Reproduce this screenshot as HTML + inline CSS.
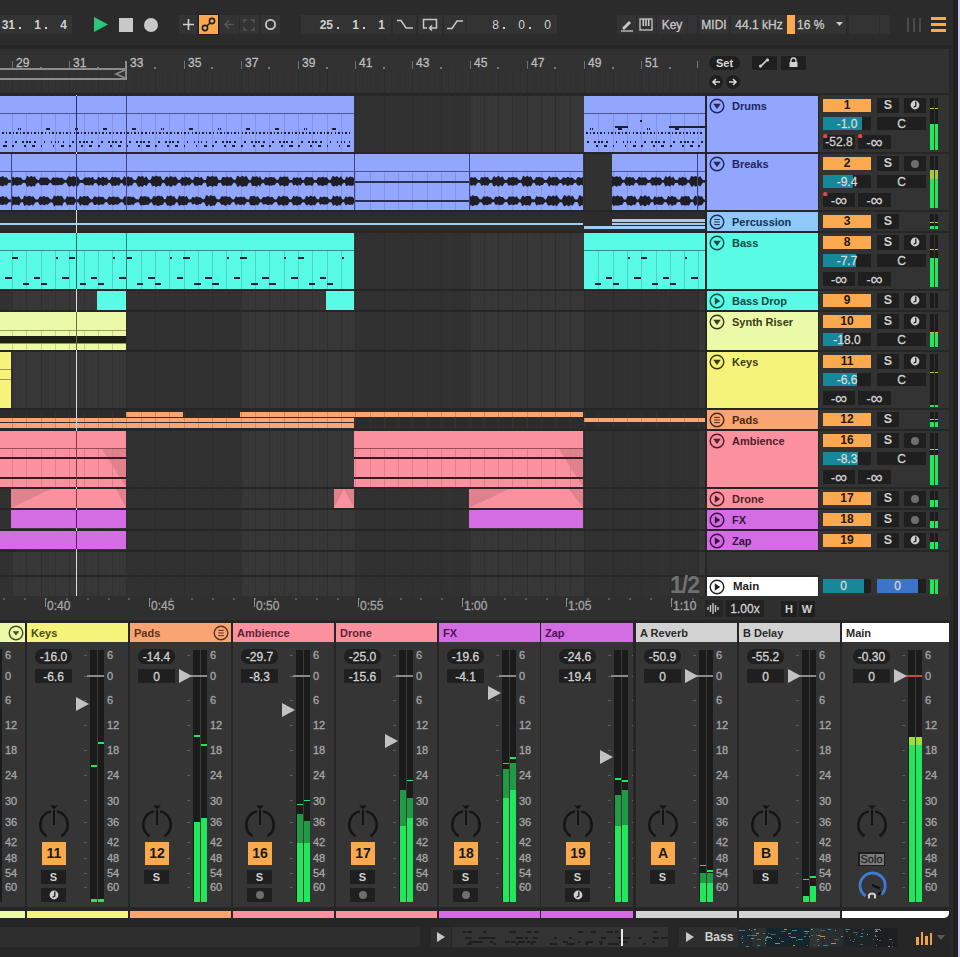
<!DOCTYPE html><html><head><meta charset="utf-8"><style>
html,body{margin:0;padding:0;width:960px;height:957px;overflow:hidden;background:#2b2b2b;font-family:"Liberation Sans",sans-serif;}
div{position:absolute;box-sizing:border-box;white-space:nowrap;}
.sb{-webkit-text-stroke:0.35px currentColor;}
svg{position:absolute;}
</style></head><body>
<div style="left:0px;top:0px;width:960px;height:49px;background:#2b2b2b;"></div>
<div style="left:0px;top:45px;width:960px;height:5px;background:#262626;"></div>
<div style="left:0px;top:15px;width:72px;height:19px;background:#333333;"></div>
<div style="left:-15px;top:17.6px;width:30px;text-align:right;font-size:12px;line-height:14px;color:#cfcfcf;font-weight:bold">31</div>
<div style="left:19px;top:27px;width:2px;height:2px;background:#cfcfcf;"></div>
<div style="left:11px;top:17.6px;width:30px;text-align:right;font-size:12px;line-height:14px;color:#cfcfcf;font-weight:bold">1</div>
<div style="left:45px;top:27px;width:2px;height:2px;background:#cfcfcf;"></div>
<div style="left:37px;top:17.6px;width:30px;text-align:right;font-size:12px;line-height:14px;color:#cfcfcf;font-weight:bold">4</div>
<svg style="left:93px;top:16px" width="16" height="17"><polygon points="1,1 15,8.5 1,16" fill="#2dc77a"/></svg>
<div style="left:119px;top:18px;width:14px;height:14px;background:#c8c8c8;"></div>
<svg style="left:143px;top:17px" width="16" height="16"><circle cx="8" cy="8" r="7" fill="#c8c8c8"/></svg>
<div style="left:179px;top:15px;width:18px;height:19px;background:#333333;"></div>
<svg style="left:181px;top:17px" width="15" height="15"><path d="M7.5 2V13 M2 7.5H13" stroke="#d0d0d0" stroke-width="1.6"/></svg>
<div style="left:198px;top:14px;width:21px;height:21px;background:#1e1e1e;"></div>
<div style="left:199px;top:15px;width:19px;height:19px;background:#fba94e;"></div>
<svg style="left:199px;top:15px" width="19" height="19"><circle cx="6" cy="13" r="2.6" fill="none" stroke="#222" stroke-width="1.6"/><circle cx="13" cy="6" r="2.6" fill="none" stroke="#222" stroke-width="1.6"/><line x1="8" y1="11" x2="11" y2="8" stroke="#222" stroke-width="1.6"/></svg>
<div style="left:220px;top:15px;width:19px;height:19px;background:#333333;"></div>
<svg style="left:222px;top:18px" width="14" height="13"><path d="M12 6.5 H3 M7 2.5 L3 6.5 L7 10.5" fill="none" stroke="#555" stroke-width="1.6"/></svg>
<div style="left:240px;top:15px;width:19px;height:19px;background:#333333;"></div>
<svg style="left:243px;top:19px" width="12" height="12"><path d="M1 4V1H4 M8 1H11V4 M11 8V11H8 M4 11H1V8" fill="none" stroke="#555" stroke-width="1.4"/></svg>
<div style="left:261px;top:15px;width:19px;height:19px;background:#333333;"></div>
<svg style="left:261px;top:15px" width="19" height="19"><circle cx="9.5" cy="9.5" r="4.6" fill="none" stroke="#c8c8c8" stroke-width="1.8"/></svg>
<div style="left:301px;top:15px;width:90px;height:19px;background:#333333;"></div>
<div style="left:303px;top:17.6px;width:30px;text-align:right;font-size:12px;line-height:14px;color:#cfcfcf;font-weight:bold">25</div>
<div style="left:337px;top:27px;width:2px;height:2px;background:#cfcfcf;"></div>
<div style="left:329px;top:17.6px;width:30px;text-align:right;font-size:12px;line-height:14px;color:#cfcfcf;font-weight:bold">1</div>
<div style="left:363px;top:27px;width:2px;height:2px;background:#cfcfcf;"></div>
<div style="left:355px;top:17.6px;width:30px;text-align:right;font-size:12px;line-height:14px;color:#cfcfcf;font-weight:bold">1</div>
<div style="left:393px;top:15px;width:23px;height:19px;background:#333333;"></div>
<svg style="left:396px;top:19px" width="18" height="11"><path d="M1 1.5H5L10 9H17" fill="none" stroke="#c8c8c8" stroke-width="1.5"/></svg>
<div style="left:418px;top:15px;width:24px;height:19px;background:#333333;"></div>
<svg style="left:421px;top:17px" width="18" height="15"><path d="M6 11H2.5V2.5H15.5V11H9 M11 8.5 L8.5 11 L11 13.5" fill="none" stroke="#c8c8c8" stroke-width="1.5"/></svg>
<div style="left:444px;top:15px;width:22px;height:19px;background:#333333;"></div>
<svg style="left:446px;top:19px" width="18" height="11"><path d="M1 9.5H6L11 2H17" fill="none" stroke="#c8c8c8" stroke-width="1.5"/></svg>
<div style="left:467px;top:15px;width:90px;height:19px;background:#333333;"></div>
<div style="left:469px;top:17.6px;width:30px;text-align:right;font-size:12px;line-height:14px;color:#cfcfcf;font-weight:normal">8</div>
<div style="left:503px;top:27px;width:2px;height:2px;background:#cfcfcf;"></div>
<div style="left:495px;top:17.6px;width:30px;text-align:right;font-size:12px;line-height:14px;color:#cfcfcf;font-weight:normal">0</div>
<div style="left:529px;top:27px;width:2px;height:2px;background:#cfcfcf;"></div>
<div style="left:521px;top:17.6px;width:30px;text-align:right;font-size:12px;line-height:14px;color:#cfcfcf;font-weight:normal">0</div>
<div style="left:617px;top:15px;width:19px;height:19px;background:#333333;"></div>
<svg style="left:619px;top:17px" width="15" height="15"><path d="M3 11 L10 4 L12 6 L5 13 Z" fill="#c8c8c8"/><line x1="2" y1="14" x2="14" y2="14" stroke="#c8c8c8" stroke-width="1.3"/></svg>
<div style="left:637px;top:15px;width:19px;height:19px;background:#333333;"></div>
<svg style="left:639px;top:18px" width="14" height="13"><rect x="1" y="1" width="12" height="11" fill="none" stroke="#c8c8c8" stroke-width="1.3"/><rect x="3.5" y="1" width="1.6" height="7" fill="#c8c8c8"/><rect x="6.2" y="1" width="1.6" height="7" fill="#c8c8c8"/><rect x="8.9" y="1" width="1.6" height="7" fill="#c8c8c8"/></svg>
<div style="left:657px;top:15px;width:30px;height:19px;background:#333333;"></div>
<div style="left:657px;top:18px;font-size:12px;color:#c8c8c8;font-weight:normal;-webkit-text-stroke:0.3px #c8c8c8;width:30px;text-align:center;line-height:14px;">Key</div>
<div style="left:688px;top:15px;width:9px;height:19px;background:#333333;"></div>
<div style="left:699px;top:15px;width:30px;height:19px;background:#333333;"></div>
<div style="left:699px;top:18px;font-size:12px;color:#c8c8c8;font-weight:normal;-webkit-text-stroke:0.3px #c8c8c8;width:30px;text-align:center;line-height:14px;">MIDI</div>
<div style="left:731px;top:15px;width:56px;height:19px;background:#333333;"></div>
<div style="left:731px;top:18px;font-size:12px;color:#c8c8c8;font-weight:normal;-webkit-text-stroke:0.3px #c8c8c8;width:56px;text-align:center;line-height:14px;">44.1 kHz</div>
<div style="left:787px;top:15px;width:8px;height:19px;background:#fba94e;"></div>
<div style="left:795px;top:15px;width:51px;height:19px;background:#333333;"></div>
<div style="left:797px;top:18px;font-size:12px;color:#c8c8c8;font-weight:normal;-webkit-text-stroke:0.3px #c8c8c8;line-height:14px;">16 %</div>
<svg style="left:836px;top:22px" width="7" height="5"><polygon points="0,0 7,0 3.5,4" fill="#c8c8c8"/></svg>
<div style="left:849px;top:15px;width:30px;height:19px;background:#333333;"></div>
<div style="left:880px;top:15px;width:10px;height:19px;background:#333333;"></div>
<div style="left:907px;top:18px;width:2px;height:14px;background:#4a4a4a;"></div>
<div style="left:913px;top:18px;width:2px;height:14px;background:#4a4a4a;"></div>
<div style="left:919px;top:18px;width:2px;height:14px;background:#4a4a4a;"></div>
<div style="left:931px;top:17px;width:15px;height:3px;background:#fba94e;"></div>
<div style="left:931px;top:23px;width:15px;height:3px;background:#fba94e;"></div>
<div style="left:931px;top:29px;width:15px;height:3px;background:#fba94e;"></div>
<div style="left:0px;top:49px;width:950px;height:44px;background:#323232;"></div>
<div style="left:0px;top:93px;width:705px;height:3px;background:#262626;"></div>
<div style="left:5px;top:69px;width:1px;height:24px;background:#2f2f2f;"></div>
<div style="left:12px;top:69px;width:1px;height:24px;background:#2c2c2c;"></div>
<div style="left:19px;top:69px;width:1px;height:24px;background:#2f2f2f;"></div>
<div style="left:26px;top:69px;width:1px;height:24px;background:#2f2f2f;"></div>
<div style="left:33px;top:69px;width:1px;height:24px;background:#2f2f2f;"></div>
<div style="left:41px;top:69px;width:1px;height:24px;background:#2c2c2c;"></div>
<div style="left:48px;top:69px;width:1px;height:24px;background:#2f2f2f;"></div>
<div style="left:55px;top:69px;width:1px;height:24px;background:#2f2f2f;"></div>
<div style="left:62px;top:69px;width:1px;height:24px;background:#2f2f2f;"></div>
<div style="left:69px;top:69px;width:1px;height:24px;background:#2c2c2c;"></div>
<div style="left:76px;top:69px;width:1px;height:24px;background:#2f2f2f;"></div>
<div style="left:84px;top:69px;width:1px;height:24px;background:#2f2f2f;"></div>
<div style="left:91px;top:69px;width:1px;height:24px;background:#2f2f2f;"></div>
<div style="left:98px;top:69px;width:1px;height:24px;background:#2c2c2c;"></div>
<div style="left:105px;top:69px;width:1px;height:24px;background:#2f2f2f;"></div>
<div style="left:112px;top:69px;width:1px;height:24px;background:#2f2f2f;"></div>
<div style="left:119px;top:69px;width:1px;height:24px;background:#2f2f2f;"></div>
<div style="left:126px;top:69px;width:1px;height:24px;background:#2c2c2c;"></div>
<div style="left:134px;top:69px;width:1px;height:24px;background:#2f2f2f;"></div>
<div style="left:141px;top:69px;width:1px;height:24px;background:#2f2f2f;"></div>
<div style="left:148px;top:69px;width:1px;height:24px;background:#2f2f2f;"></div>
<div style="left:155px;top:69px;width:1px;height:24px;background:#2c2c2c;"></div>
<div style="left:162px;top:69px;width:1px;height:24px;background:#2f2f2f;"></div>
<div style="left:169px;top:69px;width:1px;height:24px;background:#2f2f2f;"></div>
<div style="left:176px;top:69px;width:1px;height:24px;background:#2f2f2f;"></div>
<div style="left:184px;top:69px;width:1px;height:24px;background:#2c2c2c;"></div>
<div style="left:191px;top:69px;width:1px;height:24px;background:#2f2f2f;"></div>
<div style="left:198px;top:69px;width:1px;height:24px;background:#2f2f2f;"></div>
<div style="left:205px;top:69px;width:1px;height:24px;background:#2f2f2f;"></div>
<div style="left:212px;top:69px;width:1px;height:24px;background:#2c2c2c;"></div>
<div style="left:219px;top:69px;width:1px;height:24px;background:#2f2f2f;"></div>
<div style="left:226px;top:69px;width:1px;height:24px;background:#2f2f2f;"></div>
<div style="left:234px;top:69px;width:1px;height:24px;background:#2f2f2f;"></div>
<div style="left:241px;top:69px;width:1px;height:24px;background:#2c2c2c;"></div>
<div style="left:248px;top:69px;width:1px;height:24px;background:#2f2f2f;"></div>
<div style="left:255px;top:69px;width:1px;height:24px;background:#2f2f2f;"></div>
<div style="left:262px;top:69px;width:1px;height:24px;background:#2f2f2f;"></div>
<div style="left:269px;top:69px;width:1px;height:24px;background:#2c2c2c;"></div>
<div style="left:277px;top:69px;width:1px;height:24px;background:#2f2f2f;"></div>
<div style="left:284px;top:69px;width:1px;height:24px;background:#2f2f2f;"></div>
<div style="left:291px;top:69px;width:1px;height:24px;background:#2f2f2f;"></div>
<div style="left:298px;top:69px;width:1px;height:24px;background:#2c2c2c;"></div>
<div style="left:305px;top:69px;width:1px;height:24px;background:#2f2f2f;"></div>
<div style="left:312px;top:69px;width:1px;height:24px;background:#2f2f2f;"></div>
<div style="left:319px;top:69px;width:1px;height:24px;background:#2f2f2f;"></div>
<div style="left:327px;top:69px;width:1px;height:24px;background:#2c2c2c;"></div>
<div style="left:334px;top:69px;width:1px;height:24px;background:#2f2f2f;"></div>
<div style="left:341px;top:69px;width:1px;height:24px;background:#2f2f2f;"></div>
<div style="left:348px;top:69px;width:1px;height:24px;background:#2f2f2f;"></div>
<div style="left:355px;top:69px;width:1px;height:24px;background:#2c2c2c;"></div>
<div style="left:362px;top:69px;width:1px;height:24px;background:#2f2f2f;"></div>
<div style="left:370px;top:69px;width:1px;height:24px;background:#2f2f2f;"></div>
<div style="left:377px;top:69px;width:1px;height:24px;background:#2f2f2f;"></div>
<div style="left:384px;top:69px;width:1px;height:24px;background:#2c2c2c;"></div>
<div style="left:391px;top:69px;width:1px;height:24px;background:#2f2f2f;"></div>
<div style="left:398px;top:69px;width:1px;height:24px;background:#2f2f2f;"></div>
<div style="left:405px;top:69px;width:1px;height:24px;background:#2f2f2f;"></div>
<div style="left:412px;top:69px;width:1px;height:24px;background:#2c2c2c;"></div>
<div style="left:420px;top:69px;width:1px;height:24px;background:#2f2f2f;"></div>
<div style="left:427px;top:69px;width:1px;height:24px;background:#2f2f2f;"></div>
<div style="left:434px;top:69px;width:1px;height:24px;background:#2f2f2f;"></div>
<div style="left:441px;top:69px;width:1px;height:24px;background:#2c2c2c;"></div>
<div style="left:448px;top:69px;width:1px;height:24px;background:#2f2f2f;"></div>
<div style="left:455px;top:69px;width:1px;height:24px;background:#2f2f2f;"></div>
<div style="left:462px;top:69px;width:1px;height:24px;background:#2f2f2f;"></div>
<div style="left:470px;top:69px;width:1px;height:24px;background:#2c2c2c;"></div>
<div style="left:477px;top:69px;width:1px;height:24px;background:#2f2f2f;"></div>
<div style="left:484px;top:69px;width:1px;height:24px;background:#2f2f2f;"></div>
<div style="left:491px;top:69px;width:1px;height:24px;background:#2f2f2f;"></div>
<div style="left:498px;top:69px;width:1px;height:24px;background:#2c2c2c;"></div>
<div style="left:505px;top:69px;width:1px;height:24px;background:#2f2f2f;"></div>
<div style="left:512px;top:69px;width:1px;height:24px;background:#2f2f2f;"></div>
<div style="left:520px;top:69px;width:1px;height:24px;background:#2f2f2f;"></div>
<div style="left:527px;top:69px;width:1px;height:24px;background:#2c2c2c;"></div>
<div style="left:534px;top:69px;width:1px;height:24px;background:#2f2f2f;"></div>
<div style="left:541px;top:69px;width:1px;height:24px;background:#2f2f2f;"></div>
<div style="left:548px;top:69px;width:1px;height:24px;background:#2f2f2f;"></div>
<div style="left:555px;top:69px;width:1px;height:24px;background:#2c2c2c;"></div>
<div style="left:563px;top:69px;width:1px;height:24px;background:#2f2f2f;"></div>
<div style="left:570px;top:69px;width:1px;height:24px;background:#2f2f2f;"></div>
<div style="left:577px;top:69px;width:1px;height:24px;background:#2f2f2f;"></div>
<div style="left:584px;top:69px;width:1px;height:24px;background:#2c2c2c;"></div>
<div style="left:591px;top:69px;width:1px;height:24px;background:#2f2f2f;"></div>
<div style="left:598px;top:69px;width:1px;height:24px;background:#2f2f2f;"></div>
<div style="left:605px;top:69px;width:1px;height:24px;background:#2f2f2f;"></div>
<div style="left:613px;top:69px;width:1px;height:24px;background:#2c2c2c;"></div>
<div style="left:620px;top:69px;width:1px;height:24px;background:#2f2f2f;"></div>
<div style="left:627px;top:69px;width:1px;height:24px;background:#2f2f2f;"></div>
<div style="left:634px;top:69px;width:1px;height:24px;background:#2f2f2f;"></div>
<div style="left:641px;top:69px;width:1px;height:24px;background:#2c2c2c;"></div>
<div style="left:648px;top:69px;width:1px;height:24px;background:#2f2f2f;"></div>
<div style="left:656px;top:69px;width:1px;height:24px;background:#2f2f2f;"></div>
<div style="left:663px;top:69px;width:1px;height:24px;background:#2f2f2f;"></div>
<div style="left:670px;top:69px;width:1px;height:24px;background:#2c2c2c;"></div>
<div style="left:677px;top:69px;width:1px;height:24px;background:#2f2f2f;"></div>
<div style="left:684px;top:69px;width:1px;height:24px;background:#2f2f2f;"></div>
<div style="left:691px;top:69px;width:1px;height:24px;background:#2f2f2f;"></div>
<div style="left:698px;top:69px;width:1px;height:24px;background:#2c2c2c;"></div>
<div style="left:697px;top:61px;width:1px;height:7px;background:#7a7a7a;"></div>
<div style="left:12px;top:61px;width:1px;height:8px;background:#707070;"></div>
<div style="left:16px;top:56px;font-size:12px;color:#bcbcbc;font-weight:normal;-webkit-text-stroke:0.3px #bcbcbc;line-height:14px;">29</div>
<div style="left:40px;top:67px;width:2px;height:2px;background:#7a7a7a;"></div>
<div style="left:69px;top:61px;width:1px;height:8px;background:#707070;"></div>
<div style="left:73px;top:56px;font-size:12px;color:#bcbcbc;font-weight:normal;-webkit-text-stroke:0.3px #bcbcbc;line-height:14px;">31</div>
<div style="left:97px;top:67px;width:2px;height:2px;background:#7a7a7a;"></div>
<div style="left:126px;top:61px;width:1px;height:8px;background:#707070;"></div>
<div style="left:130px;top:56px;font-size:12px;color:#bcbcbc;font-weight:normal;-webkit-text-stroke:0.3px #bcbcbc;line-height:14px;">33</div>
<div style="left:154px;top:67px;width:2px;height:2px;background:#7a7a7a;"></div>
<div style="left:184px;top:61px;width:1px;height:8px;background:#707070;"></div>
<div style="left:188px;top:56px;font-size:12px;color:#bcbcbc;font-weight:normal;-webkit-text-stroke:0.3px #bcbcbc;line-height:14px;">35</div>
<div style="left:211px;top:67px;width:2px;height:2px;background:#7a7a7a;"></div>
<div style="left:241px;top:61px;width:1px;height:8px;background:#707070;"></div>
<div style="left:245px;top:56px;font-size:12px;color:#bcbcbc;font-weight:normal;-webkit-text-stroke:0.3px #bcbcbc;line-height:14px;">37</div>
<div style="left:268px;top:67px;width:2px;height:2px;background:#7a7a7a;"></div>
<div style="left:298px;top:61px;width:1px;height:8px;background:#707070;"></div>
<div style="left:302px;top:56px;font-size:12px;color:#bcbcbc;font-weight:normal;-webkit-text-stroke:0.3px #bcbcbc;line-height:14px;">39</div>
<div style="left:326px;top:67px;width:2px;height:2px;background:#7a7a7a;"></div>
<div style="left:355px;top:61px;width:1px;height:8px;background:#707070;"></div>
<div style="left:359px;top:56px;font-size:12px;color:#bcbcbc;font-weight:normal;-webkit-text-stroke:0.3px #bcbcbc;line-height:14px;">41</div>
<div style="left:383px;top:67px;width:2px;height:2px;background:#7a7a7a;"></div>
<div style="left:412px;top:61px;width:1px;height:8px;background:#707070;"></div>
<div style="left:416px;top:56px;font-size:12px;color:#bcbcbc;font-weight:normal;-webkit-text-stroke:0.3px #bcbcbc;line-height:14px;">43</div>
<div style="left:440px;top:67px;width:2px;height:2px;background:#7a7a7a;"></div>
<div style="left:470px;top:61px;width:1px;height:8px;background:#707070;"></div>
<div style="left:474px;top:56px;font-size:12px;color:#bcbcbc;font-weight:normal;-webkit-text-stroke:0.3px #bcbcbc;line-height:14px;">45</div>
<div style="left:497px;top:67px;width:2px;height:2px;background:#7a7a7a;"></div>
<div style="left:527px;top:61px;width:1px;height:8px;background:#707070;"></div>
<div style="left:531px;top:56px;font-size:12px;color:#bcbcbc;font-weight:normal;-webkit-text-stroke:0.3px #bcbcbc;line-height:14px;">47</div>
<div style="left:554px;top:67px;width:2px;height:2px;background:#7a7a7a;"></div>
<div style="left:584px;top:61px;width:1px;height:8px;background:#707070;"></div>
<div style="left:588px;top:56px;font-size:12px;color:#bcbcbc;font-weight:normal;-webkit-text-stroke:0.3px #bcbcbc;line-height:14px;">49</div>
<div style="left:612px;top:67px;width:2px;height:2px;background:#7a7a7a;"></div>
<div style="left:641px;top:61px;width:1px;height:8px;background:#707070;"></div>
<div style="left:645px;top:56px;font-size:12px;color:#bcbcbc;font-weight:normal;-webkit-text-stroke:0.3px #bcbcbc;line-height:14px;">51</div>
<div style="left:669px;top:67px;width:2px;height:2px;background:#7a7a7a;"></div>
<div style="left:0px;top:68px;width:126px;height:2px;background:#8c8c8c;"></div>
<div style="left:0px;top:78px;width:127px;height:2px;background:#8c8c8c;"></div>
<div style="left:125px;top:61px;width:2px;height:19px;background:#8c8c8c;"></div>
<svg style="left:114px;top:68px" width="13" height="12"><path d="M12 1.5 L2 6 L12 10.5" fill="none" stroke="#8c8c8c" stroke-width="1.6"/></svg>
<div style="left:0px;top:95px;width:705px;height:502px;background:#262626;"></div>
<div style="left:0px;top:96px;width:12px;height:56px;background:#313131;"></div>
<div style="left:12px;top:96px;width:114px;height:56px;background:#373737;"></div>
<div style="left:126px;top:96px;width:115px;height:56px;background:#313131;"></div>
<div style="left:241px;top:96px;width:114px;height:56px;background:#373737;"></div>
<div style="left:355px;top:96px;width:115px;height:56px;background:#313131;"></div>
<div style="left:470px;top:96px;width:114px;height:56px;background:#373737;"></div>
<div style="left:584px;top:96px;width:114px;height:56px;background:#313131;"></div>
<div style="left:698px;top:96px;width:7px;height:56px;background:#373737;"></div>
<div style="left:0px;top:154px;width:12px;height:56px;background:#313131;"></div>
<div style="left:12px;top:154px;width:114px;height:56px;background:#373737;"></div>
<div style="left:126px;top:154px;width:115px;height:56px;background:#313131;"></div>
<div style="left:241px;top:154px;width:114px;height:56px;background:#373737;"></div>
<div style="left:355px;top:154px;width:115px;height:56px;background:#313131;"></div>
<div style="left:470px;top:154px;width:114px;height:56px;background:#373737;"></div>
<div style="left:584px;top:154px;width:114px;height:56px;background:#313131;"></div>
<div style="left:698px;top:154px;width:7px;height:56px;background:#373737;"></div>
<div style="left:0px;top:212px;width:12px;height:19px;background:#313131;"></div>
<div style="left:12px;top:212px;width:114px;height:19px;background:#373737;"></div>
<div style="left:126px;top:212px;width:115px;height:19px;background:#313131;"></div>
<div style="left:241px;top:212px;width:114px;height:19px;background:#373737;"></div>
<div style="left:355px;top:212px;width:115px;height:19px;background:#313131;"></div>
<div style="left:470px;top:212px;width:114px;height:19px;background:#373737;"></div>
<div style="left:584px;top:212px;width:114px;height:19px;background:#313131;"></div>
<div style="left:698px;top:212px;width:7px;height:19px;background:#373737;"></div>
<div style="left:0px;top:233px;width:12px;height:56px;background:#313131;"></div>
<div style="left:12px;top:233px;width:114px;height:56px;background:#373737;"></div>
<div style="left:126px;top:233px;width:115px;height:56px;background:#313131;"></div>
<div style="left:241px;top:233px;width:114px;height:56px;background:#373737;"></div>
<div style="left:355px;top:233px;width:115px;height:56px;background:#313131;"></div>
<div style="left:470px;top:233px;width:114px;height:56px;background:#373737;"></div>
<div style="left:584px;top:233px;width:114px;height:56px;background:#313131;"></div>
<div style="left:698px;top:233px;width:7px;height:56px;background:#373737;"></div>
<div style="left:0px;top:291px;width:12px;height:19px;background:#313131;"></div>
<div style="left:12px;top:291px;width:114px;height:19px;background:#373737;"></div>
<div style="left:126px;top:291px;width:115px;height:19px;background:#313131;"></div>
<div style="left:241px;top:291px;width:114px;height:19px;background:#373737;"></div>
<div style="left:355px;top:291px;width:115px;height:19px;background:#313131;"></div>
<div style="left:470px;top:291px;width:114px;height:19px;background:#373737;"></div>
<div style="left:584px;top:291px;width:114px;height:19px;background:#313131;"></div>
<div style="left:698px;top:291px;width:7px;height:19px;background:#373737;"></div>
<div style="left:0px;top:312px;width:12px;height:38px;background:#313131;"></div>
<div style="left:12px;top:312px;width:114px;height:38px;background:#373737;"></div>
<div style="left:126px;top:312px;width:115px;height:38px;background:#313131;"></div>
<div style="left:241px;top:312px;width:114px;height:38px;background:#373737;"></div>
<div style="left:355px;top:312px;width:115px;height:38px;background:#313131;"></div>
<div style="left:470px;top:312px;width:114px;height:38px;background:#373737;"></div>
<div style="left:584px;top:312px;width:114px;height:38px;background:#313131;"></div>
<div style="left:698px;top:312px;width:7px;height:38px;background:#373737;"></div>
<div style="left:0px;top:352px;width:12px;height:56px;background:#313131;"></div>
<div style="left:12px;top:352px;width:114px;height:56px;background:#373737;"></div>
<div style="left:126px;top:352px;width:115px;height:56px;background:#313131;"></div>
<div style="left:241px;top:352px;width:114px;height:56px;background:#373737;"></div>
<div style="left:355px;top:352px;width:115px;height:56px;background:#313131;"></div>
<div style="left:470px;top:352px;width:114px;height:56px;background:#373737;"></div>
<div style="left:584px;top:352px;width:114px;height:56px;background:#313131;"></div>
<div style="left:698px;top:352px;width:7px;height:56px;background:#373737;"></div>
<div style="left:0px;top:410px;width:12px;height:19px;background:#313131;"></div>
<div style="left:12px;top:410px;width:114px;height:19px;background:#373737;"></div>
<div style="left:126px;top:410px;width:115px;height:19px;background:#313131;"></div>
<div style="left:241px;top:410px;width:114px;height:19px;background:#373737;"></div>
<div style="left:355px;top:410px;width:115px;height:19px;background:#313131;"></div>
<div style="left:470px;top:410px;width:114px;height:19px;background:#373737;"></div>
<div style="left:584px;top:410px;width:114px;height:19px;background:#313131;"></div>
<div style="left:698px;top:410px;width:7px;height:19px;background:#373737;"></div>
<div style="left:0px;top:431px;width:12px;height:56px;background:#313131;"></div>
<div style="left:12px;top:431px;width:114px;height:56px;background:#373737;"></div>
<div style="left:126px;top:431px;width:115px;height:56px;background:#313131;"></div>
<div style="left:241px;top:431px;width:114px;height:56px;background:#373737;"></div>
<div style="left:355px;top:431px;width:115px;height:56px;background:#313131;"></div>
<div style="left:470px;top:431px;width:114px;height:56px;background:#373737;"></div>
<div style="left:584px;top:431px;width:114px;height:56px;background:#313131;"></div>
<div style="left:698px;top:431px;width:7px;height:56px;background:#373737;"></div>
<div style="left:0px;top:489px;width:12px;height:19px;background:#313131;"></div>
<div style="left:12px;top:489px;width:114px;height:19px;background:#373737;"></div>
<div style="left:126px;top:489px;width:115px;height:19px;background:#313131;"></div>
<div style="left:241px;top:489px;width:114px;height:19px;background:#373737;"></div>
<div style="left:355px;top:489px;width:115px;height:19px;background:#313131;"></div>
<div style="left:470px;top:489px;width:114px;height:19px;background:#373737;"></div>
<div style="left:584px;top:489px;width:114px;height:19px;background:#313131;"></div>
<div style="left:698px;top:489px;width:7px;height:19px;background:#373737;"></div>
<div style="left:0px;top:510px;width:12px;height:19px;background:#313131;"></div>
<div style="left:12px;top:510px;width:114px;height:19px;background:#373737;"></div>
<div style="left:126px;top:510px;width:115px;height:19px;background:#313131;"></div>
<div style="left:241px;top:510px;width:114px;height:19px;background:#373737;"></div>
<div style="left:355px;top:510px;width:115px;height:19px;background:#313131;"></div>
<div style="left:470px;top:510px;width:114px;height:19px;background:#373737;"></div>
<div style="left:584px;top:510px;width:114px;height:19px;background:#313131;"></div>
<div style="left:698px;top:510px;width:7px;height:19px;background:#373737;"></div>
<div style="left:0px;top:531px;width:12px;height:19px;background:#313131;"></div>
<div style="left:12px;top:531px;width:114px;height:19px;background:#373737;"></div>
<div style="left:126px;top:531px;width:115px;height:19px;background:#313131;"></div>
<div style="left:241px;top:531px;width:114px;height:19px;background:#373737;"></div>
<div style="left:355px;top:531px;width:115px;height:19px;background:#313131;"></div>
<div style="left:470px;top:531px;width:114px;height:19px;background:#373737;"></div>
<div style="left:584px;top:531px;width:114px;height:19px;background:#313131;"></div>
<div style="left:698px;top:531px;width:7px;height:19px;background:#373737;"></div>
<div style="left:0px;top:552px;width:12px;height:23px;background:#313131;"></div>
<div style="left:12px;top:552px;width:114px;height:23px;background:#373737;"></div>
<div style="left:126px;top:552px;width:115px;height:23px;background:#313131;"></div>
<div style="left:241px;top:552px;width:114px;height:23px;background:#373737;"></div>
<div style="left:355px;top:552px;width:115px;height:23px;background:#313131;"></div>
<div style="left:470px;top:552px;width:114px;height:23px;background:#373737;"></div>
<div style="left:584px;top:552px;width:114px;height:23px;background:#313131;"></div>
<div style="left:698px;top:552px;width:7px;height:23px;background:#373737;"></div>
<div style="left:0px;top:577px;width:12px;height:19px;background:#313131;"></div>
<div style="left:12px;top:577px;width:114px;height:19px;background:#373737;"></div>
<div style="left:126px;top:577px;width:115px;height:19px;background:#313131;"></div>
<div style="left:241px;top:577px;width:114px;height:19px;background:#373737;"></div>
<div style="left:355px;top:577px;width:115px;height:19px;background:#313131;"></div>
<div style="left:470px;top:577px;width:114px;height:19px;background:#373737;"></div>
<div style="left:584px;top:577px;width:114px;height:19px;background:#313131;"></div>
<div style="left:698px;top:577px;width:7px;height:19px;background:#373737;"></div>
<div style="left:5px;top:95px;width:1px;height:501px;background:#333333;opacity:0.8"></div><div style="left:12px;top:95px;width:1px;height:501px;background:#2c2c2c;opacity:0.8"></div><div style="left:19px;top:95px;width:1px;height:501px;background:#333333;opacity:0.8"></div><div style="left:26px;top:95px;width:1px;height:501px;background:#303030;opacity:0.8"></div><div style="left:33px;top:95px;width:1px;height:501px;background:#333333;opacity:0.8"></div><div style="left:41px;top:95px;width:1px;height:501px;background:#2c2c2c;opacity:0.8"></div><div style="left:48px;top:95px;width:1px;height:501px;background:#333333;opacity:0.8"></div><div style="left:55px;top:95px;width:1px;height:501px;background:#303030;opacity:0.8"></div><div style="left:62px;top:95px;width:1px;height:501px;background:#333333;opacity:0.8"></div><div style="left:69px;top:95px;width:1px;height:501px;background:#2c2c2c;opacity:0.8"></div><div style="left:76px;top:95px;width:1px;height:501px;background:#333333;opacity:0.8"></div><div style="left:84px;top:95px;width:1px;height:501px;background:#303030;opacity:0.8"></div><div style="left:91px;top:95px;width:1px;height:501px;background:#333333;opacity:0.8"></div><div style="left:98px;top:95px;width:1px;height:501px;background:#2c2c2c;opacity:0.8"></div><div style="left:105px;top:95px;width:1px;height:501px;background:#333333;opacity:0.8"></div><div style="left:112px;top:95px;width:1px;height:501px;background:#303030;opacity:0.8"></div><div style="left:119px;top:95px;width:1px;height:501px;background:#333333;opacity:0.8"></div><div style="left:126px;top:95px;width:1px;height:501px;background:#2c2c2c;opacity:0.8"></div><div style="left:134px;top:95px;width:1px;height:501px;background:#333333;opacity:0.8"></div><div style="left:141px;top:95px;width:1px;height:501px;background:#303030;opacity:0.8"></div><div style="left:148px;top:95px;width:1px;height:501px;background:#333333;opacity:0.8"></div><div style="left:155px;top:95px;width:1px;height:501px;background:#2c2c2c;opacity:0.8"></div><div style="left:162px;top:95px;width:1px;height:501px;background:#333333;opacity:0.8"></div><div style="left:169px;top:95px;width:1px;height:501px;background:#303030;opacity:0.8"></div><div style="left:176px;top:95px;width:1px;height:501px;background:#333333;opacity:0.8"></div><div style="left:184px;top:95px;width:1px;height:501px;background:#2c2c2c;opacity:0.8"></div><div style="left:191px;top:95px;width:1px;height:501px;background:#333333;opacity:0.8"></div><div style="left:198px;top:95px;width:1px;height:501px;background:#303030;opacity:0.8"></div><div style="left:205px;top:95px;width:1px;height:501px;background:#333333;opacity:0.8"></div><div style="left:212px;top:95px;width:1px;height:501px;background:#2c2c2c;opacity:0.8"></div><div style="left:219px;top:95px;width:1px;height:501px;background:#333333;opacity:0.8"></div><div style="left:226px;top:95px;width:1px;height:501px;background:#303030;opacity:0.8"></div><div style="left:234px;top:95px;width:1px;height:501px;background:#333333;opacity:0.8"></div><div style="left:241px;top:95px;width:1px;height:501px;background:#2c2c2c;opacity:0.8"></div><div style="left:248px;top:95px;width:1px;height:501px;background:#333333;opacity:0.8"></div><div style="left:255px;top:95px;width:1px;height:501px;background:#303030;opacity:0.8"></div><div style="left:262px;top:95px;width:1px;height:501px;background:#333333;opacity:0.8"></div><div style="left:269px;top:95px;width:1px;height:501px;background:#2c2c2c;opacity:0.8"></div><div style="left:277px;top:95px;width:1px;height:501px;background:#333333;opacity:0.8"></div><div style="left:284px;top:95px;width:1px;height:501px;background:#303030;opacity:0.8"></div><div style="left:291px;top:95px;width:1px;height:501px;background:#333333;opacity:0.8"></div><div style="left:298px;top:95px;width:1px;height:501px;background:#2c2c2c;opacity:0.8"></div><div style="left:305px;top:95px;width:1px;height:501px;background:#333333;opacity:0.8"></div><div style="left:312px;top:95px;width:1px;height:501px;background:#303030;opacity:0.8"></div><div style="left:319px;top:95px;width:1px;height:501px;background:#333333;opacity:0.8"></div><div style="left:327px;top:95px;width:1px;height:501px;background:#2c2c2c;opacity:0.8"></div><div style="left:334px;top:95px;width:1px;height:501px;background:#333333;opacity:0.8"></div><div style="left:341px;top:95px;width:1px;height:501px;background:#303030;opacity:0.8"></div><div style="left:348px;top:95px;width:1px;height:501px;background:#333333;opacity:0.8"></div><div style="left:355px;top:95px;width:1px;height:501px;background:#2c2c2c;opacity:0.8"></div><div style="left:362px;top:95px;width:1px;height:501px;background:#333333;opacity:0.8"></div><div style="left:370px;top:95px;width:1px;height:501px;background:#303030;opacity:0.8"></div><div style="left:377px;top:95px;width:1px;height:501px;background:#333333;opacity:0.8"></div><div style="left:384px;top:95px;width:1px;height:501px;background:#2c2c2c;opacity:0.8"></div><div style="left:391px;top:95px;width:1px;height:501px;background:#333333;opacity:0.8"></div><div style="left:398px;top:95px;width:1px;height:501px;background:#303030;opacity:0.8"></div><div style="left:405px;top:95px;width:1px;height:501px;background:#333333;opacity:0.8"></div><div style="left:412px;top:95px;width:1px;height:501px;background:#2c2c2c;opacity:0.8"></div><div style="left:420px;top:95px;width:1px;height:501px;background:#333333;opacity:0.8"></div><div style="left:427px;top:95px;width:1px;height:501px;background:#303030;opacity:0.8"></div><div style="left:434px;top:95px;width:1px;height:501px;background:#333333;opacity:0.8"></div><div style="left:441px;top:95px;width:1px;height:501px;background:#2c2c2c;opacity:0.8"></div><div style="left:448px;top:95px;width:1px;height:501px;background:#333333;opacity:0.8"></div><div style="left:455px;top:95px;width:1px;height:501px;background:#303030;opacity:0.8"></div><div style="left:462px;top:95px;width:1px;height:501px;background:#333333;opacity:0.8"></div><div style="left:470px;top:95px;width:1px;height:501px;background:#2c2c2c;opacity:0.8"></div><div style="left:477px;top:95px;width:1px;height:501px;background:#333333;opacity:0.8"></div><div style="left:484px;top:95px;width:1px;height:501px;background:#303030;opacity:0.8"></div><div style="left:491px;top:95px;width:1px;height:501px;background:#333333;opacity:0.8"></div><div style="left:498px;top:95px;width:1px;height:501px;background:#2c2c2c;opacity:0.8"></div><div style="left:505px;top:95px;width:1px;height:501px;background:#333333;opacity:0.8"></div><div style="left:512px;top:95px;width:1px;height:501px;background:#303030;opacity:0.8"></div><div style="left:520px;top:95px;width:1px;height:501px;background:#333333;opacity:0.8"></div><div style="left:527px;top:95px;width:1px;height:501px;background:#2c2c2c;opacity:0.8"></div><div style="left:534px;top:95px;width:1px;height:501px;background:#333333;opacity:0.8"></div><div style="left:541px;top:95px;width:1px;height:501px;background:#303030;opacity:0.8"></div><div style="left:548px;top:95px;width:1px;height:501px;background:#333333;opacity:0.8"></div><div style="left:555px;top:95px;width:1px;height:501px;background:#2c2c2c;opacity:0.8"></div><div style="left:563px;top:95px;width:1px;height:501px;background:#333333;opacity:0.8"></div><div style="left:570px;top:95px;width:1px;height:501px;background:#303030;opacity:0.8"></div><div style="left:577px;top:95px;width:1px;height:501px;background:#333333;opacity:0.8"></div><div style="left:584px;top:95px;width:1px;height:501px;background:#2c2c2c;opacity:0.8"></div><div style="left:591px;top:95px;width:1px;height:501px;background:#333333;opacity:0.8"></div><div style="left:598px;top:95px;width:1px;height:501px;background:#303030;opacity:0.8"></div><div style="left:605px;top:95px;width:1px;height:501px;background:#333333;opacity:0.8"></div><div style="left:613px;top:95px;width:1px;height:501px;background:#2c2c2c;opacity:0.8"></div><div style="left:620px;top:95px;width:1px;height:501px;background:#333333;opacity:0.8"></div><div style="left:627px;top:95px;width:1px;height:501px;background:#303030;opacity:0.8"></div><div style="left:634px;top:95px;width:1px;height:501px;background:#333333;opacity:0.8"></div><div style="left:641px;top:95px;width:1px;height:501px;background:#2c2c2c;opacity:0.8"></div><div style="left:648px;top:95px;width:1px;height:501px;background:#333333;opacity:0.8"></div><div style="left:656px;top:95px;width:1px;height:501px;background:#303030;opacity:0.8"></div><div style="left:663px;top:95px;width:1px;height:501px;background:#333333;opacity:0.8"></div><div style="left:670px;top:95px;width:1px;height:501px;background:#2c2c2c;opacity:0.8"></div><div style="left:677px;top:95px;width:1px;height:501px;background:#333333;opacity:0.8"></div><div style="left:684px;top:95px;width:1px;height:501px;background:#303030;opacity:0.8"></div><div style="left:691px;top:95px;width:1px;height:501px;background:#333333;opacity:0.8"></div><div style="left:698px;top:95px;width:1px;height:501px;background:#2c2c2c;opacity:0.8"></div>
<div style="left:0px;top:152px;width:705px;height:2px;background:#262626;"></div>
<div style="left:0px;top:210px;width:705px;height:2px;background:#262626;"></div>
<div style="left:0px;top:231px;width:705px;height:2px;background:#262626;"></div>
<div style="left:0px;top:289px;width:705px;height:2px;background:#262626;"></div>
<div style="left:0px;top:310px;width:705px;height:2px;background:#262626;"></div>
<div style="left:0px;top:350px;width:705px;height:2px;background:#262626;"></div>
<div style="left:0px;top:408px;width:705px;height:2px;background:#262626;"></div>
<div style="left:0px;top:429px;width:705px;height:2px;background:#262626;"></div>
<div style="left:0px;top:487px;width:705px;height:2px;background:#262626;"></div>
<div style="left:0px;top:508px;width:705px;height:2px;background:#262626;"></div>
<div style="left:0px;top:529px;width:705px;height:2px;background:#262626;"></div>
<div style="left:0px;top:550px;width:705px;height:2px;background:#262626;"></div>
<div style="left:0px;top:575px;width:705px;height:2px;background:#262626;"></div>
<div style="left:0px;top:96px;width:354px;height:56px;background:#92a6fd;"></div>
<div style="left:0px;top:113px;width:354px;height:1px;background:#4a5596;"></div>
<div style="left:12px;top:114px;width:1px;height:38px;background:#8391e6"></div><div style="left:26px;top:114px;width:1px;height:38px;background:#8391e6"></div><div style="left:41px;top:114px;width:1px;height:38px;background:#8391e6"></div><div style="left:55px;top:114px;width:1px;height:38px;background:#8391e6"></div><div style="left:69px;top:114px;width:1px;height:38px;background:#8391e6"></div><div style="left:84px;top:114px;width:1px;height:38px;background:#8391e6"></div><div style="left:98px;top:114px;width:1px;height:38px;background:#8391e6"></div><div style="left:112px;top:114px;width:1px;height:38px;background:#8391e6"></div><div style="left:126px;top:114px;width:1px;height:38px;background:#8391e6"></div><div style="left:141px;top:114px;width:1px;height:38px;background:#8391e6"></div><div style="left:155px;top:114px;width:1px;height:38px;background:#8391e6"></div><div style="left:169px;top:114px;width:1px;height:38px;background:#8391e6"></div><div style="left:184px;top:114px;width:1px;height:38px;background:#8391e6"></div><div style="left:198px;top:114px;width:1px;height:38px;background:#8391e6"></div><div style="left:212px;top:114px;width:1px;height:38px;background:#8391e6"></div><div style="left:226px;top:114px;width:1px;height:38px;background:#8391e6"></div><div style="left:241px;top:114px;width:1px;height:38px;background:#8391e6"></div><div style="left:255px;top:114px;width:1px;height:38px;background:#8391e6"></div><div style="left:269px;top:114px;width:1px;height:38px;background:#8391e6"></div><div style="left:284px;top:114px;width:1px;height:38px;background:#8391e6"></div><div style="left:298px;top:114px;width:1px;height:38px;background:#8391e6"></div><div style="left:312px;top:114px;width:1px;height:38px;background:#8391e6"></div><div style="left:327px;top:114px;width:1px;height:38px;background:#8391e6"></div><div style="left:341px;top:114px;width:1px;height:38px;background:#8391e6"></div>
<div style="left:2.0px;top:132px;width:1.6px;height:1.8px;background:#1c1f33"></div><div style="left:5.6px;top:132px;width:1.6px;height:1.8px;background:#1c1f33"></div><div style="left:9.2px;top:132px;width:1.6px;height:1.8px;background:#1c1f33"></div><div style="left:12.7px;top:132px;width:1.6px;height:1.8px;background:#1c1f33"></div><div style="left:16.3px;top:132px;width:1.6px;height:1.8px;background:#1c1f33"></div><div style="left:19.9px;top:132px;width:1.6px;height:1.8px;background:#1c1f33"></div><div style="left:23.4px;top:132px;width:1.6px;height:1.8px;background:#1c1f33"></div><div style="left:27.0px;top:132px;width:1.6px;height:1.8px;background:#1c1f33"></div><div style="left:30.6px;top:132px;width:1.6px;height:1.8px;background:#1c1f33"></div><div style="left:34.2px;top:132px;width:1.6px;height:1.8px;background:#1c1f33"></div><div style="left:37.8px;top:132px;width:1.6px;height:1.8px;background:#1c1f33"></div><div style="left:41.3px;top:132px;width:1.6px;height:1.8px;background:#1c1f33"></div><div style="left:44.9px;top:132px;width:1.6px;height:1.8px;background:#1c1f33"></div><div style="left:48.5px;top:132px;width:1.6px;height:1.8px;background:#1c1f33"></div><div style="left:52.1px;top:132px;width:1.6px;height:1.8px;background:#1c1f33"></div><div style="left:55.6px;top:132px;width:1.6px;height:1.8px;background:#1c1f33"></div><div style="left:59.2px;top:132px;width:1.6px;height:1.8px;background:#1c1f33"></div><div style="left:62.8px;top:132px;width:1.6px;height:1.8px;background:#1c1f33"></div><div style="left:66.4px;top:132px;width:1.6px;height:1.8px;background:#1c1f33"></div><div style="left:69.9px;top:132px;width:1.6px;height:1.8px;background:#1c1f33"></div><div style="left:73.5px;top:132px;width:1.6px;height:1.8px;background:#1c1f33"></div><div style="left:77.1px;top:132px;width:1.6px;height:1.8px;background:#1c1f33"></div><div style="left:80.7px;top:132px;width:1.6px;height:1.8px;background:#1c1f33"></div><div style="left:84.2px;top:132px;width:1.6px;height:1.8px;background:#1c1f33"></div><div style="left:87.8px;top:132px;width:1.6px;height:1.8px;background:#1c1f33"></div><div style="left:91.4px;top:132px;width:1.6px;height:1.8px;background:#1c1f33"></div><div style="left:95.0px;top:132px;width:1.6px;height:1.8px;background:#1c1f33"></div><div style="left:98.5px;top:132px;width:1.6px;height:1.8px;background:#1c1f33"></div><div style="left:102.1px;top:132px;width:1.6px;height:1.8px;background:#1c1f33"></div><div style="left:105.7px;top:132px;width:1.6px;height:1.8px;background:#1c1f33"></div><div style="left:109.3px;top:132px;width:1.6px;height:1.8px;background:#1c1f33"></div><div style="left:112.8px;top:132px;width:1.6px;height:1.8px;background:#1c1f33"></div><div style="left:116.4px;top:132px;width:1.6px;height:1.8px;background:#1c1f33"></div><div style="left:120.0px;top:132px;width:1.6px;height:1.8px;background:#1c1f33"></div><div style="left:123.6px;top:132px;width:1.6px;height:1.8px;background:#1c1f33"></div><div style="left:127.1px;top:132px;width:1.6px;height:1.8px;background:#1c1f33"></div><div style="left:130.7px;top:132px;width:1.6px;height:1.8px;background:#1c1f33"></div><div style="left:134.3px;top:132px;width:1.6px;height:1.8px;background:#1c1f33"></div><div style="left:137.9px;top:132px;width:1.6px;height:1.8px;background:#1c1f33"></div><div style="left:141.4px;top:132px;width:1.6px;height:1.8px;background:#1c1f33"></div><div style="left:145.0px;top:132px;width:1.6px;height:1.8px;background:#1c1f33"></div><div style="left:148.6px;top:132px;width:1.6px;height:1.8px;background:#1c1f33"></div><div style="left:152.2px;top:132px;width:1.6px;height:1.8px;background:#1c1f33"></div><div style="left:155.7px;top:132px;width:1.6px;height:1.8px;background:#1c1f33"></div><div style="left:159.3px;top:132px;width:1.6px;height:1.8px;background:#1c1f33"></div><div style="left:162.9px;top:132px;width:1.6px;height:1.8px;background:#1c1f33"></div><div style="left:166.4px;top:132px;width:1.6px;height:1.8px;background:#1c1f33"></div><div style="left:170.0px;top:132px;width:1.6px;height:1.8px;background:#1c1f33"></div><div style="left:173.6px;top:132px;width:1.6px;height:1.8px;background:#1c1f33"></div><div style="left:177.2px;top:132px;width:1.6px;height:1.8px;background:#1c1f33"></div><div style="left:180.7px;top:132px;width:1.6px;height:1.8px;background:#1c1f33"></div><div style="left:184.3px;top:132px;width:1.6px;height:1.8px;background:#1c1f33"></div><div style="left:187.9px;top:132px;width:1.6px;height:1.8px;background:#1c1f33"></div><div style="left:191.5px;top:132px;width:1.6px;height:1.8px;background:#1c1f33"></div><div style="left:195.0px;top:132px;width:1.6px;height:1.8px;background:#1c1f33"></div><div style="left:198.6px;top:132px;width:1.6px;height:1.8px;background:#1c1f33"></div><div style="left:202.2px;top:132px;width:1.6px;height:1.8px;background:#1c1f33"></div><div style="left:205.8px;top:132px;width:1.6px;height:1.8px;background:#1c1f33"></div><div style="left:209.3px;top:132px;width:1.6px;height:1.8px;background:#1c1f33"></div><div style="left:212.9px;top:132px;width:1.6px;height:1.8px;background:#1c1f33"></div><div style="left:216.5px;top:132px;width:1.6px;height:1.8px;background:#1c1f33"></div><div style="left:220.1px;top:132px;width:1.6px;height:1.8px;background:#1c1f33"></div><div style="left:223.6px;top:132px;width:1.6px;height:1.8px;background:#1c1f33"></div><div style="left:227.2px;top:132px;width:1.6px;height:1.8px;background:#1c1f33"></div><div style="left:230.8px;top:132px;width:1.6px;height:1.8px;background:#1c1f33"></div><div style="left:234.4px;top:132px;width:1.6px;height:1.8px;background:#1c1f33"></div><div style="left:237.9px;top:132px;width:1.6px;height:1.8px;background:#1c1f33"></div><div style="left:241.5px;top:132px;width:1.6px;height:1.8px;background:#1c1f33"></div><div style="left:245.1px;top:132px;width:1.6px;height:1.8px;background:#1c1f33"></div><div style="left:248.7px;top:132px;width:1.6px;height:1.8px;background:#1c1f33"></div><div style="left:252.2px;top:132px;width:1.6px;height:1.8px;background:#1c1f33"></div><div style="left:255.8px;top:132px;width:1.6px;height:1.8px;background:#1c1f33"></div><div style="left:259.4px;top:132px;width:1.6px;height:1.8px;background:#1c1f33"></div><div style="left:263.0px;top:132px;width:1.6px;height:1.8px;background:#1c1f33"></div><div style="left:266.5px;top:132px;width:1.6px;height:1.8px;background:#1c1f33"></div><div style="left:270.1px;top:132px;width:1.6px;height:1.8px;background:#1c1f33"></div><div style="left:273.7px;top:132px;width:1.6px;height:1.8px;background:#1c1f33"></div><div style="left:277.3px;top:132px;width:1.6px;height:1.8px;background:#1c1f33"></div><div style="left:280.8px;top:132px;width:1.6px;height:1.8px;background:#1c1f33"></div><div style="left:284.4px;top:132px;width:1.6px;height:1.8px;background:#1c1f33"></div><div style="left:288.0px;top:132px;width:1.6px;height:1.8px;background:#1c1f33"></div><div style="left:291.6px;top:132px;width:1.6px;height:1.8px;background:#1c1f33"></div><div style="left:295.1px;top:132px;width:1.6px;height:1.8px;background:#1c1f33"></div><div style="left:298.7px;top:132px;width:1.6px;height:1.8px;background:#1c1f33"></div><div style="left:302.3px;top:132px;width:1.6px;height:1.8px;background:#1c1f33"></div><div style="left:305.9px;top:132px;width:1.6px;height:1.8px;background:#1c1f33"></div><div style="left:309.4px;top:132px;width:1.6px;height:1.8px;background:#1c1f33"></div><div style="left:313.0px;top:132px;width:1.6px;height:1.8px;background:#1c1f33"></div><div style="left:316.6px;top:132px;width:1.6px;height:1.8px;background:#1c1f33"></div><div style="left:320.2px;top:132px;width:1.6px;height:1.8px;background:#1c1f33"></div><div style="left:323.7px;top:132px;width:1.6px;height:1.8px;background:#1c1f33"></div><div style="left:327.3px;top:132px;width:1.6px;height:1.8px;background:#1c1f33"></div><div style="left:330.9px;top:132px;width:1.6px;height:1.8px;background:#1c1f33"></div><div style="left:334.5px;top:132px;width:1.6px;height:1.8px;background:#1c1f33"></div><div style="left:338.0px;top:132px;width:1.6px;height:1.8px;background:#1c1f33"></div><div style="left:341.6px;top:132px;width:1.6px;height:1.8px;background:#1c1f33"></div><div style="left:345.2px;top:132px;width:1.6px;height:1.8px;background:#1c1f33"></div><div style="left:348.8px;top:132px;width:1.6px;height:1.8px;background:#1c1f33"></div>
<div style="left:17.5px;top:128px;width:1.8px;height:2px;background:#1c1f33"></div><div style="left:19.5px;top:128px;width:1.8px;height:2px;background:#1c1f33"></div><div style="left:46.1px;top:128px;width:1.8px;height:2px;background:#1c1f33"></div><div style="left:48.1px;top:128px;width:1.8px;height:2px;background:#1c1f33"></div><div style="left:74.7px;top:128px;width:1.8px;height:2px;background:#1c1f33"></div><div style="left:76.7px;top:128px;width:1.8px;height:2px;background:#1c1f33"></div><div style="left:103.3px;top:128px;width:1.8px;height:2px;background:#1c1f33"></div><div style="left:105.3px;top:128px;width:1.8px;height:2px;background:#1c1f33"></div><div style="left:131.9px;top:128px;width:1.8px;height:2px;background:#1c1f33"></div><div style="left:133.9px;top:128px;width:1.8px;height:2px;background:#1c1f33"></div><div style="left:160.5px;top:128px;width:1.8px;height:2px;background:#1c1f33"></div><div style="left:162.5px;top:128px;width:1.8px;height:2px;background:#1c1f33"></div><div style="left:189.1px;top:128px;width:1.8px;height:2px;background:#1c1f33"></div><div style="left:191.1px;top:128px;width:1.8px;height:2px;background:#1c1f33"></div><div style="left:217.7px;top:128px;width:1.8px;height:2px;background:#1c1f33"></div><div style="left:219.7px;top:128px;width:1.8px;height:2px;background:#1c1f33"></div><div style="left:246.3px;top:128px;width:1.8px;height:2px;background:#1c1f33"></div><div style="left:248.3px;top:128px;width:1.8px;height:2px;background:#1c1f33"></div><div style="left:274.9px;top:128px;width:1.8px;height:2px;background:#1c1f33"></div><div style="left:276.9px;top:128px;width:1.8px;height:2px;background:#1c1f33"></div><div style="left:303.5px;top:128px;width:1.8px;height:2px;background:#1c1f33"></div><div style="left:305.5px;top:128px;width:1.8px;height:2px;background:#1c1f33"></div><div style="left:332.1px;top:128px;width:1.8px;height:2px;background:#1c1f33"></div><div style="left:334.1px;top:128px;width:1.8px;height:2px;background:#1c1f33"></div><div style="left:5.4px;top:141px;width:1.8px;height:2px;background:#1c1f33"></div><div style="left:15.0px;top:141px;width:1.8px;height:2px;background:#1c1f33"></div><div style="left:22.0px;top:141px;width:1.8px;height:2px;background:#1c1f33"></div><div style="left:26.0px;top:141px;width:1.8px;height:2px;background:#1c1f33"></div><div style="left:29.0px;top:141px;width:1.8px;height:2px;background:#1c1f33"></div><div style="left:34.0px;top:141px;width:1.8px;height:2px;background:#1c1f33"></div><div style="left:43.6px;top:141px;width:1.8px;height:2px;background:#1c1f33"></div><div style="left:50.6px;top:141px;width:1.8px;height:2px;background:#1c1f33"></div><div style="left:54.6px;top:141px;width:1.8px;height:2px;background:#1c1f33"></div><div style="left:57.6px;top:141px;width:1.8px;height:2px;background:#1c1f33"></div><div style="left:62.6px;top:141px;width:1.8px;height:2px;background:#1c1f33"></div><div style="left:72.2px;top:141px;width:1.8px;height:2px;background:#1c1f33"></div><div style="left:79.2px;top:141px;width:1.8px;height:2px;background:#1c1f33"></div><div style="left:83.2px;top:141px;width:1.8px;height:2px;background:#1c1f33"></div><div style="left:86.2px;top:141px;width:1.8px;height:2px;background:#1c1f33"></div><div style="left:91.2px;top:141px;width:1.8px;height:2px;background:#1c1f33"></div><div style="left:100.8px;top:141px;width:1.8px;height:2px;background:#1c1f33"></div><div style="left:107.8px;top:141px;width:1.8px;height:2px;background:#1c1f33"></div><div style="left:111.8px;top:141px;width:1.8px;height:2px;background:#1c1f33"></div><div style="left:114.8px;top:141px;width:1.8px;height:2px;background:#1c1f33"></div><div style="left:119.8px;top:141px;width:1.8px;height:2px;background:#1c1f33"></div><div style="left:129.4px;top:141px;width:1.8px;height:2px;background:#1c1f33"></div><div style="left:136.4px;top:141px;width:1.8px;height:2px;background:#1c1f33"></div><div style="left:140.4px;top:141px;width:1.8px;height:2px;background:#1c1f33"></div><div style="left:143.4px;top:141px;width:1.8px;height:2px;background:#1c1f33"></div><div style="left:148.4px;top:141px;width:1.8px;height:2px;background:#1c1f33"></div><div style="left:158.0px;top:141px;width:1.8px;height:2px;background:#1c1f33"></div><div style="left:165.0px;top:141px;width:1.8px;height:2px;background:#1c1f33"></div><div style="left:169.0px;top:141px;width:1.8px;height:2px;background:#1c1f33"></div><div style="left:172.0px;top:141px;width:1.8px;height:2px;background:#1c1f33"></div><div style="left:177.0px;top:141px;width:1.8px;height:2px;background:#1c1f33"></div><div style="left:186.6px;top:141px;width:1.8px;height:2px;background:#1c1f33"></div><div style="left:193.6px;top:141px;width:1.8px;height:2px;background:#1c1f33"></div><div style="left:197.6px;top:141px;width:1.8px;height:2px;background:#1c1f33"></div><div style="left:200.6px;top:141px;width:1.8px;height:2px;background:#1c1f33"></div><div style="left:205.6px;top:141px;width:1.8px;height:2px;background:#1c1f33"></div><div style="left:215.2px;top:141px;width:1.8px;height:2px;background:#1c1f33"></div><div style="left:222.2px;top:141px;width:1.8px;height:2px;background:#1c1f33"></div><div style="left:226.2px;top:141px;width:1.8px;height:2px;background:#1c1f33"></div><div style="left:229.2px;top:141px;width:1.8px;height:2px;background:#1c1f33"></div><div style="left:234.2px;top:141px;width:1.8px;height:2px;background:#1c1f33"></div><div style="left:243.8px;top:141px;width:1.8px;height:2px;background:#1c1f33"></div><div style="left:250.8px;top:141px;width:1.8px;height:2px;background:#1c1f33"></div><div style="left:254.8px;top:141px;width:1.8px;height:2px;background:#1c1f33"></div><div style="left:257.8px;top:141px;width:1.8px;height:2px;background:#1c1f33"></div><div style="left:262.8px;top:141px;width:1.8px;height:2px;background:#1c1f33"></div><div style="left:272.4px;top:141px;width:1.8px;height:2px;background:#1c1f33"></div><div style="left:279.4px;top:141px;width:1.8px;height:2px;background:#1c1f33"></div><div style="left:283.4px;top:141px;width:1.8px;height:2px;background:#1c1f33"></div><div style="left:286.4px;top:141px;width:1.8px;height:2px;background:#1c1f33"></div><div style="left:291.4px;top:141px;width:1.8px;height:2px;background:#1c1f33"></div><div style="left:301.0px;top:141px;width:1.8px;height:2px;background:#1c1f33"></div><div style="left:308.0px;top:141px;width:1.8px;height:2px;background:#1c1f33"></div><div style="left:312.0px;top:141px;width:1.8px;height:2px;background:#1c1f33"></div><div style="left:315.0px;top:141px;width:1.8px;height:2px;background:#1c1f33"></div><div style="left:320.0px;top:141px;width:1.8px;height:2px;background:#1c1f33"></div><div style="left:329.6px;top:141px;width:1.8px;height:2px;background:#1c1f33"></div><div style="left:336.6px;top:141px;width:1.8px;height:2px;background:#1c1f33"></div><div style="left:340.6px;top:141px;width:1.8px;height:2px;background:#1c1f33"></div><div style="left:343.6px;top:141px;width:1.8px;height:2px;background:#1c1f33"></div><div style="left:348.6px;top:141px;width:1.8px;height:2px;background:#1c1f33"></div><div style="left:3.4px;top:145px;width:1.8px;height:2px;background:#1c1f33"></div><div style="left:4.9px;top:145px;width:1.8px;height:2px;background:#1c1f33"></div><div style="left:12.0px;top:145px;width:1.8px;height:2px;background:#1c1f33"></div><div style="left:24.0px;top:145px;width:1.8px;height:2px;background:#1c1f33"></div><div style="left:32.0px;top:145px;width:1.8px;height:2px;background:#1c1f33"></div><div style="left:33.5px;top:145px;width:1.8px;height:2px;background:#1c1f33"></div><div style="left:40.6px;top:145px;width:1.8px;height:2px;background:#1c1f33"></div><div style="left:52.6px;top:145px;width:1.8px;height:2px;background:#1c1f33"></div><div style="left:60.6px;top:145px;width:1.8px;height:2px;background:#1c1f33"></div><div style="left:62.1px;top:145px;width:1.8px;height:2px;background:#1c1f33"></div><div style="left:69.2px;top:145px;width:1.8px;height:2px;background:#1c1f33"></div><div style="left:81.2px;top:145px;width:1.8px;height:2px;background:#1c1f33"></div><div style="left:89.2px;top:145px;width:1.8px;height:2px;background:#1c1f33"></div><div style="left:90.7px;top:145px;width:1.8px;height:2px;background:#1c1f33"></div><div style="left:97.8px;top:145px;width:1.8px;height:2px;background:#1c1f33"></div><div style="left:109.8px;top:145px;width:1.8px;height:2px;background:#1c1f33"></div><div style="left:117.8px;top:145px;width:1.8px;height:2px;background:#1c1f33"></div><div style="left:119.3px;top:145px;width:1.8px;height:2px;background:#1c1f33"></div><div style="left:126.4px;top:145px;width:1.8px;height:2px;background:#1c1f33"></div><div style="left:138.4px;top:145px;width:1.8px;height:2px;background:#1c1f33"></div><div style="left:146.4px;top:145px;width:1.8px;height:2px;background:#1c1f33"></div><div style="left:147.9px;top:145px;width:1.8px;height:2px;background:#1c1f33"></div><div style="left:155.0px;top:145px;width:1.8px;height:2px;background:#1c1f33"></div><div style="left:167.0px;top:145px;width:1.8px;height:2px;background:#1c1f33"></div><div style="left:175.0px;top:145px;width:1.8px;height:2px;background:#1c1f33"></div><div style="left:176.5px;top:145px;width:1.8px;height:2px;background:#1c1f33"></div><div style="left:183.6px;top:145px;width:1.8px;height:2px;background:#1c1f33"></div><div style="left:195.6px;top:145px;width:1.8px;height:2px;background:#1c1f33"></div><div style="left:203.6px;top:145px;width:1.8px;height:2px;background:#1c1f33"></div><div style="left:205.1px;top:145px;width:1.8px;height:2px;background:#1c1f33"></div><div style="left:212.2px;top:145px;width:1.8px;height:2px;background:#1c1f33"></div><div style="left:224.2px;top:145px;width:1.8px;height:2px;background:#1c1f33"></div><div style="left:232.2px;top:145px;width:1.8px;height:2px;background:#1c1f33"></div><div style="left:233.7px;top:145px;width:1.8px;height:2px;background:#1c1f33"></div><div style="left:240.8px;top:145px;width:1.8px;height:2px;background:#1c1f33"></div><div style="left:252.8px;top:145px;width:1.8px;height:2px;background:#1c1f33"></div><div style="left:260.8px;top:145px;width:1.8px;height:2px;background:#1c1f33"></div><div style="left:262.3px;top:145px;width:1.8px;height:2px;background:#1c1f33"></div><div style="left:269.4px;top:145px;width:1.8px;height:2px;background:#1c1f33"></div><div style="left:281.4px;top:145px;width:1.8px;height:2px;background:#1c1f33"></div><div style="left:289.4px;top:145px;width:1.8px;height:2px;background:#1c1f33"></div><div style="left:290.9px;top:145px;width:1.8px;height:2px;background:#1c1f33"></div><div style="left:298.0px;top:145px;width:1.8px;height:2px;background:#1c1f33"></div><div style="left:310.0px;top:145px;width:1.8px;height:2px;background:#1c1f33"></div><div style="left:318.0px;top:145px;width:1.8px;height:2px;background:#1c1f33"></div><div style="left:319.5px;top:145px;width:1.8px;height:2px;background:#1c1f33"></div><div style="left:326.6px;top:145px;width:1.8px;height:2px;background:#1c1f33"></div><div style="left:338.6px;top:145px;width:1.8px;height:2px;background:#1c1f33"></div><div style="left:346.6px;top:145px;width:1.8px;height:2px;background:#1c1f33"></div><div style="left:348.1px;top:145px;width:1.8px;height:2px;background:#1c1f33"></div>
<div style="left:126px;top:96px;width:1px;height:56px;background:#3d4788;"></div>
<div style="left:584px;top:96px;width:121px;height:56px;background:#92a6fd;"></div>
<div style="left:584px;top:113px;width:121px;height:1px;background:#4a5596;"></div>
<div style="left:598px;top:114px;width:1px;height:38px;background:#8391e6"></div><div style="left:613px;top:114px;width:1px;height:38px;background:#8391e6"></div><div style="left:627px;top:114px;width:1px;height:38px;background:#8391e6"></div><div style="left:641px;top:114px;width:1px;height:38px;background:#8391e6"></div><div style="left:656px;top:114px;width:1px;height:38px;background:#8391e6"></div><div style="left:670px;top:114px;width:1px;height:38px;background:#8391e6"></div><div style="left:684px;top:114px;width:1px;height:38px;background:#8391e6"></div><div style="left:698px;top:114px;width:1px;height:38px;background:#8391e6"></div>
<div style="left:586.0px;top:132px;width:1.6px;height:1.8px;background:#1c1f33"></div><div style="left:589.6px;top:132px;width:1.6px;height:1.8px;background:#1c1f33"></div><div style="left:593.2px;top:132px;width:1.6px;height:1.8px;background:#1c1f33"></div><div style="left:596.7px;top:132px;width:1.6px;height:1.8px;background:#1c1f33"></div><div style="left:600.3px;top:132px;width:1.6px;height:1.8px;background:#1c1f33"></div><div style="left:603.9px;top:132px;width:1.6px;height:1.8px;background:#1c1f33"></div><div style="left:607.5px;top:132px;width:1.6px;height:1.8px;background:#1c1f33"></div><div style="left:611.0px;top:132px;width:1.6px;height:1.8px;background:#1c1f33"></div><div style="left:614.6px;top:132px;width:1.6px;height:1.8px;background:#1c1f33"></div><div style="left:618.2px;top:132px;width:1.6px;height:1.8px;background:#1c1f33"></div><div style="left:621.8px;top:132px;width:1.6px;height:1.8px;background:#1c1f33"></div><div style="left:625.3px;top:132px;width:1.6px;height:1.8px;background:#1c1f33"></div><div style="left:628.9px;top:132px;width:1.6px;height:1.8px;background:#1c1f33"></div><div style="left:632.5px;top:132px;width:1.6px;height:1.8px;background:#1c1f33"></div><div style="left:636.1px;top:132px;width:1.6px;height:1.8px;background:#1c1f33"></div><div style="left:639.6px;top:132px;width:1.6px;height:1.8px;background:#1c1f33"></div><div style="left:643.2px;top:132px;width:1.6px;height:1.8px;background:#1c1f33"></div><div style="left:646.8px;top:132px;width:1.6px;height:1.8px;background:#1c1f33"></div><div style="left:650.4px;top:132px;width:1.6px;height:1.8px;background:#1c1f33"></div><div style="left:653.9px;top:132px;width:1.6px;height:1.8px;background:#1c1f33"></div><div style="left:657.5px;top:132px;width:1.6px;height:1.8px;background:#1c1f33"></div><div style="left:661.1px;top:132px;width:1.6px;height:1.8px;background:#1c1f33"></div><div style="left:664.7px;top:132px;width:1.6px;height:1.8px;background:#1c1f33"></div><div style="left:668.2px;top:132px;width:1.6px;height:1.8px;background:#1c1f33"></div><div style="left:671.8px;top:132px;width:1.6px;height:1.8px;background:#1c1f33"></div><div style="left:675.4px;top:132px;width:1.6px;height:1.8px;background:#1c1f33"></div><div style="left:679.0px;top:132px;width:1.6px;height:1.8px;background:#1c1f33"></div><div style="left:682.5px;top:132px;width:1.6px;height:1.8px;background:#1c1f33"></div><div style="left:686.1px;top:132px;width:1.6px;height:1.8px;background:#1c1f33"></div><div style="left:689.7px;top:132px;width:1.6px;height:1.8px;background:#1c1f33"></div><div style="left:693.3px;top:132px;width:1.6px;height:1.8px;background:#1c1f33"></div><div style="left:696.8px;top:132px;width:1.6px;height:1.8px;background:#1c1f33"></div><div style="left:700.4px;top:132px;width:1.6px;height:1.8px;background:#1c1f33"></div>
<div style="left:589.5px;top:128px;width:1.8px;height:2px;background:#1c1f33"></div><div style="left:591.5px;top:128px;width:1.8px;height:2px;background:#1c1f33"></div><div style="left:618.1px;top:128px;width:1.8px;height:2px;background:#1c1f33"></div><div style="left:620.1px;top:128px;width:1.8px;height:2px;background:#1c1f33"></div><div style="left:646.7px;top:128px;width:1.8px;height:2px;background:#1c1f33"></div><div style="left:648.7px;top:128px;width:1.8px;height:2px;background:#1c1f33"></div><div style="left:675.3px;top:128px;width:1.8px;height:2px;background:#1c1f33"></div><div style="left:677.3px;top:128px;width:1.8px;height:2px;background:#1c1f33"></div><div style="left:587.0px;top:141px;width:1.8px;height:2px;background:#1c1f33"></div><div style="left:594.0px;top:141px;width:1.8px;height:2px;background:#1c1f33"></div><div style="left:598.0px;top:141px;width:1.8px;height:2px;background:#1c1f33"></div><div style="left:601.0px;top:141px;width:1.8px;height:2px;background:#1c1f33"></div><div style="left:606.0px;top:141px;width:1.8px;height:2px;background:#1c1f33"></div><div style="left:615.6px;top:141px;width:1.8px;height:2px;background:#1c1f33"></div><div style="left:622.6px;top:141px;width:1.8px;height:2px;background:#1c1f33"></div><div style="left:626.6px;top:141px;width:1.8px;height:2px;background:#1c1f33"></div><div style="left:629.6px;top:141px;width:1.8px;height:2px;background:#1c1f33"></div><div style="left:634.6px;top:141px;width:1.8px;height:2px;background:#1c1f33"></div><div style="left:644.2px;top:141px;width:1.8px;height:2px;background:#1c1f33"></div><div style="left:651.2px;top:141px;width:1.8px;height:2px;background:#1c1f33"></div><div style="left:655.2px;top:141px;width:1.8px;height:2px;background:#1c1f33"></div><div style="left:658.2px;top:141px;width:1.8px;height:2px;background:#1c1f33"></div><div style="left:663.2px;top:141px;width:1.8px;height:2px;background:#1c1f33"></div><div style="left:672.8px;top:141px;width:1.8px;height:2px;background:#1c1f33"></div><div style="left:679.8px;top:141px;width:1.8px;height:2px;background:#1c1f33"></div><div style="left:683.8px;top:141px;width:1.8px;height:2px;background:#1c1f33"></div><div style="left:686.8px;top:141px;width:1.8px;height:2px;background:#1c1f33"></div><div style="left:691.8px;top:141px;width:1.8px;height:2px;background:#1c1f33"></div><div style="left:701.4px;top:141px;width:1.8px;height:2px;background:#1c1f33"></div><div style="left:596.0px;top:145px;width:1.8px;height:2px;background:#1c1f33"></div><div style="left:604.0px;top:145px;width:1.8px;height:2px;background:#1c1f33"></div><div style="left:605.5px;top:145px;width:1.8px;height:2px;background:#1c1f33"></div><div style="left:612.6px;top:145px;width:1.8px;height:2px;background:#1c1f33"></div><div style="left:624.6px;top:145px;width:1.8px;height:2px;background:#1c1f33"></div><div style="left:632.6px;top:145px;width:1.8px;height:2px;background:#1c1f33"></div><div style="left:634.1px;top:145px;width:1.8px;height:2px;background:#1c1f33"></div><div style="left:641.2px;top:145px;width:1.8px;height:2px;background:#1c1f33"></div><div style="left:653.2px;top:145px;width:1.8px;height:2px;background:#1c1f33"></div><div style="left:661.2px;top:145px;width:1.8px;height:2px;background:#1c1f33"></div><div style="left:662.7px;top:145px;width:1.8px;height:2px;background:#1c1f33"></div><div style="left:669.8px;top:145px;width:1.8px;height:2px;background:#1c1f33"></div><div style="left:681.8px;top:145px;width:1.8px;height:2px;background:#1c1f33"></div><div style="left:689.8px;top:145px;width:1.8px;height:2px;background:#1c1f33"></div><div style="left:691.3px;top:145px;width:1.8px;height:2px;background:#1c1f33"></div><div style="left:698.4px;top:145px;width:1.8px;height:2px;background:#1c1f33"></div>
<div style="left:615px;top:126px;width:13px;height:2px;background:#1c1f33;"></div>
<div style="left:669px;top:126px;width:36px;height:2px;background:#1c1f33;"></div>
<div style="left:640px;top:120px;width:2px;height:2px;background:#1c1f33;"></div>
<div style="left:0px;top:154px;width:583px;height:56px;background:#92a6fd;"></div>
<div style="left:612px;top:154px;width:93px;height:56px;background:#92a6fd;"></div>
<div style="left:0px;top:171px;width:583px;height:1px;background:#4a5596;"></div>
<div style="left:612px;top:171px;width:93px;height:1px;background:#4a5596;"></div>
<div style="left:12px;top:172px;width:1px;height:38px;background:#8391e6"></div><div style="left:26px;top:172px;width:1px;height:38px;background:#8391e6"></div><div style="left:41px;top:172px;width:1px;height:38px;background:#8391e6"></div><div style="left:55px;top:172px;width:1px;height:38px;background:#8391e6"></div><div style="left:69px;top:172px;width:1px;height:38px;background:#8391e6"></div><div style="left:84px;top:172px;width:1px;height:38px;background:#8391e6"></div><div style="left:98px;top:172px;width:1px;height:38px;background:#8391e6"></div><div style="left:112px;top:172px;width:1px;height:38px;background:#8391e6"></div><div style="left:126px;top:172px;width:1px;height:38px;background:#8391e6"></div><div style="left:141px;top:172px;width:1px;height:38px;background:#8391e6"></div><div style="left:155px;top:172px;width:1px;height:38px;background:#8391e6"></div><div style="left:169px;top:172px;width:1px;height:38px;background:#8391e6"></div><div style="left:184px;top:172px;width:1px;height:38px;background:#8391e6"></div><div style="left:198px;top:172px;width:1px;height:38px;background:#8391e6"></div><div style="left:212px;top:172px;width:1px;height:38px;background:#8391e6"></div><div style="left:226px;top:172px;width:1px;height:38px;background:#8391e6"></div><div style="left:241px;top:172px;width:1px;height:38px;background:#8391e6"></div><div style="left:255px;top:172px;width:1px;height:38px;background:#8391e6"></div><div style="left:269px;top:172px;width:1px;height:38px;background:#8391e6"></div><div style="left:284px;top:172px;width:1px;height:38px;background:#8391e6"></div><div style="left:298px;top:172px;width:1px;height:38px;background:#8391e6"></div><div style="left:312px;top:172px;width:1px;height:38px;background:#8391e6"></div><div style="left:327px;top:172px;width:1px;height:38px;background:#8391e6"></div><div style="left:341px;top:172px;width:1px;height:38px;background:#8391e6"></div><div style="left:355px;top:172px;width:1px;height:38px;background:#8391e6"></div><div style="left:370px;top:172px;width:1px;height:38px;background:#8391e6"></div><div style="left:384px;top:172px;width:1px;height:38px;background:#8391e6"></div><div style="left:398px;top:172px;width:1px;height:38px;background:#8391e6"></div><div style="left:412px;top:172px;width:1px;height:38px;background:#8391e6"></div><div style="left:427px;top:172px;width:1px;height:38px;background:#8391e6"></div><div style="left:441px;top:172px;width:1px;height:38px;background:#8391e6"></div><div style="left:455px;top:172px;width:1px;height:38px;background:#8391e6"></div><div style="left:470px;top:172px;width:1px;height:38px;background:#8391e6"></div><div style="left:484px;top:172px;width:1px;height:38px;background:#8391e6"></div><div style="left:498px;top:172px;width:1px;height:38px;background:#8391e6"></div><div style="left:512px;top:172px;width:1px;height:38px;background:#8391e6"></div><div style="left:527px;top:172px;width:1px;height:38px;background:#8391e6"></div><div style="left:541px;top:172px;width:1px;height:38px;background:#8391e6"></div><div style="left:555px;top:172px;width:1px;height:38px;background:#8391e6"></div><div style="left:570px;top:172px;width:1px;height:38px;background:#8391e6"></div>
<div style="left:613px;top:172px;width:1px;height:38px;background:#8391e6"></div><div style="left:627px;top:172px;width:1px;height:38px;background:#8391e6"></div><div style="left:641px;top:172px;width:1px;height:38px;background:#8391e6"></div><div style="left:656px;top:172px;width:1px;height:38px;background:#8391e6"></div><div style="left:670px;top:172px;width:1px;height:38px;background:#8391e6"></div><div style="left:684px;top:172px;width:1px;height:38px;background:#8391e6"></div><div style="left:698px;top:172px;width:1px;height:38px;background:#8391e6"></div>
<svg style="left:0;top:0" width="960" height="300"><path d="M0.0 176.8 L1.0 177.2 L2.0 176.3 L3.0 176.1 L4.0 176.9 L5.0 177.9 L6.0 176.8 L7.0 177.8 L8.0 179.3 L9.0 180.1 L10.0 179.8 L11.0 180.1 L12.0 177.7 L13.0 176.6 L14.0 177.5 L15.0 178.0 L16.0 177.1 L17.0 177.1 L18.0 177.2 L19.0 177.8 L20.0 177.3 L21.0 177.4 L22.0 178.9 L23.0 180.1 L24.0 179.7 L25.0 179.9 L26.0 178.2 L27.0 175.9 L28.0 176.1 L29.0 177.6 L30.0 176.8 L31.0 175.9 L32.0 176.3 L33.0 177.2 L34.0 176.4 L35.0 176.5 L36.0 178.4 L37.0 179.6 L38.0 179.9 L39.0 179.9 L40.0 177.8 L41.0 177.4 L42.0 177.8 L43.0 177.6 L44.0 177.5 L45.0 177.5 L46.0 177.7 L47.0 177.2 L48.0 178.0 L49.0 179.3 L50.0 180.0 L51.0 180.1 L52.0 178.2 L53.0 177.2 L54.0 177.4 L55.0 177.7 L56.0 177.6 L57.0 177.5 L58.0 177.5 L59.0 177.7 L60.0 178.3 L61.0 177.4 L62.0 177.8 L63.0 178.6 L64.0 179.5 L65.0 180.1 L66.0 180.1 L67.0 178.9 L68.0 176.8 L69.0 176.2 L70.0 176.5 L71.0 177.0 L72.0 177.1 L73.0 176.3 L74.0 176.3 L75.0 176.9 L76.0 177.0 L77.0 176.7 L78.0 176.6 L79.0 178.7 L80.0 179.9 L81.0 180.1 L82.0 179.9 L83.0 179.6 L84.0 178.0 L85.0 177.4 L86.0 177.3 L87.0 177.7 L88.0 177.5 L89.0 177.2 L90.0 177.4 L91.0 178.3 L92.0 177.0 L93.0 177.0 L94.0 179.0 L95.0 179.8 L96.0 179.7 L97.0 179.3 L98.0 177.1 L99.0 177.0 L100.0 177.9 L101.0 178.1 L102.0 176.9 L103.0 176.8 L104.0 177.0 L105.0 178.3 L106.0 177.2 L107.0 177.6 L108.0 179.5 L109.0 180.1 L110.0 180.1 L111.0 178.0 L112.0 176.4 L113.0 177.3 L114.0 177.5 L115.0 176.7 L116.0 177.0 L117.0 178.1 L118.0 177.2 L119.0 176.9 L120.0 178.6 L121.0 180.1 L122.0 179.8 L123.0 178.6 L124.0 176.3 L125.0 176.8 L126.0 177.7 L127.0 177.5 L128.0 176.0 L129.0 176.9 L130.0 177.5 L131.0 176.9 L132.0 177.4 L133.0 179.0 L134.0 180.1 L135.0 180.1 L136.0 180.1 L137.0 178.4 L138.0 176.3 L139.0 176.0 L140.0 176.7 L141.0 176.7 L142.0 176.0 L143.0 176.2 L144.0 177.5 L145.0 177.8 L146.0 176.3 L147.0 177.2 L148.0 179.0 L149.0 180.1 L150.0 180.0 L151.0 179.0 L152.0 176.2 L153.0 176.2 L154.0 176.8 L155.0 176.6 L156.0 175.8 L157.0 175.8 L158.0 176.6 L159.0 176.8 L160.0 176.1 L161.0 177.0 L162.0 179.3 L163.0 180.1 L164.0 180.1 L165.0 178.4 L166.0 176.7 L167.0 176.5 L168.0 177.5 L169.0 177.4 L170.0 176.6 L171.0 176.2 L172.0 176.6 L173.0 177.4 L174.0 177.0 L175.0 176.6 L176.0 177.1 L177.0 178.6 L178.0 180.0 L179.0 179.7 L180.0 180.1 L181.0 178.5 L182.0 177.0 L183.0 176.9 L184.0 178.2 L185.0 176.6 L186.0 177.1 L187.0 177.0 L188.0 178.2 L189.0 176.9 L190.0 177.7 L191.0 179.1 L192.0 180.1 L193.0 179.9 L194.0 178.0 L195.0 176.3 L196.0 177.0 L197.0 177.2 L198.0 176.7 L199.0 177.4 L200.0 177.9 L201.0 176.7 L202.0 177.5 L203.0 179.3 L204.0 180.1 L205.0 180.1 L206.0 179.7 L207.0 176.3 L208.0 176.0 L209.0 176.4 L210.0 176.8 L211.0 176.7 L212.0 176.0 L213.0 175.8 L214.0 177.1 L215.0 176.4 L216.0 176.4 L217.0 176.6 L218.0 179.2 L219.0 179.9 L220.0 180.1 L221.0 180.0 L222.0 177.6 L223.0 177.1 L224.0 177.0 L225.0 177.4 L226.0 177.3 L227.0 176.5 L228.0 176.9 L229.0 177.5 L230.0 177.3 L231.0 176.7 L232.0 177.8 L233.0 179.1 L234.0 180.1 L235.0 179.7 L236.0 179.0 L237.0 176.1 L238.0 175.8 L239.0 176.5 L240.0 177.6 L241.0 176.4 L242.0 176.1 L243.0 176.0 L244.0 177.2 L245.0 176.6 L246.0 175.9 L247.0 176.7 L248.0 178.8 L249.0 180.1 L250.0 180.0 L251.0 179.7 L252.0 176.6 L253.0 176.6 L254.0 176.6 L255.0 176.8 L256.0 176.7 L257.0 176.0 L258.0 177.8 L259.0 177.3 L260.0 176.0 L261.0 178.3 L262.0 179.4 L263.0 179.8 L264.0 179.5 L265.0 177.6 L266.0 177.1 L267.0 177.6 L268.0 178.0 L269.0 176.9 L270.0 177.2 L271.0 177.0 L272.0 177.1 L273.0 177.7 L274.0 177.1 L275.0 178.1 L276.0 179.6 L277.0 180.1 L278.0 180.0 L279.0 178.2 L280.0 176.5 L281.0 176.8 L282.0 177.3 L283.0 177.0 L284.0 176.5 L285.0 176.6 L286.0 176.9 L287.0 176.6 L288.0 177.1 L289.0 179.2 L290.0 180.1 L291.0 180.1 L292.0 180.1 L293.0 177.8 L294.0 177.3 L295.0 177.8 L296.0 178.0 L297.0 176.9 L298.0 177.6 L299.0 178.4 L300.0 177.3 L301.0 177.4 L302.0 179.7 L303.0 180.1 L304.0 180.1 L305.0 178.0 L306.0 176.8 L307.0 177.1 L308.0 177.5 L309.0 177.1 L310.0 177.4 L311.0 177.3 L312.0 177.0 L313.0 178.0 L314.0 179.9 L315.0 180.1 L316.0 180.0 L317.0 179.5 L318.0 176.9 L319.0 177.2 L320.0 177.6 L321.0 177.5 L322.0 176.9 L323.0 176.7 L324.0 177.3 L325.0 177.8 L326.0 177.1 L327.0 177.5 L328.0 179.0 L329.0 180.0 L330.0 180.1 L331.0 179.4 L332.0 176.6 L333.0 176.3 L334.0 176.3 L335.0 177.1 L336.0 176.7 L337.0 175.9 L338.0 177.1 L339.0 177.9 L340.0 177.2 L341.0 176.1 L342.0 177.9 L343.0 179.2 L344.0 180.1 L345.0 179.8 L346.0 177.0 L347.0 176.6 L348.0 177.9 L349.0 177.3 L350.0 176.6 L351.0 176.8 L352.0 177.3 L353.0 177.0 L354.0 178.4 L354.0 184.2 L353.0 186.0 L352.0 185.5 L351.0 185.7 L350.0 185.8 L349.0 185.4 L348.0 185.0 L347.0 186.0 L346.0 185.9 L345.0 182.9 L344.0 182.8 L343.0 183.5 L342.0 184.6 L341.0 186.4 L340.0 185.2 L339.0 184.7 L338.0 185.6 L337.0 186.4 L336.0 186.1 L335.0 185.5 L334.0 186.8 L333.0 186.1 L332.0 185.9 L331.0 183.2 L330.0 182.7 L329.0 182.7 L328.0 183.6 L327.0 185.4 L326.0 185.3 L325.0 184.9 L324.0 185.6 L323.0 185.9 L322.0 186.1 L321.0 185.4 L320.0 185.1 L319.0 185.7 L318.0 185.4 L317.0 183.2 L316.0 182.7 L315.0 182.6 L314.0 182.8 L313.0 184.9 L312.0 185.9 L311.0 185.5 L310.0 185.1 L309.0 185.6 L308.0 185.3 L307.0 185.5 L306.0 186.0 L305.0 184.9 L304.0 182.7 L303.0 182.7 L302.0 183.1 L301.0 185.2 L300.0 185.5 L299.0 184.2 L298.0 185.4 L297.0 185.9 L296.0 184.8 L295.0 184.8 L294.0 185.6 L293.0 185.1 L292.0 182.6 L291.0 182.7 L290.0 182.6 L289.0 183.6 L288.0 185.9 L287.0 185.8 L286.0 185.7 L285.0 186.2 L284.0 186.5 L283.0 185.4 L282.0 185.1 L281.0 185.8 L280.0 186.3 L279.0 184.3 L278.0 182.8 L277.0 182.8 L276.0 183.2 L275.0 184.7 L274.0 185.5 L273.0 184.8 L272.0 185.7 L271.0 185.6 L270.0 185.6 L269.0 185.9 L268.0 184.7 L267.0 185.2 L266.0 185.5 L265.0 185.0 L264.0 183.1 L263.0 182.9 L262.0 183.3 L261.0 184.6 L260.0 186.7 L259.0 185.4 L258.0 184.8 L257.0 186.9 L256.0 186.2 L255.0 185.8 L254.0 186.1 L253.0 186.0 L252.0 186.2 L251.0 183.1 L250.0 182.7 L249.0 182.8 L248.0 183.9 L247.0 186.2 L246.0 186.6 L245.0 186.2 L244.0 185.7 L243.0 186.9 L242.0 186.7 L241.0 186.0 L240.0 185.3 L239.0 185.9 L238.0 187.2 L237.0 186.2 L236.0 183.8 L235.0 182.9 L234.0 182.6 L233.0 183.5 L232.0 185.0 L231.0 185.9 L230.0 185.4 L229.0 185.4 L228.0 186.0 L227.0 186.1 L226.0 185.5 L225.0 185.4 L224.0 185.7 L223.0 185.8 L222.0 185.2 L221.0 182.8 L220.0 182.7 L219.0 182.8 L218.0 183.6 L217.0 186.2 L216.0 186.3 L215.0 186.1 L214.0 185.4 L213.0 186.9 L212.0 186.4 L211.0 185.9 L210.0 185.7 L209.0 186.2 L208.0 186.9 L207.0 186.7 L206.0 183.1 L205.0 182.7 L204.0 182.6 L203.0 183.5 L202.0 184.9 L201.0 185.7 L200.0 184.9 L199.0 185.0 L198.0 185.7 L197.0 185.8 L196.0 185.6 L195.0 186.2 L194.0 184.6 L193.0 182.9 L192.0 182.6 L191.0 183.8 L190.0 184.9 L189.0 185.9 L188.0 184.3 L187.0 185.4 L186.0 185.4 L185.0 186.4 L184.0 184.4 L183.0 185.9 L182.0 185.9 L181.0 184.3 L180.0 182.6 L179.0 183.1 L178.0 182.9 L177.0 184.0 L176.0 185.6 L175.0 185.8 L174.0 185.5 L173.0 185.0 L172.0 186.4 L171.0 186.8 L170.0 186.4 L169.0 185.6 L168.0 185.5 L167.0 186.5 L166.0 185.8 L165.0 184.1 L164.0 182.7 L163.0 182.7 L162.0 183.4 L161.0 185.7 L160.0 186.6 L159.0 185.9 L158.0 185.8 L157.0 186.5 L156.0 187.3 L155.0 186.1 L154.0 185.7 L153.0 186.2 L152.0 186.3 L151.0 183.5 L150.0 182.8 L149.0 182.8 L148.0 183.8 L147.0 185.4 L146.0 186.2 L145.0 184.9 L144.0 185.1 L143.0 186.4 L142.0 186.9 L141.0 185.9 L140.0 186.2 L139.0 186.9 L138.0 186.4 L137.0 184.5 L136.0 182.7 L135.0 182.7 L134.0 182.6 L133.0 183.7 L132.0 185.5 L131.0 185.8 L130.0 185.1 L129.0 186.1 L128.0 187.0 L127.0 185.1 L126.0 185.1 L125.0 185.5 L124.0 186.1 L123.0 184.2 L122.0 183.1 L121.0 182.7 L120.0 184.2 L119.0 186.0 L118.0 185.3 L117.0 184.5 L116.0 186.0 L115.0 185.9 L114.0 185.4 L113.0 185.7 L112.0 186.3 L111.0 184.6 L110.0 182.7 L109.0 182.7 L108.0 183.2 L107.0 184.9 L106.0 185.5 L105.0 184.6 L104.0 185.4 L103.0 186.2 L102.0 185.6 L101.0 184.8 L100.0 184.8 L99.0 186.0 L98.0 185.3 L97.0 183.5 L96.0 183.0 L95.0 182.8 L94.0 183.8 L93.0 185.7 L92.0 185.5 L91.0 184.3 L90.0 185.5 L89.0 185.6 L88.0 185.0 L87.0 185.0 L86.0 185.6 L85.0 185.1 L84.0 184.6 L83.0 183.1 L82.0 182.9 L81.0 182.7 L80.0 182.7 L79.0 184.2 L78.0 186.2 L77.0 186.3 L76.0 185.8 L75.0 185.6 L74.0 186.7 L73.0 186.4 L72.0 185.6 L71.0 185.9 L70.0 186.5 L69.0 186.7 L68.0 186.0 L67.0 183.8 L66.0 182.6 L65.0 182.7 L64.0 183.3 L63.0 184.2 L62.0 184.9 L61.0 185.2 L60.0 184.4 L59.0 185.2 L58.0 185.3 L57.0 184.9 L56.0 185.4 L55.0 185.0 L54.0 185.2 L53.0 185.3 L52.0 184.7 L51.0 182.7 L50.0 182.7 L49.0 183.4 L48.0 184.9 L47.0 185.6 L46.0 184.9 L45.0 185.0 L44.0 185.1 L43.0 185.4 L42.0 185.0 L41.0 185.4 L40.0 184.7 L39.0 182.9 L38.0 182.8 L37.0 183.2 L36.0 184.1 L35.0 186.0 L34.0 186.6 L33.0 185.8 L32.0 186.2 L31.0 186.9 L30.0 186.0 L29.0 185.4 L28.0 186.5 L27.0 187.1 L26.0 184.3 L25.0 182.8 L24.0 183.1 L23.0 182.7 L22.0 183.9 L21.0 185.0 L20.0 185.1 L19.0 184.8 L18.0 185.5 L17.0 185.7 L16.0 185.6 L15.0 184.8 L14.0 185.0 L13.0 186.2 L12.0 184.8 L11.0 182.6 L10.0 183.1 L9.0 182.6 L8.0 183.6 L7.0 185.2 L6.0 186.0 L5.0 184.6 L4.0 185.7 L3.0 186.3 L2.0 186.4 L1.0 185.4 L0.0 186.1Z" fill="#1e1e26"/><path d="M0.0 197.0 L1.0 196.7 L2.0 196.4 L3.0 196.1 L4.0 196.6 L5.0 197.8 L6.0 196.1 L7.0 197.6 L8.0 198.4 L9.0 199.5 L10.0 199.5 L11.0 199.0 L12.0 196.9 L13.0 195.8 L14.0 197.1 L15.0 196.9 L16.0 196.5 L17.0 196.9 L18.0 196.6 L19.0 195.9 L20.0 198.0 L21.0 199.3 L22.0 199.5 L23.0 198.8 L24.0 196.0 L25.0 195.5 L26.0 196.5 L27.0 197.1 L28.0 196.1 L29.0 195.8 L30.0 196.1 L31.0 196.4 L32.0 197.1 L33.0 195.7 L34.0 197.2 L35.0 198.7 L36.0 199.5 L37.0 199.5 L38.0 199.5 L39.0 197.7 L40.0 196.3 L41.0 196.5 L42.0 197.5 L43.0 196.3 L44.0 196.1 L45.0 196.5 L46.0 197.3 L47.0 196.8 L48.0 196.8 L49.0 198.0 L50.0 199.1 L51.0 199.2 L52.0 199.5 L53.0 197.7 L54.0 195.2 L55.0 195.9 L56.0 196.5 L57.0 196.1 L58.0 195.6 L59.0 196.0 L60.0 196.4 L61.0 195.8 L62.0 195.7 L63.0 197.5 L64.0 199.5 L65.0 199.5 L66.0 198.6 L67.0 196.1 L68.0 196.4 L69.0 197.4 L70.0 196.5 L71.0 196.4 L72.0 197.2 L73.0 196.6 L74.0 196.8 L75.0 198.7 L76.0 199.4 L77.0 199.2 L78.0 199.5 L79.0 197.9 L80.0 195.9 L81.0 196.2 L82.0 197.5 L83.0 196.3 L84.0 196.0 L85.0 196.3 L86.0 196.6 L87.0 196.2 L88.0 195.8 L89.0 197.6 L90.0 198.6 L91.0 199.3 L92.0 199.5 L93.0 198.4 L94.0 196.4 L95.0 196.5 L96.0 196.7 L97.0 197.4 L98.0 196.7 L99.0 196.4 L100.0 196.8 L101.0 196.9 L102.0 197.0 L103.0 196.7 L104.0 197.7 L105.0 199.0 L106.0 199.5 L107.0 199.5 L108.0 198.0 L109.0 196.2 L110.0 196.7 L111.0 197.3 L112.0 197.0 L113.0 196.4 L114.0 196.4 L115.0 196.7 L116.0 197.4 L117.0 196.6 L118.0 196.8 L119.0 197.6 L120.0 198.7 L121.0 199.2 L122.0 199.5 L123.0 199.1 L124.0 197.0 L125.0 196.1 L126.0 196.7 L127.0 197.4 L128.0 196.3 L129.0 196.7 L130.0 196.5 L131.0 196.8 L132.0 197.4 L133.0 196.2 L134.0 197.2 L135.0 198.1 L136.0 199.2 L137.0 199.2 L138.0 199.5 L139.0 199.3 L140.0 196.8 L141.0 195.7 L142.0 196.4 L143.0 196.8 L144.0 196.0 L145.0 196.4 L146.0 196.1 L147.0 197.2 L148.0 196.5 L149.0 197.1 L150.0 198.8 L151.0 199.4 L152.0 199.0 L153.0 196.8 L154.0 196.0 L155.0 196.3 L156.0 197.1 L157.0 196.0 L158.0 195.8 L159.0 195.5 L160.0 196.3 L161.0 196.3 L162.0 196.1 L163.0 197.2 L164.0 198.9 L165.0 199.2 L166.0 198.7 L167.0 195.6 L168.0 195.9 L169.0 196.4 L170.0 195.8 L171.0 195.3 L172.0 196.3 L173.0 196.7 L174.0 195.9 L175.0 197.5 L176.0 199.1 L177.0 199.5 L178.0 198.5 L179.0 195.6 L180.0 195.8 L181.0 196.6 L182.0 196.4 L183.0 196.0 L184.0 196.2 L185.0 197.3 L186.0 195.9 L187.0 196.2 L188.0 198.3 L189.0 199.5 L190.0 199.2 L191.0 199.5 L192.0 197.4 L193.0 196.8 L194.0 197.6 L195.0 197.8 L196.0 196.3 L197.0 196.8 L198.0 196.7 L199.0 197.7 L200.0 197.1 L201.0 197.7 L202.0 198.6 L203.0 199.4 L204.0 199.2 L205.0 198.0 L206.0 195.2 L207.0 195.2 L208.0 195.7 L209.0 197.1 L210.0 195.3 L211.0 195.2 L212.0 195.8 L213.0 196.2 L214.0 195.6 L215.0 195.9 L216.0 198.0 L217.0 199.3 L218.0 199.3 L219.0 199.5 L220.0 199.0 L221.0 197.0 L222.0 196.1 L223.0 196.6 L224.0 196.8 L225.0 195.9 L226.0 196.4 L227.0 196.3 L228.0 197.2 L229.0 196.4 L230.0 196.7 L231.0 197.7 L232.0 199.1 L233.0 199.5 L234.0 199.5 L235.0 198.0 L236.0 196.1 L237.0 197.0 L238.0 197.6 L239.0 196.9 L240.0 196.7 L241.0 196.4 L242.0 197.2 L243.0 197.1 L244.0 196.4 L245.0 197.5 L246.0 198.6 L247.0 199.3 L248.0 199.5 L249.0 199.5 L250.0 196.5 L251.0 196.0 L252.0 196.2 L253.0 196.3 L254.0 195.4 L255.0 196.6 L256.0 197.4 L257.0 196.3 L258.0 196.3 L259.0 198.1 L260.0 199.2 L261.0 199.5 L262.0 198.5 L263.0 196.9 L264.0 196.9 L265.0 197.2 L266.0 197.0 L267.0 196.6 L268.0 196.3 L269.0 196.2 L270.0 197.4 L271.0 196.7 L272.0 196.9 L273.0 197.3 L274.0 198.9 L275.0 199.5 L276.0 199.5 L277.0 198.9 L278.0 196.4 L279.0 195.8 L280.0 196.8 L281.0 196.9 L282.0 196.7 L283.0 195.5 L284.0 196.1 L285.0 196.3 L286.0 196.5 L287.0 196.2 L288.0 196.9 L289.0 198.9 L290.0 199.5 L291.0 199.5 L292.0 198.8 L293.0 196.3 L294.0 195.8 L295.0 196.7 L296.0 196.6 L297.0 195.8 L298.0 196.7 L299.0 197.1 L300.0 196.4 L301.0 197.2 L302.0 198.7 L303.0 199.4 L304.0 199.4 L305.0 198.4 L306.0 196.2 L307.0 195.8 L308.0 197.0 L309.0 197.1 L310.0 195.9 L311.0 195.6 L312.0 196.3 L313.0 197.1 L314.0 196.1 L315.0 196.1 L316.0 197.8 L317.0 199.1 L318.0 199.5 L319.0 199.0 L320.0 196.8 L321.0 196.8 L322.0 197.5 L323.0 197.1 L324.0 196.3 L325.0 197.1 L326.0 197.1 L327.0 196.7 L328.0 197.7 L329.0 199.0 L330.0 199.5 L331.0 199.4 L332.0 198.2 L333.0 195.4 L334.0 195.9 L335.0 196.8 L336.0 196.3 L337.0 195.5 L338.0 196.3 L339.0 196.9 L340.0 195.9 L341.0 196.4 L342.0 198.9 L343.0 199.4 L344.0 199.4 L345.0 197.4 L346.0 196.0 L347.0 197.3 L348.0 197.5 L349.0 196.4 L350.0 196.2 L351.0 197.1 L352.0 196.8 L353.0 197.0 L354.0 199.0 L354.0 202.7 L353.0 204.5 L352.0 204.9 L351.0 204.3 L350.0 204.9 L349.0 205.1 L348.0 204.0 L347.0 204.5 L346.0 205.6 L345.0 204.3 L344.0 202.1 L343.0 202.3 L342.0 202.7 L341.0 204.9 L340.0 205.5 L339.0 204.7 L338.0 205.4 L337.0 205.9 L336.0 205.4 L335.0 204.5 L334.0 205.6 L333.0 205.8 L332.0 203.3 L331.0 202.2 L330.0 202.1 L329.0 202.5 L328.0 203.7 L327.0 204.6 L326.0 204.4 L325.0 204.2 L324.0 205.0 L323.0 204.3 L322.0 204.0 L321.0 204.5 L320.0 204.8 L319.0 202.5 L318.0 202.0 L317.0 202.5 L316.0 203.9 L315.0 205.3 L314.0 205.5 L313.0 204.5 L312.0 205.3 L311.0 205.8 L310.0 205.3 L309.0 204.6 L308.0 204.6 L307.0 205.5 L306.0 205.0 L305.0 203.3 L304.0 202.2 L303.0 202.3 L302.0 202.7 L301.0 204.2 L300.0 205.2 L299.0 204.7 L298.0 205.0 L297.0 205.9 L296.0 204.7 L295.0 205.1 L294.0 205.6 L293.0 205.0 L292.0 202.9 L291.0 202.1 L290.0 202.1 L289.0 202.6 L288.0 204.8 L287.0 205.5 L286.0 205.2 L285.0 205.0 L284.0 205.5 L283.0 205.9 L282.0 204.5 L281.0 204.7 L280.0 204.9 L279.0 205.7 L278.0 204.7 L277.0 202.6 L276.0 202.0 L275.0 202.1 L274.0 202.8 L273.0 204.1 L272.0 204.7 L271.0 204.9 L270.0 204.3 L269.0 205.0 L268.0 205.0 L267.0 204.7 L266.0 204.3 L265.0 204.1 L264.0 204.6 L263.0 204.5 L262.0 202.9 L261.0 202.0 L260.0 202.4 L259.0 203.5 L258.0 205.3 L257.0 205.3 L256.0 204.2 L255.0 205.2 L254.0 205.6 L253.0 205.3 L252.0 205.1 L251.0 205.5 L250.0 204.8 L249.0 202.1 L248.0 202.0 L247.0 202.1 L246.0 202.9 L245.0 204.2 L244.0 205.4 L243.0 204.4 L242.0 204.5 L241.0 205.1 L240.0 205.0 L239.0 204.7 L238.0 204.1 L237.0 204.4 L236.0 205.5 L235.0 203.4 L234.0 202.0 L233.0 202.0 L232.0 202.5 L231.0 203.7 L230.0 205.0 L229.0 205.2 L228.0 204.0 L227.0 205.0 L226.0 205.4 L225.0 205.7 L224.0 204.9 L223.0 204.6 L222.0 205.1 L221.0 204.4 L220.0 202.7 L219.0 202.0 L218.0 202.2 L217.0 202.3 L216.0 203.7 L215.0 205.4 L214.0 206.0 L213.0 205.1 L212.0 205.8 L211.0 206.2 L210.0 206.3 L209.0 204.1 L208.0 205.8 L207.0 206.6 L206.0 205.9 L205.0 203.7 L204.0 202.3 L203.0 202.2 L202.0 202.8 L201.0 204.0 L200.0 204.3 L199.0 204.0 L198.0 205.1 L197.0 204.5 L196.0 205.4 L195.0 203.6 L194.0 204.0 L193.0 204.4 L192.0 204.1 L191.0 202.1 L190.0 202.4 L189.0 202.2 L188.0 203.1 L187.0 205.1 L186.0 205.3 L185.0 204.4 L184.0 205.4 L183.0 205.2 L182.0 205.1 L181.0 204.7 L180.0 205.5 L179.0 206.0 L178.0 203.2 L177.0 202.1 L176.0 202.5 L175.0 203.9 L174.0 205.5 L173.0 204.7 L172.0 205.2 L171.0 206.5 L170.0 205.7 L169.0 205.4 L168.0 205.3 L167.0 205.7 L166.0 203.0 L165.0 202.3 L164.0 202.6 L163.0 204.4 L162.0 205.1 L161.0 204.9 L160.0 205.3 L159.0 205.7 L158.0 206.0 L157.0 205.8 L156.0 204.5 L155.0 205.2 L154.0 205.6 L153.0 204.7 L152.0 202.6 L151.0 202.2 L150.0 202.7 L149.0 204.3 L148.0 205.2 L147.0 204.6 L146.0 205.1 L145.0 204.8 L144.0 205.4 L143.0 204.8 L142.0 205.3 L141.0 205.5 L140.0 204.7 L139.0 202.4 L138.0 202.1 L137.0 202.4 L136.0 202.4 L135.0 203.3 L134.0 204.3 L133.0 205.4 L132.0 204.0 L131.0 204.9 L130.0 205.2 L129.0 205.1 L128.0 205.2 L127.0 204.3 L126.0 205.1 L125.0 205.3 L124.0 204.3 L123.0 202.4 L122.0 202.0 L121.0 202.3 L120.0 202.7 L119.0 203.8 L118.0 204.5 L117.0 205.0 L116.0 204.1 L115.0 204.6 L114.0 205.0 L113.0 205.3 L112.0 204.5 L111.0 204.3 L110.0 205.0 L109.0 205.0 L108.0 203.6 L107.0 202.1 L106.0 202.1 L105.0 202.6 L104.0 204.0 L103.0 204.7 L102.0 204.3 L101.0 204.5 L100.0 204.6 L99.0 205.2 L98.0 204.9 L97.0 204.0 L96.0 205.0 L95.0 205.0 L94.0 205.0 L93.0 203.1 L92.0 202.1 L91.0 202.2 L90.0 203.1 L89.0 203.8 L88.0 205.7 L87.0 205.2 L86.0 205.2 L85.0 204.9 L84.0 205.5 L83.0 205.0 L82.0 203.9 L81.0 205.5 L80.0 205.7 L79.0 203.5 L78.0 202.0 L77.0 202.2 L76.0 202.2 L75.0 202.8 L74.0 204.9 L73.0 204.9 L72.0 204.4 L71.0 205.0 L70.0 205.1 L69.0 204.2 L68.0 205.1 L67.0 205.4 L66.0 202.8 L65.0 202.1 L64.0 202.0 L63.0 203.8 L62.0 206.1 L61.0 205.5 L60.0 205.3 L59.0 205.2 L58.0 205.6 L57.0 205.6 L56.0 204.9 L55.0 205.7 L54.0 206.4 L53.0 203.7 L52.0 202.1 L51.0 202.4 L50.0 202.4 L49.0 203.5 L48.0 204.5 L47.0 204.7 L46.0 204.1 L45.0 205.2 L44.0 205.3 L43.0 205.0 L42.0 204.0 L41.0 205.0 L40.0 205.3 L39.0 203.7 L38.0 202.0 L37.0 202.2 L36.0 202.0 L35.0 202.9 L34.0 204.3 L33.0 206.1 L32.0 204.5 L31.0 204.9 L30.0 205.3 L29.0 205.8 L28.0 205.5 L27.0 204.6 L26.0 204.8 L25.0 206.0 L24.0 205.6 L23.0 202.6 L22.0 202.0 L21.0 202.3 L20.0 203.7 L19.0 205.8 L18.0 205.0 L17.0 204.6 L16.0 205.3 L15.0 204.7 L14.0 204.2 L13.0 205.7 L12.0 204.8 L11.0 202.7 L10.0 202.1 L9.0 202.1 L8.0 203.2 L7.0 203.9 L6.0 205.8 L5.0 203.6 L4.0 204.8 L3.0 205.0 L2.0 204.9 L1.0 204.6 L0.0 204.7Z" fill="#1e1e26"/></svg>
<svg style="left:0;top:0" width="960" height="300"><path d="M469.0 177.7 L470.0 177.9 L471.0 177.2 L472.0 177.2 L473.0 177.6 L474.0 177.9 L475.0 176.6 L476.0 177.9 L477.0 179.1 L478.0 180.1 L479.0 180.1 L480.0 180.1 L481.0 177.2 L482.0 176.9 L483.0 177.4 L484.0 177.4 L485.0 176.6 L486.0 177.5 L487.0 177.2 L488.0 177.1 L489.0 178.9 L490.0 179.8 L491.0 180.1 L492.0 179.7 L493.0 177.2 L494.0 176.4 L495.0 176.4 L496.0 177.9 L497.0 176.8 L498.0 176.0 L499.0 176.1 L500.0 177.7 L501.0 177.3 L502.0 176.4 L503.0 177.1 L504.0 179.0 L505.0 180.1 L506.0 179.8 L507.0 180.1 L508.0 177.7 L509.0 177.0 L510.0 177.7 L511.0 177.6 L512.0 177.1 L513.0 177.2 L514.0 176.8 L515.0 177.9 L516.0 177.2 L517.0 177.3 L518.0 179.0 L519.0 179.8 L520.0 180.0 L521.0 180.1 L522.0 178.3 L523.0 176.1 L524.0 175.8 L525.0 177.3 L526.0 176.8 L527.0 175.8 L528.0 176.2 L529.0 177.2 L530.0 176.5 L531.0 176.6 L532.0 178.1 L533.0 180.1 L534.0 180.1 L535.0 179.1 L536.0 177.0 L537.0 176.9 L538.0 177.6 L539.0 176.7 L540.0 176.9 L541.0 177.7 L542.0 177.6 L543.0 177.7 L544.0 179.6 L545.0 180.1 L546.0 180.1 L547.0 179.7 L548.0 177.8 L549.0 176.3 L550.0 176.4 L551.0 178.0 L552.0 177.2 L553.0 176.9 L554.0 176.8 L555.0 177.6 L556.0 177.2 L557.0 176.6 L558.0 177.9 L559.0 179.2 L560.0 179.8 L561.0 179.8 L562.0 178.8 L563.0 177.0 L564.0 177.5 L565.0 177.7 L566.0 178.2 L567.0 177.1 L568.0 176.9 L569.0 177.3 L570.0 178.2 L571.0 177.6 L572.0 177.5 L573.0 177.9 L574.0 179.6 L575.0 179.8 L576.0 180.1 L577.0 178.1 L578.0 177.1 L579.0 176.9 L580.0 177.5 L581.0 178.0 L582.0 177.4 L583.0 176.9 L583.0 185.6 L582.0 185.3 L581.0 184.6 L580.0 185.2 L579.0 185.8 L578.0 185.5 L577.0 184.8 L576.0 182.6 L575.0 183.0 L574.0 183.1 L573.0 184.9 L572.0 185.3 L571.0 185.0 L570.0 184.6 L569.0 185.6 L568.0 186.1 L567.0 185.9 L566.0 184.3 L565.0 184.8 L564.0 185.0 L563.0 185.8 L562.0 183.9 L561.0 183.0 L560.0 183.0 L559.0 183.5 L558.0 184.7 L557.0 186.1 L556.0 185.7 L555.0 185.1 L554.0 185.6 L553.0 185.6 L552.0 185.4 L551.0 184.6 L550.0 185.9 L549.0 186.6 L548.0 184.8 L547.0 183.1 L546.0 182.6 L545.0 182.8 L544.0 183.1 L543.0 185.0 L542.0 185.1 L541.0 184.9 L540.0 186.0 L539.0 185.8 L538.0 185.0 L537.0 185.6 L536.0 185.5 L535.0 183.5 L534.0 182.7 L533.0 182.7 L532.0 184.6 L531.0 186.2 L530.0 186.2 L529.0 185.7 L528.0 186.8 L527.0 186.6 L526.0 186.2 L525.0 185.2 L524.0 186.4 L523.0 186.4 L522.0 184.2 L521.0 182.6 L520.0 182.9 L519.0 183.1 L518.0 183.6 L517.0 185.3 L516.0 185.4 L515.0 184.6 L514.0 186.1 L513.0 185.4 L512.0 185.8 L511.0 185.3 L510.0 185.2 L509.0 185.8 L508.0 185.0 L507.0 182.7 L506.0 183.1 L505.0 182.7 L504.0 183.9 L503.0 185.5 L502.0 186.4 L501.0 185.3 L500.0 185.2 L499.0 186.4 L498.0 186.4 L497.0 185.8 L496.0 184.8 L495.0 186.5 L494.0 185.9 L493.0 185.8 L492.0 182.9 L491.0 182.7 L490.0 182.9 L489.0 184.0 L488.0 185.9 L487.0 185.5 L486.0 185.0 L485.0 185.7 L484.0 185.1 L483.0 185.1 L482.0 186.0 L481.0 185.3 L480.0 182.7 L479.0 182.7 L478.0 182.6 L477.0 183.5 L476.0 184.7 L475.0 186.4 L474.0 184.6 L473.0 185.2 L472.0 185.7 L471.0 185.6 L470.0 184.7 L469.0 184.8Z" fill="#1e1e26"/><path d="M469.0 195.2 L470.0 195.8 L471.0 196.9 L472.0 195.5 L473.0 195.2 L474.0 195.7 L475.0 196.2 L476.0 196.3 L477.0 195.7 L478.0 197.1 L479.0 198.4 L480.0 199.5 L481.0 199.2 L482.0 198.9 L483.0 196.8 L484.0 196.2 L485.0 196.7 L486.0 197.0 L487.0 196.1 L488.0 196.6 L489.0 197.3 L490.0 196.9 L491.0 197.5 L492.0 198.9 L493.0 199.5 L494.0 199.5 L495.0 197.1 L496.0 196.5 L497.0 196.7 L498.0 197.3 L499.0 196.0 L500.0 196.3 L501.0 196.9 L502.0 196.9 L503.0 196.9 L504.0 198.5 L505.0 199.5 L506.0 199.5 L507.0 199.5 L508.0 197.9 L509.0 196.2 L510.0 196.5 L511.0 196.7 L512.0 196.6 L513.0 196.5 L514.0 196.4 L515.0 197.5 L516.0 196.6 L517.0 196.4 L518.0 198.1 L519.0 199.3 L520.0 199.5 L521.0 198.7 L522.0 195.9 L523.0 195.7 L524.0 196.5 L525.0 196.9 L526.0 196.0 L527.0 196.1 L528.0 196.1 L529.0 196.1 L530.0 195.8 L531.0 197.3 L532.0 199.4 L533.0 199.1 L534.0 199.5 L535.0 199.3 L536.0 196.6 L537.0 196.1 L538.0 197.0 L539.0 196.8 L540.0 196.4 L541.0 197.0 L542.0 197.2 L543.0 197.1 L544.0 198.2 L545.0 199.5 L546.0 199.5 L547.0 198.1 L548.0 195.5 L549.0 195.9 L550.0 195.8 L551.0 196.7 L552.0 196.2 L553.0 195.6 L554.0 195.4 L555.0 196.7 L556.0 195.6 L557.0 195.3 L558.0 196.9 L559.0 198.3 L560.0 199.5 L561.0 199.4 L562.0 199.3 L563.0 197.1 L564.0 195.3 L565.0 195.2 L566.0 196.2 L567.0 196.7 L568.0 195.2 L569.0 195.5 L570.0 195.8 L571.0 197.0 L572.0 195.5 L573.0 196.0 L574.0 198.0 L575.0 199.4 L576.0 199.5 L577.0 199.5 L578.0 198.9 L579.0 195.5 L580.0 195.2 L581.0 196.1 L582.0 196.8 L583.0 195.9 L583.0 205.5 L582.0 204.9 L581.0 205.4 L580.0 206.5 L579.0 206.1 L578.0 202.7 L577.0 202.1 L576.0 202.0 L575.0 202.1 L574.0 203.4 L573.0 205.3 L572.0 205.7 L571.0 204.4 L570.0 205.4 L569.0 205.9 L568.0 206.5 L567.0 204.8 L566.0 205.4 L565.0 206.1 L564.0 206.5 L563.0 204.4 L562.0 202.4 L561.0 202.2 L560.0 202.1 L559.0 203.3 L558.0 204.5 L557.0 206.3 L556.0 206.1 L555.0 204.5 L554.0 206.0 L553.0 205.7 L552.0 205.2 L551.0 204.7 L550.0 205.5 L549.0 205.2 L548.0 205.7 L547.0 203.6 L546.0 202.1 L545.0 202.2 L544.0 203.4 L543.0 204.5 L542.0 204.5 L541.0 204.3 L540.0 204.9 L539.0 204.7 L538.0 204.6 L537.0 205.6 L536.0 205.2 L535.0 202.2 L534.0 202.1 L533.0 202.4 L532.0 202.1 L531.0 204.1 L530.0 205.8 L529.0 205.7 L528.0 205.1 L527.0 205.1 L526.0 205.8 L525.0 204.8 L524.0 204.8 L523.0 205.9 L522.0 205.9 L521.0 202.9 L520.0 202.1 L519.0 202.2 L518.0 203.6 L517.0 204.8 L516.0 204.8 L515.0 204.0 L514.0 205.4 L513.0 204.8 L512.0 204.8 L511.0 204.5 L510.0 204.9 L509.0 205.4 L508.0 203.7 L507.0 202.1 L506.0 202.0 L505.0 202.0 L504.0 203.0 L503.0 204.6 L502.0 204.7 L501.0 204.8 L500.0 205.0 L499.0 205.5 L498.0 204.1 L497.0 204.7 L496.0 205.0 L495.0 204.2 L494.0 202.0 L493.0 202.1 L492.0 202.7 L491.0 203.8 L490.0 204.7 L489.0 204.1 L488.0 204.9 L487.0 205.2 L486.0 204.8 L485.0 204.7 L484.0 205.5 L483.0 204.7 L482.0 202.8 L481.0 202.3 L480.0 202.1 L479.0 203.3 L478.0 204.4 L477.0 205.6 L476.0 205.2 L475.0 205.1 L474.0 205.5 L473.0 205.9 L472.0 206.2 L471.0 204.8 L470.0 205.6 L469.0 206.3Z" fill="#1e1e26"/></svg>
<svg style="left:0;top:0" width="960" height="300"><path d="M612.0 175.8 L613.0 176.8 L614.0 177.1 L615.0 176.8 L616.0 176.4 L617.0 176.0 L618.0 176.9 L619.0 176.8 L620.0 176.2 L621.0 177.4 L622.0 179.2 L623.0 180.1 L624.0 180.1 L625.0 179.3 L626.0 176.7 L627.0 176.7 L628.0 178.1 L629.0 176.9 L630.0 176.7 L631.0 177.6 L632.0 177.8 L633.0 177.0 L634.0 177.7 L635.0 179.8 L636.0 180.1 L637.0 180.1 L638.0 177.8 L639.0 177.1 L640.0 176.8 L641.0 178.1 L642.0 177.2 L643.0 177.6 L644.0 177.5 L645.0 177.3 L646.0 177.4 L647.0 179.2 L648.0 179.8 L649.0 180.0 L650.0 180.1 L651.0 178.4 L652.0 177.0 L653.0 177.5 L654.0 177.7 L655.0 177.4 L656.0 176.5 L657.0 177.4 L658.0 178.1 L659.0 177.3 L660.0 177.4 L661.0 178.3 L662.0 179.9 L663.0 180.1 L664.0 179.6 L665.0 176.8 L666.0 176.1 L667.0 177.5 L668.0 177.2 L669.0 176.0 L670.0 176.3 L671.0 177.4 L672.0 177.7 L673.0 176.4 L674.0 177.7 L675.0 179.7 L676.0 179.8 L677.0 180.1 L678.0 179.7 L679.0 177.2 L680.0 177.5 L681.0 178.0 L682.0 177.0 L683.0 176.5 L684.0 177.9 L685.0 177.2 L686.0 177.4 L687.0 179.5 L688.0 180.1 L689.0 180.0 L690.0 178.6 L691.0 176.3 L692.0 176.2 L693.0 176.2 L694.0 177.3 L695.0 176.1 L696.0 176.0 L697.0 176.8 L698.0 177.7 L699.0 177.1 L700.0 175.9 L701.0 177.3 L702.0 179.1 L703.0 180.0 L704.0 180.1 L705.0 179.9 L705.0 182.9 L704.0 182.6 L703.0 182.8 L702.0 183.7 L701.0 185.6 L700.0 186.5 L699.0 185.6 L698.0 184.9 L697.0 185.9 L696.0 186.5 L695.0 186.4 L694.0 185.1 L693.0 186.2 L692.0 186.8 L691.0 186.6 L690.0 184.2 L689.0 182.7 L688.0 182.6 L687.0 183.4 L686.0 185.1 L685.0 185.3 L684.0 184.8 L683.0 186.3 L682.0 185.9 L681.0 184.9 L680.0 184.9 L679.0 185.7 L678.0 183.2 L677.0 182.7 L676.0 183.0 L675.0 183.0 L674.0 185.3 L673.0 186.0 L672.0 184.8 L671.0 185.6 L670.0 186.6 L669.0 186.3 L668.0 185.5 L667.0 185.5 L666.0 186.7 L665.0 186.1 L664.0 183.1 L663.0 182.6 L662.0 182.8 L661.0 184.4 L660.0 185.3 L659.0 185.6 L658.0 184.4 L657.0 185.2 L656.0 185.9 L655.0 185.2 L654.0 185.1 L653.0 185.4 L652.0 185.8 L651.0 184.1 L650.0 182.6 L649.0 182.7 L648.0 182.9 L647.0 183.6 L646.0 185.6 L645.0 185.3 L644.0 185.2 L643.0 185.0 L642.0 185.4 L641.0 184.7 L640.0 185.6 L639.0 185.4 L638.0 184.6 L637.0 182.7 L636.0 182.6 L635.0 183.0 L634.0 184.9 L633.0 185.7 L632.0 184.8 L631.0 185.3 L630.0 185.9 L629.0 186.0 L628.0 184.5 L627.0 186.2 L626.0 185.6 L625.0 183.4 L624.0 182.6 L623.0 182.6 L622.0 183.5 L621.0 185.3 L620.0 186.2 L619.0 185.7 L618.0 185.5 L617.0 186.8 L616.0 186.5 L615.0 185.8 L614.0 185.6 L613.0 186.2 L612.0 187.2Z" fill="#1e1e26"/><path d="M612.0 197.6 L613.0 195.7 L614.0 195.9 L615.0 196.3 L616.0 196.4 L617.0 195.6 L618.0 195.5 L619.0 196.3 L620.0 196.8 L621.0 196.0 L622.0 196.6 L623.0 198.1 L624.0 199.5 L625.0 199.5 L626.0 199.4 L627.0 197.0 L628.0 196.0 L629.0 196.3 L630.0 196.1 L631.0 195.7 L632.0 195.7 L633.0 196.7 L634.0 196.8 L635.0 195.7 L636.0 198.0 L637.0 199.5 L638.0 199.5 L639.0 199.0 L640.0 196.2 L641.0 195.6 L642.0 196.4 L643.0 196.7 L644.0 195.7 L645.0 195.3 L646.0 195.6 L647.0 197.1 L648.0 196.2 L649.0 196.1 L650.0 197.5 L651.0 199.3 L652.0 199.5 L653.0 199.5 L654.0 197.1 L655.0 196.0 L656.0 197.3 L657.0 197.4 L658.0 196.7 L659.0 196.5 L660.0 197.3 L661.0 196.6 L662.0 196.4 L663.0 197.7 L664.0 199.0 L665.0 199.5 L666.0 199.5 L667.0 198.7 L668.0 195.9 L669.0 196.0 L670.0 197.4 L671.0 196.3 L672.0 195.7 L673.0 196.2 L674.0 197.0 L675.0 196.6 L676.0 197.2 L677.0 199.0 L678.0 199.5 L679.0 199.5 L680.0 199.5 L681.0 196.9 L682.0 196.0 L683.0 196.8 L684.0 196.4 L685.0 196.0 L686.0 195.7 L687.0 196.5 L688.0 196.2 L689.0 196.1 L690.0 198.2 L691.0 199.5 L692.0 199.5 L693.0 199.5 L694.0 197.2 L695.0 195.7 L696.0 195.8 L697.0 197.1 L698.0 195.4 L699.0 195.8 L700.0 196.8 L701.0 196.3 L702.0 196.3 L703.0 197.9 L704.0 199.5 L705.0 199.5 L705.0 202.1 L704.0 202.1 L703.0 203.5 L702.0 204.8 L701.0 205.4 L700.0 205.0 L699.0 205.8 L698.0 205.9 L697.0 204.2 L696.0 205.3 L695.0 206.1 L694.0 204.3 L693.0 202.0 L692.0 202.1 L691.0 202.1 L690.0 203.4 L689.0 205.6 L688.0 205.4 L687.0 204.9 L686.0 205.5 L685.0 205.6 L684.0 205.3 L683.0 204.8 L682.0 205.7 L681.0 204.8 L680.0 202.0 L679.0 202.0 L678.0 202.1 L677.0 202.5 L676.0 204.4 L675.0 205.0 L674.0 204.7 L673.0 205.3 L672.0 206.0 L671.0 204.8 L670.0 204.1 L669.0 205.7 L668.0 205.3 L667.0 202.9 L666.0 202.2 L665.0 202.1 L664.0 202.6 L663.0 203.9 L662.0 205.0 L661.0 205.1 L660.0 204.5 L659.0 204.7 L658.0 204.9 L657.0 204.3 L656.0 204.2 L655.0 205.6 L654.0 204.5 L653.0 202.1 L652.0 202.0 L651.0 202.2 L650.0 203.9 L649.0 205.4 L648.0 205.1 L647.0 204.2 L646.0 205.9 L645.0 206.3 L644.0 206.0 L643.0 204.7 L642.0 205.1 L641.0 206.0 L640.0 205.5 L639.0 202.5 L638.0 202.1 L637.0 202.0 L636.0 203.5 L635.0 205.6 L634.0 204.6 L633.0 204.7 L632.0 205.5 L631.0 206.1 L630.0 205.3 L629.0 204.9 L628.0 205.2 L627.0 204.7 L626.0 202.1 L625.0 202.1 L624.0 202.1 L623.0 203.6 L622.0 204.9 L621.0 205.1 L620.0 204.9 L619.0 205.4 L618.0 205.7 L617.0 205.5 L616.0 205.2 L615.0 205.5 L614.0 206.0 L613.0 205.6 L612.0 203.8Z" fill="#1e1e26"/></svg>
<div style="left:354px;top:181px;width:115px;height:1.5px;background:#2a2f55;"></div>
<div style="left:354px;top:200px;width:115px;height:1.5px;background:#2a2f55;"></div>
<div style="left:11px;top:154px;width:1px;height:56px;background:#3d4788;"></div>
<div style="left:126px;top:154px;width:1px;height:56px;background:#3d4788;"></div>
<div style="left:354px;top:154px;width:1px;height:56px;background:#3d4788;"></div>
<div style="left:469px;top:154px;width:1px;height:56px;background:#3d4788;"></div>
<div style="left:697px;top:154px;width:1px;height:56px;background:#3d4788;"></div>
<div style="left:0px;top:212px;width:705px;height:19px;background:#2c2c2c;"></div>
<div style="left:0px;top:223px;width:583px;height:2px;background:#a2cdf2;"></div>
<div style="left:584px;top:226px;width:121px;height:3px;background:#a2cdf2;"></div>
<div style="left:612px;top:219px;width:93px;height:3px;background:#a2cdf2;"></div>
<div style="left:612px;top:223px;width:93px;height:2px;background:#a2cdf2;"></div>
<div style="left:0px;top:233px;width:354px;height:56px;background:#58fce6;"></div>
<div style="left:0px;top:250px;width:354px;height:1px;background:#2a8f86;"></div>
<div style="left:12px;top:251px;width:1px;height:38px;background:#49d6c7"></div><div style="left:26px;top:251px;width:1px;height:38px;background:#49d6c7"></div><div style="left:41px;top:251px;width:1px;height:38px;background:#49d6c7"></div><div style="left:55px;top:251px;width:1px;height:38px;background:#49d6c7"></div><div style="left:69px;top:251px;width:1px;height:38px;background:#49d6c7"></div><div style="left:84px;top:251px;width:1px;height:38px;background:#49d6c7"></div><div style="left:98px;top:251px;width:1px;height:38px;background:#49d6c7"></div><div style="left:112px;top:251px;width:1px;height:38px;background:#49d6c7"></div><div style="left:126px;top:251px;width:1px;height:38px;background:#49d6c7"></div><div style="left:141px;top:251px;width:1px;height:38px;background:#49d6c7"></div><div style="left:155px;top:251px;width:1px;height:38px;background:#49d6c7"></div><div style="left:169px;top:251px;width:1px;height:38px;background:#49d6c7"></div><div style="left:184px;top:251px;width:1px;height:38px;background:#49d6c7"></div><div style="left:198px;top:251px;width:1px;height:38px;background:#49d6c7"></div><div style="left:212px;top:251px;width:1px;height:38px;background:#49d6c7"></div><div style="left:226px;top:251px;width:1px;height:38px;background:#49d6c7"></div><div style="left:241px;top:251px;width:1px;height:38px;background:#49d6c7"></div><div style="left:255px;top:251px;width:1px;height:38px;background:#49d6c7"></div><div style="left:269px;top:251px;width:1px;height:38px;background:#49d6c7"></div><div style="left:284px;top:251px;width:1px;height:38px;background:#49d6c7"></div><div style="left:298px;top:251px;width:1px;height:38px;background:#49d6c7"></div><div style="left:312px;top:251px;width:1px;height:38px;background:#49d6c7"></div><div style="left:327px;top:251px;width:1px;height:38px;background:#49d6c7"></div><div style="left:341px;top:251px;width:1px;height:38px;background:#49d6c7"></div>
<div style="left:55.5px;top:257px;width:2px;height:2px;background:#1c1f33"></div><div style="left:112.7px;top:257px;width:2px;height:2px;background:#1c1f33"></div><div style="left:169.9px;top:257px;width:2px;height:2px;background:#1c1f33"></div><div style="left:227.1px;top:257px;width:2px;height:2px;background:#1c1f33"></div><div style="left:284.3px;top:257px;width:2px;height:2px;background:#1c1f33"></div><div style="left:341.5px;top:257px;width:2px;height:2px;background:#1c1f33"></div><div style="left:11.5px;top:257px;width:6.5px;height:2px;background:#1c1f33"></div><div style="left:68.7px;top:257px;width:6.5px;height:2px;background:#1c1f33"></div><div style="left:125.9px;top:257px;width:6.5px;height:2px;background:#1c1f33"></div><div style="left:183.1px;top:257px;width:6.5px;height:2px;background:#1c1f33"></div><div style="left:240.3px;top:257px;width:6.5px;height:2px;background:#1c1f33"></div><div style="left:297.5px;top:257px;width:6.5px;height:2px;background:#1c1f33"></div><div style="left:5.0px;top:277px;width:6.5px;height:2px;background:#1c1f33"></div><div style="left:33.6px;top:277px;width:6.5px;height:2px;background:#1c1f33"></div><div style="left:62.2px;top:277px;width:6.5px;height:2px;background:#1c1f33"></div><div style="left:90.8px;top:277px;width:6.5px;height:2px;background:#1c1f33"></div><div style="left:119.4px;top:277px;width:6.5px;height:2px;background:#1c1f33"></div><div style="left:148.0px;top:277px;width:6.5px;height:2px;background:#1c1f33"></div><div style="left:176.6px;top:277px;width:6.5px;height:2px;background:#1c1f33"></div><div style="left:205.2px;top:277px;width:6.5px;height:2px;background:#1c1f33"></div><div style="left:233.8px;top:277px;width:6.5px;height:2px;background:#1c1f33"></div><div style="left:262.4px;top:277px;width:6.5px;height:2px;background:#1c1f33"></div><div style="left:291.0px;top:277px;width:6.5px;height:2px;background:#1c1f33"></div><div style="left:319.6px;top:277px;width:6.5px;height:2px;background:#1c1f33"></div><div style="left:22.5px;top:283px;width:6.5px;height:2px;background:#1c1f33"></div><div style="left:40.5px;top:283px;width:6.5px;height:2px;background:#1c1f33"></div><div style="left:79.7px;top:283px;width:6.5px;height:2px;background:#1c1f33"></div><div style="left:97.7px;top:283px;width:6.5px;height:2px;background:#1c1f33"></div><div style="left:136.9px;top:283px;width:6.5px;height:2px;background:#1c1f33"></div><div style="left:154.9px;top:283px;width:6.5px;height:2px;background:#1c1f33"></div><div style="left:194.1px;top:283px;width:6.5px;height:2px;background:#1c1f33"></div><div style="left:212.1px;top:283px;width:6.5px;height:2px;background:#1c1f33"></div><div style="left:251.3px;top:283px;width:6.5px;height:2px;background:#1c1f33"></div><div style="left:269.3px;top:283px;width:6.5px;height:2px;background:#1c1f33"></div><div style="left:308.5px;top:283px;width:6.5px;height:2px;background:#1c1f33"></div><div style="left:326.5px;top:283px;width:6.5px;height:2px;background:#1c1f33"></div>
<div style="left:126px;top:233px;width:1px;height:56px;background:#1f8a80;"></div>
<div style="left:584px;top:233px;width:121px;height:56px;background:#58fce6;"></div>
<div style="left:584px;top:250px;width:121px;height:1px;background:#2a8f86;"></div>
<div style="left:598px;top:251px;width:1px;height:38px;background:#49d6c7"></div><div style="left:613px;top:251px;width:1px;height:38px;background:#49d6c7"></div><div style="left:627px;top:251px;width:1px;height:38px;background:#49d6c7"></div><div style="left:641px;top:251px;width:1px;height:38px;background:#49d6c7"></div><div style="left:656px;top:251px;width:1px;height:38px;background:#49d6c7"></div><div style="left:670px;top:251px;width:1px;height:38px;background:#49d6c7"></div><div style="left:684px;top:251px;width:1px;height:38px;background:#49d6c7"></div><div style="left:698px;top:251px;width:1px;height:38px;background:#49d6c7"></div>
<div style="left:627.5px;top:257px;width:2px;height:2px;background:#1c1f33"></div><div style="left:684.7px;top:257px;width:2px;height:2px;background:#1c1f33"></div><div style="left:640.7px;top:257px;width:6.5px;height:2px;background:#1c1f33"></div><div style="left:605.6px;top:277px;width:6.5px;height:2px;background:#1c1f33"></div><div style="left:634.2px;top:277px;width:6.5px;height:2px;background:#1c1f33"></div><div style="left:662.8px;top:277px;width:6.5px;height:2px;background:#1c1f33"></div><div style="left:691.4px;top:277px;width:6.5px;height:2px;background:#1c1f33"></div><div style="left:594.5px;top:283px;width:6.5px;height:2px;background:#1c1f33"></div><div style="left:612.5px;top:283px;width:6.5px;height:2px;background:#1c1f33"></div><div style="left:651.7px;top:283px;width:6.5px;height:2px;background:#1c1f33"></div><div style="left:669.7px;top:283px;width:6.5px;height:2px;background:#1c1f33"></div>
<div style="left:97px;top:291px;width:29px;height:19px;background:#58fce6;"></div>
<div style="left:326px;top:291px;width:28px;height:19px;background:#58fce6;"></div>
<div style="left:0px;top:312px;width:126px;height:38px;background:#eafaa9;"></div>
<div style="left:0px;top:330px;width:126px;height:1px;background:#9aa060;"></div>
<div style="left:12px;top:331px;width:1px;height:19px;background:#c9d28a"></div><div style="left:26px;top:331px;width:1px;height:19px;background:#c9d28a"></div><div style="left:41px;top:331px;width:1px;height:19px;background:#c9d28a"></div><div style="left:55px;top:331px;width:1px;height:19px;background:#c9d28a"></div><div style="left:69px;top:331px;width:1px;height:19px;background:#c9d28a"></div><div style="left:84px;top:331px;width:1px;height:19px;background:#c9d28a"></div><div style="left:98px;top:331px;width:1px;height:19px;background:#c9d28a"></div><div style="left:112px;top:331px;width:1px;height:19px;background:#c9d28a"></div>
<div style="left:0px;top:336px;width:126px;height:7px;background:#1f2015;"></div>
<div style="left:0px;top:343px;width:126px;height:1px;background:#8d935a;"></div>
<div style="left:0px;top:352px;width:11px;height:56px;background:#f5f379;"></div>
<div style="left:0px;top:369px;width:11px;height:1px;background:#9a9548;"></div>
<div style="left:0px;top:379px;width:11px;height:1px;background:#9a9548;"></div>
<div style="left:0px;top:410px;width:705px;height:19px;background:#2c2c2c;"></div>
<div style="left:126px;top:412px;width:57px;height:4.5px;background:#f9a473;"></div>
<div style="left:240px;top:412px;width:343px;height:4.5px;background:#f9a473;"></div>
<div style="left:0px;top:417.5px;width:354px;height:4px;background:#f9a473;"></div>
<div style="left:0px;top:423px;width:354px;height:4.5px;background:#f9a473;"></div>
<div style="left:584px;top:418px;width:121px;height:4px;background:#f9a473;"></div>
<div style="left:12px;top:412px;width:1px;height:16px;background:rgba(120,60,20,0.25)"></div><div style="left:26px;top:412px;width:1px;height:16px;background:rgba(120,60,20,0.25)"></div><div style="left:41px;top:412px;width:1px;height:16px;background:rgba(120,60,20,0.25)"></div><div style="left:55px;top:412px;width:1px;height:16px;background:rgba(120,60,20,0.25)"></div><div style="left:69px;top:412px;width:1px;height:16px;background:rgba(120,60,20,0.25)"></div><div style="left:84px;top:412px;width:1px;height:16px;background:rgba(120,60,20,0.25)"></div><div style="left:98px;top:412px;width:1px;height:16px;background:rgba(120,60,20,0.25)"></div><div style="left:112px;top:412px;width:1px;height:16px;background:rgba(120,60,20,0.25)"></div><div style="left:126px;top:412px;width:1px;height:16px;background:rgba(120,60,20,0.25)"></div><div style="left:141px;top:412px;width:1px;height:16px;background:rgba(120,60,20,0.25)"></div><div style="left:155px;top:412px;width:1px;height:16px;background:rgba(120,60,20,0.25)"></div><div style="left:169px;top:412px;width:1px;height:16px;background:rgba(120,60,20,0.25)"></div><div style="left:184px;top:412px;width:1px;height:16px;background:rgba(120,60,20,0.25)"></div><div style="left:198px;top:412px;width:1px;height:16px;background:rgba(120,60,20,0.25)"></div><div style="left:212px;top:412px;width:1px;height:16px;background:rgba(120,60,20,0.25)"></div><div style="left:226px;top:412px;width:1px;height:16px;background:rgba(120,60,20,0.25)"></div><div style="left:241px;top:412px;width:1px;height:16px;background:rgba(120,60,20,0.25)"></div><div style="left:255px;top:412px;width:1px;height:16px;background:rgba(120,60,20,0.25)"></div><div style="left:269px;top:412px;width:1px;height:16px;background:rgba(120,60,20,0.25)"></div><div style="left:284px;top:412px;width:1px;height:16px;background:rgba(120,60,20,0.25)"></div><div style="left:298px;top:412px;width:1px;height:16px;background:rgba(120,60,20,0.25)"></div><div style="left:312px;top:412px;width:1px;height:16px;background:rgba(120,60,20,0.25)"></div><div style="left:327px;top:412px;width:1px;height:16px;background:rgba(120,60,20,0.25)"></div><div style="left:341px;top:412px;width:1px;height:16px;background:rgba(120,60,20,0.25)"></div><div style="left:355px;top:412px;width:1px;height:16px;background:rgba(120,60,20,0.25)"></div><div style="left:370px;top:412px;width:1px;height:16px;background:rgba(120,60,20,0.25)"></div><div style="left:384px;top:412px;width:1px;height:16px;background:rgba(120,60,20,0.25)"></div><div style="left:398px;top:412px;width:1px;height:16px;background:rgba(120,60,20,0.25)"></div><div style="left:412px;top:412px;width:1px;height:16px;background:rgba(120,60,20,0.25)"></div><div style="left:427px;top:412px;width:1px;height:16px;background:rgba(120,60,20,0.25)"></div><div style="left:441px;top:412px;width:1px;height:16px;background:rgba(120,60,20,0.25)"></div><div style="left:455px;top:412px;width:1px;height:16px;background:rgba(120,60,20,0.25)"></div><div style="left:470px;top:412px;width:1px;height:16px;background:rgba(120,60,20,0.25)"></div><div style="left:484px;top:412px;width:1px;height:16px;background:rgba(120,60,20,0.25)"></div><div style="left:498px;top:412px;width:1px;height:16px;background:rgba(120,60,20,0.25)"></div><div style="left:512px;top:412px;width:1px;height:16px;background:rgba(120,60,20,0.25)"></div><div style="left:527px;top:412px;width:1px;height:16px;background:rgba(120,60,20,0.25)"></div><div style="left:541px;top:412px;width:1px;height:16px;background:rgba(120,60,20,0.25)"></div><div style="left:555px;top:412px;width:1px;height:16px;background:rgba(120,60,20,0.25)"></div><div style="left:570px;top:412px;width:1px;height:16px;background:rgba(120,60,20,0.25)"></div><div style="left:584px;top:412px;width:1px;height:16px;background:rgba(120,60,20,0.25)"></div><div style="left:598px;top:412px;width:1px;height:16px;background:rgba(120,60,20,0.25)"></div><div style="left:613px;top:412px;width:1px;height:16px;background:rgba(120,60,20,0.25)"></div><div style="left:627px;top:412px;width:1px;height:16px;background:rgba(120,60,20,0.25)"></div><div style="left:641px;top:412px;width:1px;height:16px;background:rgba(120,60,20,0.25)"></div><div style="left:656px;top:412px;width:1px;height:16px;background:rgba(120,60,20,0.25)"></div><div style="left:670px;top:412px;width:1px;height:16px;background:rgba(120,60,20,0.25)"></div><div style="left:684px;top:412px;width:1px;height:16px;background:rgba(120,60,20,0.25)"></div><div style="left:698px;top:412px;width:1px;height:16px;background:rgba(120,60,20,0.25)"></div>
<div style="left:0px;top:431px;width:126px;height:56px;background:#fb919f;"></div>
<div style="left:0px;top:448px;width:126px;height:1px;background:#9a4f58;"></div>
<div style="left:12px;top:449px;width:1px;height:38px;background:#e37f8d"></div><div style="left:26px;top:449px;width:1px;height:38px;background:#e37f8d"></div><div style="left:41px;top:449px;width:1px;height:38px;background:#e37f8d"></div><div style="left:55px;top:449px;width:1px;height:38px;background:#e37f8d"></div><div style="left:69px;top:449px;width:1px;height:38px;background:#e37f8d"></div><div style="left:84px;top:449px;width:1px;height:38px;background:#e37f8d"></div><div style="left:98px;top:449px;width:1px;height:38px;background:#e37f8d"></div><div style="left:112px;top:449px;width:1px;height:38px;background:#e37f8d"></div>
<svg style="left:102px;top:449px" width="24" height="38"><polygon points="0,0 24,0 24,38" fill="#d97d89" opacity="0.8"/></svg>
<div style="left:0px;top:457px;width:126px;height:1.8px;background:#3a1a20;"></div>
<div style="left:0px;top:477px;width:126px;height:1.8px;background:#3a1a20;"></div>
<div style="left:354px;top:431px;width:229px;height:56px;background:#fb919f;"></div>
<div style="left:354px;top:448px;width:229px;height:1px;background:#9a4f58;"></div>
<div style="left:355px;top:449px;width:1px;height:38px;background:#e37f8d"></div><div style="left:370px;top:449px;width:1px;height:38px;background:#e37f8d"></div><div style="left:384px;top:449px;width:1px;height:38px;background:#e37f8d"></div><div style="left:398px;top:449px;width:1px;height:38px;background:#e37f8d"></div><div style="left:412px;top:449px;width:1px;height:38px;background:#e37f8d"></div><div style="left:427px;top:449px;width:1px;height:38px;background:#e37f8d"></div><div style="left:441px;top:449px;width:1px;height:38px;background:#e37f8d"></div><div style="left:455px;top:449px;width:1px;height:38px;background:#e37f8d"></div><div style="left:470px;top:449px;width:1px;height:38px;background:#e37f8d"></div><div style="left:484px;top:449px;width:1px;height:38px;background:#e37f8d"></div><div style="left:498px;top:449px;width:1px;height:38px;background:#e37f8d"></div><div style="left:512px;top:449px;width:1px;height:38px;background:#e37f8d"></div><div style="left:527px;top:449px;width:1px;height:38px;background:#e37f8d"></div><div style="left:541px;top:449px;width:1px;height:38px;background:#e37f8d"></div><div style="left:555px;top:449px;width:1px;height:38px;background:#e37f8d"></div><div style="left:570px;top:449px;width:1px;height:38px;background:#e37f8d"></div>
<svg style="left:559px;top:449px" width="24" height="38"><polygon points="0,0 24,0 24,38" fill="#d97d89" opacity="0.8"/></svg>
<div style="left:354px;top:457px;width:229px;height:1.8px;background:#3a1a20;"></div>
<div style="left:354px;top:477px;width:229px;height:1.8px;background:#3a1a20;"></div>
<div style="left:11px;top:489px;width:115px;height:19px;background:#fb919f;"></div>
<svg style="left:11px;top:489px" width="40" height="19"><polygon points="0,0 0,19 40,0" fill="#d97d89" opacity="0.8"/></svg>
<svg style="left:116px;top:489px" width="10" height="19"><polygon points="0,0 10,0 10,19" fill="#d97d89" opacity="0.8"/></svg>
<div style="left:334px;top:489px;width:20px;height:19px;background:#fb919f;"></div>
<svg style="left:334px;top:489px" width="10" height="19"><polygon points="0,0 0,19 10,0" fill="#d97d89" opacity="0.8"/></svg>
<svg style="left:344px;top:489px" width="10" height="19"><polygon points="0,0 10,0 10,19" fill="#d97d89" opacity="0.8"/></svg>
<div style="left:469px;top:489px;width:114px;height:19px;background:#fb919f;"></div>
<svg style="left:469px;top:489px" width="40" height="19"><polygon points="0,0 0,19 40,0" fill="#d97d89" opacity="0.8"/></svg>
<svg style="left:569px;top:489px" width="14" height="19"><polygon points="0,0 14,0 14,19" fill="#d97d89" opacity="0.8"/></svg>
<div style="left:11px;top:510px;width:115px;height:18px;background:#d46de3;"></div>
<div style="left:469px;top:510px;width:114px;height:18px;background:#d46de3;"></div>
<div style="left:0px;top:531px;width:126px;height:18px;background:#d46de3;"></div>
<div style="left:76px;top:95px;width:1px;height:501px;background:#dcdcdc;"></div>
<div style="left:76px;top:96px;width:1px;height:56px;background:#27306e;"></div>
<div style="left:76px;top:154px;width:1px;height:56px;background:#2a3a8a;"></div>
<div style="left:76px;top:233px;width:1px;height:56px;background:#0f6a60;"></div>
<div style="left:76px;top:312px;width:1px;height:38px;background:#6a7040;"></div>
<div style="left:76px;top:431px;width:1px;height:56px;background:#8a3a48;"></div>
<div style="left:76px;top:489px;width:1px;height:19px;background:#8a3a48;"></div>
<div style="left:76px;top:510px;width:1px;height:18px;background:#5a1a66;"></div>
<div style="left:76px;top:531px;width:1px;height:18px;background:#5a1a66;"></div>
<div style="left:670px;top:573px;font-size:23px;color:#707070;font-weight:bold;line-height:25px;letter-spacing:-1px">1/2</div>
<div style="left:705px;top:93px;width:245px;height:504px;background:#262626;"></div>
<div style="left:819px;top:95px;width:131px;height:502px;background:#333333;"></div>
<div style="left:707px;top:96px;width:111px;height:56px;background:#92a6fd;"></div>
<svg style="left:709px;top:97.5px" width="16" height="16"><circle cx="8" cy="8" r="6.8" fill="none" stroke="#1f2660" stroke-width="1.4"/><polygon points="4.2,5.8 11.8,5.8 8,11" fill="#1f2660"/></svg>
<div style="left:732px;top:98.5px;font-size:11px;color:#1f2660;font-weight:bold;line-height:15px;">Drums</div>
<div style="left:823px;top:99px;width:48px;height:13px;background:#fba94e;"></div>
<div style="left:823px;top:98px;font-size:12px;color:#1a1a1a;font-weight:bold;width:48px;text-align:center;line-height:15px;">1</div>
<div style="left:877px;top:98px;width:22px;height:15px;background:#1f1f1f;"></div>
<div style="left:877px;top:97.8px;font-size:12.5px;color:#d0d0d0;font-weight:bold;width:22px;text-align:center;line-height:15px;">S</div>
<div style="left:904px;top:98px;width:22px;height:15px;background:#1f1f1f;"></div>
<svg style="left:909px;top:99px" width="12" height="12"><circle cx="6" cy="6" r="4.4" fill="#cfcfcf"/><path d="M6.8 2.6 V7 L4.6 8.2" fill="none" stroke="#1e1e1e" stroke-width="1.3"/></svg>
<div style="left:823px;top:117px;width:48px;height:13px;background:#1f1f1f;"></div>
<div style="left:823px;top:117px;width:39px;height:13px;background:#17879a;"></div>
<div style="left:823px;top:117px;font-size:12px;color:#d8d8d8;font-weight:normal;-webkit-text-stroke:0.3px #d8d8d8;width:48px;text-align:center;line-height:15px;">-1.0</div>
<div style="left:877px;top:117px;width:49px;height:13px;background:#1f1f1f;"></div>
<div style="left:877px;top:117px;font-size:12px;color:#cfcfcf;font-weight:normal;-webkit-text-stroke:0.3px #cfcfcf;width:49px;text-align:center;line-height:15px;">C</div>
<div style="left:823px;top:135px;width:32px;height:14px;background:#1f1f1f;"></div>
<div style="left:823px;top:134px;font-size:12px;color:#cfcfcf;font-weight:normal;-webkit-text-stroke:0.3px #cfcfcf;width:32px;text-align:center;line-height:16px;">-52.8</div>
<svg style="left:823.3px;top:133.8px" width="4.4" height="4.4"><circle cx="2.2" cy="2.2" r="2.2" fill="#e04848"/></svg>
<div style="left:858px;top:135px;width:33px;height:14px;background:#1f1f1f;"></div>
<div style="left:858px;top:134px;font-size:12px;color:#cfcfcf;font-weight:normal;-webkit-text-stroke:0.3px #cfcfcf;width:33px;text-align:center;line-height:16px;">-<span style="font-size:17px;position:relative;top:1px">∞</span></div>
<svg style="left:858.3px;top:133.8px" width="4.4" height="4.4"><circle cx="2.2" cy="2.2" r="2.2" fill="#e04848"/></svg>
<div style="left:930px;top:98px;width:3.5px;height:52px;background:#1c1c1c;"></div>
<div style="left:934.5px;top:98px;width:3.5px;height:52px;background:#1c1c1c;"></div>
<div style="left:930px;top:124px;width:3.5px;height:26px;background:#22e65c;"></div>
<div style="left:934.5px;top:124px;width:3.5px;height:26px;background:#22e65c;"></div>
<div style="left:930px;top:108px;width:3.5px;height:1.2px;background:#c9c040;"></div>
<div style="left:934.5px;top:108px;width:3.5px;height:1.2px;background:#c9c040;"></div>
<div style="left:819px;top:152px;width:131px;height:2px;background:#262626;"></div>
<div style="left:707px;top:154px;width:111px;height:56px;background:#92a6fd;"></div>
<svg style="left:709px;top:155.5px" width="16" height="16"><circle cx="8" cy="8" r="6.8" fill="none" stroke="#1f2660" stroke-width="1.4"/><polygon points="4.2,5.8 11.8,5.8 8,11" fill="#1f2660"/></svg>
<div style="left:732px;top:156.5px;font-size:11px;color:#1f2660;font-weight:bold;line-height:15px;">Breaks</div>
<div style="left:823px;top:157px;width:48px;height:13px;background:#fba94e;"></div>
<div style="left:823px;top:156px;font-size:12px;color:#1a1a1a;font-weight:bold;width:48px;text-align:center;line-height:15px;">2</div>
<div style="left:877px;top:156px;width:22px;height:15px;background:#1f1f1f;"></div>
<div style="left:877px;top:155.8px;font-size:12.5px;color:#d0d0d0;font-weight:bold;width:22px;text-align:center;line-height:15px;">S</div>
<div style="left:904px;top:156px;width:22px;height:15px;background:#1f1f1f;"></div>
<svg style="left:911px;top:159.5px" width="8" height="8"><circle cx="4" cy="4" r="4" fill="#6e6e6e"/></svg>
<div style="left:823px;top:175px;width:48px;height:13px;background:#1f1f1f;"></div>
<div style="left:823px;top:175px;width:30px;height:13px;background:#17879a;"></div>
<div style="left:823px;top:175px;font-size:12px;color:#d8d8d8;font-weight:normal;-webkit-text-stroke:0.3px #d8d8d8;width:48px;text-align:center;line-height:15px;">-9.4</div>
<div style="left:877px;top:175px;width:49px;height:13px;background:#1f1f1f;"></div>
<div style="left:877px;top:175px;font-size:12px;color:#cfcfcf;font-weight:normal;-webkit-text-stroke:0.3px #cfcfcf;width:49px;text-align:center;line-height:15px;">C</div>
<div style="left:823px;top:193px;width:32px;height:14px;background:#1f1f1f;"></div>
<div style="left:823px;top:192px;font-size:12px;color:#cfcfcf;font-weight:normal;-webkit-text-stroke:0.3px #cfcfcf;width:32px;text-align:center;line-height:16px;">-<span style="font-size:17px;position:relative;top:1px">∞</span></div>
<svg style="left:823.3px;top:191.8px" width="4.4" height="4.4"><circle cx="2.2" cy="2.2" r="2.2" fill="#e04848"/></svg>
<div style="left:858px;top:193px;width:33px;height:14px;background:#1f1f1f;"></div>
<div style="left:858px;top:192px;font-size:12px;color:#cfcfcf;font-weight:normal;-webkit-text-stroke:0.3px #cfcfcf;width:33px;text-align:center;line-height:16px;">-<span style="font-size:17px;position:relative;top:1px">∞</span></div>
<div style="left:930px;top:156px;width:3.5px;height:52px;background:#1c1c1c;"></div>
<div style="left:934.5px;top:156px;width:3.5px;height:52px;background:#1c1c1c;"></div>
<div style="left:930px;top:170px;width:3.5px;height:38px;background:#22e65c;"></div>
<div style="left:934.5px;top:170px;width:3.5px;height:38px;background:#22e65c;"></div>
<div style="left:819px;top:210px;width:131px;height:2px;background:#262626;"></div>
<div style="left:707px;top:212px;width:111px;height:19px;background:#8fc9f8;"></div>
<svg style="left:709px;top:213.5px" width="16" height="16"><circle cx="8" cy="8" r="6.8" fill="none" stroke="#163050" stroke-width="1.4"/><rect x="5.2" y="4.9" width="5.6" height="1" fill="#163050"/><rect x="5.2" y="7.5" width="5.6" height="1" fill="#163050"/><rect x="5.2" y="10.1" width="5.6" height="1" fill="#163050"/></svg>
<div style="left:732px;top:214.5px;font-size:11px;color:#163050;font-weight:bold;line-height:15px;">Percussion</div>
<div style="left:823px;top:215px;width:48px;height:13px;background:#fba94e;"></div>
<div style="left:823px;top:214px;font-size:12px;color:#1a1a1a;font-weight:bold;width:48px;text-align:center;line-height:15px;">3</div>
<div style="left:877px;top:214px;width:22px;height:15px;background:#1f1f1f;"></div>
<div style="left:877px;top:213.8px;font-size:12.5px;color:#d0d0d0;font-weight:bold;width:22px;text-align:center;line-height:15px;">S</div>
<div style="left:930px;top:214px;width:3.5px;height:15px;background:#1c1c1c;"></div>
<div style="left:934.5px;top:214px;width:3.5px;height:15px;background:#1c1c1c;"></div>
<div style="left:930px;top:226px;width:3.5px;height:3px;background:#22e65c;"></div>
<div style="left:934.5px;top:226px;width:3.5px;height:3px;background:#22e65c;"></div>
<div style="left:930px;top:222px;width:3.5px;height:1.2px;background:#c9c040;"></div>
<div style="left:934.5px;top:222px;width:3.5px;height:1.2px;background:#c9c040;"></div>
<div style="left:819px;top:231px;width:131px;height:2px;background:#262626;"></div>
<div style="left:707px;top:233px;width:111px;height:56px;background:#58fce6;"></div>
<svg style="left:709px;top:234.5px" width="16" height="16"><circle cx="8" cy="8" r="6.8" fill="none" stroke="#0f4a44" stroke-width="1.4"/><polygon points="4.2,5.8 11.8,5.8 8,11" fill="#0f4a44"/></svg>
<div style="left:732px;top:235.5px;font-size:11px;color:#0f4a44;font-weight:bold;line-height:15px;">Bass</div>
<div style="left:823px;top:236px;width:48px;height:13px;background:#fba94e;"></div>
<div style="left:823px;top:235px;font-size:12px;color:#1a1a1a;font-weight:bold;width:48px;text-align:center;line-height:15px;">8</div>
<div style="left:877px;top:235px;width:22px;height:15px;background:#1f1f1f;"></div>
<div style="left:877px;top:234.8px;font-size:12.5px;color:#d0d0d0;font-weight:bold;width:22px;text-align:center;line-height:15px;">S</div>
<div style="left:904px;top:235px;width:22px;height:15px;background:#1f1f1f;"></div>
<svg style="left:909px;top:236px" width="12" height="12"><circle cx="6" cy="6" r="4.4" fill="#cfcfcf"/><path d="M6.8 2.6 V7 L4.6 8.2" fill="none" stroke="#1e1e1e" stroke-width="1.3"/></svg>
<div style="left:823px;top:254px;width:48px;height:13px;background:#1f1f1f;"></div>
<div style="left:823px;top:254px;width:33px;height:13px;background:#17879a;"></div>
<div style="left:823px;top:254px;font-size:12px;color:#d8d8d8;font-weight:normal;-webkit-text-stroke:0.3px #d8d8d8;width:48px;text-align:center;line-height:15px;">-7.7</div>
<div style="left:877px;top:254px;width:49px;height:13px;background:#1f1f1f;"></div>
<div style="left:877px;top:254px;font-size:12px;color:#cfcfcf;font-weight:normal;-webkit-text-stroke:0.3px #cfcfcf;width:49px;text-align:center;line-height:15px;">C</div>
<div style="left:823px;top:272px;width:32px;height:14px;background:#1f1f1f;"></div>
<div style="left:823px;top:271px;font-size:12px;color:#cfcfcf;font-weight:normal;-webkit-text-stroke:0.3px #cfcfcf;width:32px;text-align:center;line-height:16px;">-<span style="font-size:17px;position:relative;top:1px">∞</span></div>
<div style="left:858px;top:272px;width:33px;height:14px;background:#1f1f1f;"></div>
<div style="left:858px;top:271px;font-size:12px;color:#cfcfcf;font-weight:normal;-webkit-text-stroke:0.3px #cfcfcf;width:33px;text-align:center;line-height:16px;">-<span style="font-size:17px;position:relative;top:1px">∞</span></div>
<div style="left:930px;top:235px;width:3.5px;height:52px;background:#1c1c1c;"></div>
<div style="left:934.5px;top:235px;width:3.5px;height:52px;background:#1c1c1c;"></div>
<div style="left:930px;top:258px;width:3.5px;height:29px;background:#22e65c;"></div>
<div style="left:934.5px;top:258px;width:3.5px;height:29px;background:#22e65c;"></div>
<div style="left:930px;top:249px;width:3.5px;height:1.2px;background:#c9c040;"></div>
<div style="left:934.5px;top:249px;width:3.5px;height:1.2px;background:#c9c040;"></div>
<div style="left:819px;top:289px;width:131px;height:2px;background:#262626;"></div>
<div style="left:707px;top:291px;width:111px;height:19px;background:#58fce6;"></div>
<svg style="left:709px;top:292.5px" width="16" height="16"><circle cx="8" cy="8" r="6.8" fill="none" stroke="#0f4a44" stroke-width="1.4"/><polygon points="5.8,4.2 5.8,11.8 11.2,8" fill="#0f4a44"/></svg>
<div style="left:732px;top:293.5px;font-size:11px;color:#0f4a44;font-weight:bold;line-height:15px;">Bass Drop</div>
<div style="left:823px;top:294px;width:48px;height:13px;background:#fba94e;"></div>
<div style="left:823px;top:293px;font-size:12px;color:#1a1a1a;font-weight:bold;width:48px;text-align:center;line-height:15px;">9</div>
<div style="left:877px;top:293px;width:22px;height:15px;background:#1f1f1f;"></div>
<div style="left:877px;top:292.8px;font-size:12.5px;color:#d0d0d0;font-weight:bold;width:22px;text-align:center;line-height:15px;">S</div>
<div style="left:904px;top:293px;width:22px;height:15px;background:#1f1f1f;"></div>
<svg style="left:909px;top:294px" width="12" height="12"><circle cx="6" cy="6" r="4.4" fill="#cfcfcf"/><path d="M6.8 2.6 V7 L4.6 8.2" fill="none" stroke="#1e1e1e" stroke-width="1.3"/></svg>
<div style="left:930px;top:293px;width:3.5px;height:15px;background:#1c1c1c;"></div>
<div style="left:934.5px;top:293px;width:3.5px;height:15px;background:#1c1c1c;"></div>
<div style="left:819px;top:310px;width:131px;height:2px;background:#262626;"></div>
<div style="left:707px;top:312px;width:111px;height:38px;background:#eafaa9;"></div>
<svg style="left:709px;top:313.5px" width="16" height="16"><circle cx="8" cy="8" r="6.8" fill="none" stroke="#3a3c18" stroke-width="1.4"/><polygon points="4.2,5.8 11.8,5.8 8,11" fill="#3a3c18"/></svg>
<div style="left:732px;top:314.5px;font-size:11px;color:#3a3c18;font-weight:bold;line-height:15px;">Synth Riser</div>
<div style="left:823px;top:315px;width:48px;height:13px;background:#fba94e;"></div>
<div style="left:823px;top:314px;font-size:12px;color:#1a1a1a;font-weight:bold;width:48px;text-align:center;line-height:15px;">10</div>
<div style="left:877px;top:314px;width:22px;height:15px;background:#1f1f1f;"></div>
<div style="left:877px;top:313.8px;font-size:12.5px;color:#d0d0d0;font-weight:bold;width:22px;text-align:center;line-height:15px;">S</div>
<div style="left:904px;top:314px;width:22px;height:15px;background:#1f1f1f;"></div>
<svg style="left:909px;top:315px" width="12" height="12"><circle cx="6" cy="6" r="4.4" fill="#cfcfcf"/><path d="M6.8 2.6 V7 L4.6 8.2" fill="none" stroke="#1e1e1e" stroke-width="1.3"/></svg>
<div style="left:823px;top:333px;width:48px;height:13px;background:#1f1f1f;"></div>
<div style="left:823px;top:333px;width:20px;height:13px;background:#17879a;"></div>
<div style="left:823px;top:333px;font-size:12px;color:#d8d8d8;font-weight:normal;-webkit-text-stroke:0.3px #d8d8d8;width:48px;text-align:center;line-height:15px;">-18.0</div>
<div style="left:877px;top:333px;width:49px;height:13px;background:#1f1f1f;"></div>
<div style="left:877px;top:333px;font-size:12px;color:#cfcfcf;font-weight:normal;-webkit-text-stroke:0.3px #cfcfcf;width:49px;text-align:center;line-height:15px;">C</div>
<div style="left:930px;top:314px;width:3.5px;height:34px;background:#1c1c1c;"></div>
<div style="left:934.5px;top:314px;width:3.5px;height:34px;background:#1c1c1c;"></div>
<div style="left:930px;top:332px;width:3.5px;height:15px;background:#22e65c;"></div>
<div style="left:934.5px;top:332px;width:3.5px;height:15px;background:#22e65c;"></div>
<div style="left:930px;top:332px;width:3.5px;height:1.2px;background:#c9c040;"></div>
<div style="left:934.5px;top:332px;width:3.5px;height:1.2px;background:#c9c040;"></div>
<div style="left:819px;top:350px;width:131px;height:2px;background:#262626;"></div>
<div style="left:707px;top:352px;width:111px;height:56px;background:#f5f379;"></div>
<svg style="left:709px;top:353.5px" width="16" height="16"><circle cx="8" cy="8" r="6.8" fill="none" stroke="#3d3a10" stroke-width="1.4"/><polygon points="4.2,5.8 11.8,5.8 8,11" fill="#3d3a10"/></svg>
<div style="left:732px;top:354.5px;font-size:11px;color:#3d3a10;font-weight:bold;line-height:15px;">Keys</div>
<div style="left:823px;top:355px;width:48px;height:13px;background:#fba94e;"></div>
<div style="left:823px;top:354px;font-size:12px;color:#1a1a1a;font-weight:bold;width:48px;text-align:center;line-height:15px;">11</div>
<div style="left:877px;top:354px;width:22px;height:15px;background:#1f1f1f;"></div>
<div style="left:877px;top:353.8px;font-size:12.5px;color:#d0d0d0;font-weight:bold;width:22px;text-align:center;line-height:15px;">S</div>
<div style="left:904px;top:354px;width:22px;height:15px;background:#1f1f1f;"></div>
<svg style="left:909px;top:355px" width="12" height="12"><circle cx="6" cy="6" r="4.4" fill="#cfcfcf"/><path d="M6.8 2.6 V7 L4.6 8.2" fill="none" stroke="#1e1e1e" stroke-width="1.3"/></svg>
<div style="left:823px;top:373px;width:48px;height:13px;background:#1f1f1f;"></div>
<div style="left:823px;top:373px;width:34px;height:13px;background:#17879a;"></div>
<div style="left:823px;top:373px;font-size:12px;color:#d8d8d8;font-weight:normal;-webkit-text-stroke:0.3px #d8d8d8;width:48px;text-align:center;line-height:15px;">-6.6</div>
<div style="left:877px;top:373px;width:49px;height:13px;background:#1f1f1f;"></div>
<div style="left:877px;top:373px;font-size:12px;color:#cfcfcf;font-weight:normal;-webkit-text-stroke:0.3px #cfcfcf;width:49px;text-align:center;line-height:15px;">C</div>
<div style="left:823px;top:391px;width:32px;height:14px;background:#1f1f1f;"></div>
<div style="left:823px;top:390px;font-size:12px;color:#cfcfcf;font-weight:normal;-webkit-text-stroke:0.3px #cfcfcf;width:32px;text-align:center;line-height:16px;">-<span style="font-size:17px;position:relative;top:1px">∞</span></div>
<div style="left:858px;top:391px;width:33px;height:14px;background:#1f1f1f;"></div>
<div style="left:858px;top:390px;font-size:12px;color:#cfcfcf;font-weight:normal;-webkit-text-stroke:0.3px #cfcfcf;width:33px;text-align:center;line-height:16px;">-<span style="font-size:17px;position:relative;top:1px">∞</span></div>
<div style="left:930px;top:354px;width:3.5px;height:52px;background:#1c1c1c;"></div>
<div style="left:934.5px;top:354px;width:3.5px;height:52px;background:#1c1c1c;"></div>
<div style="left:930px;top:405px;width:3.5px;height:2px;background:#22e65c;"></div>
<div style="left:934.5px;top:405px;width:3.5px;height:2px;background:#22e65c;"></div>
<div style="left:930px;top:372px;width:3.5px;height:1.2px;background:#c9c040;"></div>
<div style="left:934.5px;top:372px;width:3.5px;height:1.2px;background:#c9c040;"></div>
<div style="left:819px;top:408px;width:131px;height:2px;background:#262626;"></div>
<div style="left:707px;top:410px;width:111px;height:19px;background:#f9a473;"></div>
<svg style="left:709px;top:411.5px" width="16" height="16"><circle cx="8" cy="8" r="6.8" fill="none" stroke="#4a2a12" stroke-width="1.4"/><rect x="5.2" y="4.9" width="5.6" height="1" fill="#4a2a12"/><rect x="5.2" y="7.5" width="5.6" height="1" fill="#4a2a12"/><rect x="5.2" y="10.1" width="5.6" height="1" fill="#4a2a12"/></svg>
<div style="left:732px;top:412.5px;font-size:11px;color:#4a2a12;font-weight:bold;line-height:15px;">Pads</div>
<div style="left:823px;top:413px;width:48px;height:13px;background:#fba94e;"></div>
<div style="left:823px;top:412px;font-size:12px;color:#1a1a1a;font-weight:bold;width:48px;text-align:center;line-height:15px;">12</div>
<div style="left:877px;top:412px;width:22px;height:15px;background:#1f1f1f;"></div>
<div style="left:877px;top:411.8px;font-size:12.5px;color:#d0d0d0;font-weight:bold;width:22px;text-align:center;line-height:15px;">S</div>
<div style="left:930px;top:412px;width:3.5px;height:15px;background:#1c1c1c;"></div>
<div style="left:934.5px;top:412px;width:3.5px;height:15px;background:#1c1c1c;"></div>
<div style="left:930px;top:422px;width:3.5px;height:5px;background:#22e65c;"></div>
<div style="left:934.5px;top:422px;width:3.5px;height:5px;background:#22e65c;"></div>
<div style="left:930px;top:419px;width:3.5px;height:1.2px;background:#c9c040;"></div>
<div style="left:934.5px;top:419px;width:3.5px;height:1.2px;background:#c9c040;"></div>
<div style="left:819px;top:429px;width:131px;height:2px;background:#262626;"></div>
<div style="left:707px;top:431px;width:111px;height:56px;background:#fb919f;"></div>
<svg style="left:709px;top:432.5px" width="16" height="16"><circle cx="8" cy="8" r="6.8" fill="none" stroke="#4e1f28" stroke-width="1.4"/><polygon points="4.2,5.8 11.8,5.8 8,11" fill="#4e1f28"/></svg>
<div style="left:732px;top:433.5px;font-size:11px;color:#4e1f28;font-weight:bold;line-height:15px;">Ambience</div>
<div style="left:823px;top:434px;width:48px;height:13px;background:#fba94e;"></div>
<div style="left:823px;top:433px;font-size:12px;color:#1a1a1a;font-weight:bold;width:48px;text-align:center;line-height:15px;">16</div>
<div style="left:877px;top:433px;width:22px;height:15px;background:#1f1f1f;"></div>
<div style="left:877px;top:432.8px;font-size:12.5px;color:#d0d0d0;font-weight:bold;width:22px;text-align:center;line-height:15px;">S</div>
<div style="left:904px;top:433px;width:22px;height:15px;background:#1f1f1f;"></div>
<svg style="left:911px;top:436.5px" width="8" height="8"><circle cx="4" cy="4" r="4" fill="#6e6e6e"/></svg>
<div style="left:823px;top:452px;width:48px;height:13px;background:#1f1f1f;"></div>
<div style="left:823px;top:452px;width:35px;height:13px;background:#17879a;"></div>
<div style="left:823px;top:452px;font-size:12px;color:#d8d8d8;font-weight:normal;-webkit-text-stroke:0.3px #d8d8d8;width:48px;text-align:center;line-height:15px;">-8.3</div>
<div style="left:877px;top:452px;width:49px;height:13px;background:#1f1f1f;"></div>
<div style="left:877px;top:452px;font-size:12px;color:#cfcfcf;font-weight:normal;-webkit-text-stroke:0.3px #cfcfcf;width:49px;text-align:center;line-height:15px;">C</div>
<div style="left:823px;top:470px;width:32px;height:14px;background:#1f1f1f;"></div>
<div style="left:823px;top:469px;font-size:12px;color:#cfcfcf;font-weight:normal;-webkit-text-stroke:0.3px #cfcfcf;width:32px;text-align:center;line-height:16px;">-<span style="font-size:17px;position:relative;top:1px">∞</span></div>
<div style="left:858px;top:470px;width:33px;height:14px;background:#1f1f1f;"></div>
<div style="left:858px;top:469px;font-size:12px;color:#cfcfcf;font-weight:normal;-webkit-text-stroke:0.3px #cfcfcf;width:33px;text-align:center;line-height:16px;">-<span style="font-size:17px;position:relative;top:1px">∞</span></div>
<div style="left:930px;top:433px;width:3.5px;height:52px;background:#1c1c1c;"></div>
<div style="left:934.5px;top:433px;width:3.5px;height:52px;background:#1c1c1c;"></div>
<div style="left:930px;top:455px;width:3.5px;height:30px;background:#22e65c;"></div>
<div style="left:934.5px;top:455px;width:3.5px;height:30px;background:#22e65c;"></div>
<div style="left:930px;top:449px;width:3.5px;height:1.2px;background:#c9c040;"></div>
<div style="left:934.5px;top:449px;width:3.5px;height:1.2px;background:#c9c040;"></div>
<div style="left:819px;top:487px;width:131px;height:2px;background:#262626;"></div>
<div style="left:707px;top:489px;width:111px;height:19px;background:#fb919f;"></div>
<svg style="left:709px;top:490.5px" width="16" height="16"><circle cx="8" cy="8" r="6.8" fill="none" stroke="#4e1f28" stroke-width="1.4"/><polygon points="5.8,4.2 5.8,11.8 11.2,8" fill="#4e1f28"/></svg>
<div style="left:732px;top:491.5px;font-size:11px;color:#4e1f28;font-weight:bold;line-height:15px;">Drone</div>
<div style="left:823px;top:492px;width:48px;height:13px;background:#fba94e;"></div>
<div style="left:823px;top:491px;font-size:12px;color:#1a1a1a;font-weight:bold;width:48px;text-align:center;line-height:15px;">17</div>
<div style="left:877px;top:491px;width:22px;height:15px;background:#1f1f1f;"></div>
<div style="left:877px;top:490.8px;font-size:12.5px;color:#d0d0d0;font-weight:bold;width:22px;text-align:center;line-height:15px;">S</div>
<div style="left:904px;top:491px;width:22px;height:15px;background:#1f1f1f;"></div>
<svg style="left:911px;top:494.5px" width="8" height="8"><circle cx="4" cy="4" r="4" fill="#6e6e6e"/></svg>
<div style="left:930px;top:491px;width:3.5px;height:15px;background:#1c1c1c;"></div>
<div style="left:934.5px;top:491px;width:3.5px;height:15px;background:#1c1c1c;"></div>
<div style="left:930px;top:500px;width:3.5px;height:7px;background:#22e65c;"></div>
<div style="left:934.5px;top:500px;width:3.5px;height:7px;background:#22e65c;"></div>
<div style="left:819px;top:508px;width:131px;height:2px;background:#262626;"></div>
<div style="left:707px;top:510px;width:111px;height:19px;background:#d46de3;"></div>
<svg style="left:709px;top:511.5px" width="16" height="16"><circle cx="8" cy="8" r="6.8" fill="none" stroke="#3c1044" stroke-width="1.4"/><polygon points="5.8,4.2 5.8,11.8 11.2,8" fill="#3c1044"/></svg>
<div style="left:732px;top:512.5px;font-size:11px;color:#3c1044;font-weight:bold;line-height:15px;">FX</div>
<div style="left:823px;top:513px;width:48px;height:13px;background:#fba94e;"></div>
<div style="left:823px;top:512px;font-size:12px;color:#1a1a1a;font-weight:bold;width:48px;text-align:center;line-height:15px;">18</div>
<div style="left:877px;top:512px;width:22px;height:15px;background:#1f1f1f;"></div>
<div style="left:877px;top:511.8px;font-size:12.5px;color:#d0d0d0;font-weight:bold;width:22px;text-align:center;line-height:15px;">S</div>
<div style="left:904px;top:512px;width:22px;height:15px;background:#1f1f1f;"></div>
<svg style="left:911px;top:515.5px" width="8" height="8"><circle cx="4" cy="4" r="4" fill="#6e6e6e"/></svg>
<div style="left:930px;top:512px;width:3.5px;height:15px;background:#1c1c1c;"></div>
<div style="left:934.5px;top:512px;width:3.5px;height:15px;background:#1c1c1c;"></div>
<div style="left:930px;top:521px;width:3.5px;height:7px;background:#22e65c;"></div>
<div style="left:934.5px;top:521px;width:3.5px;height:7px;background:#22e65c;"></div>
<div style="left:819px;top:529px;width:131px;height:2px;background:#262626;"></div>
<div style="left:707px;top:531px;width:111px;height:19px;background:#d46de3;"></div>
<svg style="left:709px;top:532.5px" width="16" height="16"><circle cx="8" cy="8" r="6.8" fill="none" stroke="#3c1044" stroke-width="1.4"/><polygon points="5.8,4.2 5.8,11.8 11.2,8" fill="#3c1044"/></svg>
<div style="left:732px;top:533.5px;font-size:11px;color:#3c1044;font-weight:bold;line-height:15px;">Zap</div>
<div style="left:823px;top:534px;width:48px;height:13px;background:#fba94e;"></div>
<div style="left:823px;top:533px;font-size:12px;color:#1a1a1a;font-weight:bold;width:48px;text-align:center;line-height:15px;">19</div>
<div style="left:877px;top:533px;width:22px;height:15px;background:#1f1f1f;"></div>
<div style="left:877px;top:532.8px;font-size:12.5px;color:#d0d0d0;font-weight:bold;width:22px;text-align:center;line-height:15px;">S</div>
<div style="left:904px;top:533px;width:22px;height:15px;background:#1f1f1f;"></div>
<svg style="left:909px;top:534px" width="12" height="12"><circle cx="6" cy="6" r="4.4" fill="#cfcfcf"/><path d="M6.8 2.6 V7 L4.6 8.2" fill="none" stroke="#1e1e1e" stroke-width="1.3"/></svg>
<div style="left:930px;top:533px;width:3.5px;height:15px;background:#1c1c1c;"></div>
<div style="left:934.5px;top:533px;width:3.5px;height:15px;background:#1c1c1c;"></div>
<div style="left:930px;top:542px;width:3.5px;height:7px;background:#22e65c;"></div>
<div style="left:934.5px;top:542px;width:3.5px;height:7px;background:#22e65c;"></div>
<div style="left:819px;top:550px;width:131px;height:2px;background:#262626;"></div>
<div style="left:930px;top:170px;width:3.5px;height:9px;background:#a9c83a;"></div>
<div style="left:934.5px;top:170px;width:3.5px;height:9px;background:#a9c83a;"></div>
<div style="left:707px;top:577px;width:111px;height:19px;background:#ffffff;"></div>
<svg style="left:709px;top:578.5px" width="16" height="16"><circle cx="8" cy="8" r="6.8" fill="none" stroke="#222" stroke-width="1.4"/><polygon points="5.8,4.2 5.8,11.8 11.2,8" fill="#222"/></svg>
<div style="left:733px;top:579px;font-size:11.5px;color:#222;font-weight:bold;line-height:15px;">Main</div>
<div style="left:823px;top:579px;width:48px;height:14px;background:#1f1f1f;"></div>
<div style="left:823px;top:579px;width:41px;height:14px;background:#17879a;"></div>
<div style="left:823px;top:579px;font-size:12px;color:#d8d8d8;font-weight:normal;-webkit-text-stroke:0.3px #d8d8d8;width:41px;text-align:center;line-height:15px;">0</div>
<div style="left:877px;top:579px;width:49px;height:14px;background:#1f1f1f;"></div>
<div style="left:877px;top:579px;width:41px;height:14px;background:#3b74c9;"></div>
<div style="left:877px;top:579px;font-size:12px;color:#d8d8d8;font-weight:normal;-webkit-text-stroke:0.3px #d8d8d8;width:41px;text-align:center;line-height:15px;">0</div>
<div style="left:929px;top:579px;width:10px;height:1.2px;background:#c84a3a;"></div>
<div style="left:930px;top:580px;width:3.5px;height:14px;background:#22e65c;"></div>
<div style="left:934.5px;top:580px;width:3.5px;height:14px;background:#22e65c;"></div>
<div style="left:707px;top:552px;width:243px;height:23px;background:#333333;"></div>
<div style="left:709px;top:56px;width:31px;height:14px;background:#1f1f1f;border-radius:7px"></div>
<div style="left:709px;top:56px;font-size:11px;color:#d8d8d8;font-weight:bold;width:31px;text-align:center;line-height:14px;">Set</div>
<div style="left:752px;top:56px;width:25px;height:14px;background:#1f1f1f;"></div>
<svg style="left:758px;top:58px" width="12" height="10"><path d="M2 9 L10 1" stroke="#d0d0d0" stroke-width="1.6"/><circle cx="2.5" cy="8" r="1.6" fill="#d0d0d0"/><circle cx="9.5" cy="2" r="1.6" fill="#d0d0d0"/></svg>
<div style="left:781px;top:56px;width:25px;height:14px;background:#1f1f1f;"></div>
<svg style="left:788px;top:57px" width="11" height="11"><rect x="1.5" y="5" width="8" height="5" fill="#d0d0d0"/><path d="M3 5 V3.5 A2.5 2.5 0 0 1 8 3.5 V5" fill="none" stroke="#d0d0d0" stroke-width="1.3"/></svg>
<svg style="left:709px;top:75px" width="14" height="14"><circle cx="7" cy="7" r="7" fill="#1f1f1f"/></svg>
<svg style="left:726px;top:75px" width="14" height="14"><circle cx="7" cy="7" r="7" fill="#1f1f1f"/></svg>
<svg style="left:710px;top:77px" width="12" height="10"><path d="M10 5 H3 M6 2 L3 5 L6 8" fill="none" stroke="#d8d8d8" stroke-width="1.6"/></svg>
<svg style="left:727px;top:77px" width="12" height="10"><path d="M2 5 H9 M6 2 L9 5 L6 8" fill="none" stroke="#d8d8d8" stroke-width="1.6"/></svg>
<div style="left:949px;top:49px;width:4px;height:908px;background:#282828;"></div>
<div style="left:953px;top:0px;width:5px;height:957px;background:#1f1f1f;"></div>
<div style="left:958px;top:0px;width:2px;height:957px;background:#cdc5f4;"></div>
<div style="left:0px;top:596px;width:950px;height:24px;background:#2f2f2f;"></div>
<div style="left:705px;top:596px;width:245px;height:24px;background:#2f2f2f;"></div>
<div style="left:3px;top:598px;width:2px;height:2px;background:#5a5a5a;"></div>
<div style="left:24px;top:598px;width:2px;height:2px;background:#5a5a5a;"></div>
<div style="left:45px;top:598px;width:2px;height:2px;background:#5a5a5a;"></div>
<div style="left:66px;top:598px;width:2px;height:2px;background:#5a5a5a;"></div>
<div style="left:87px;top:598px;width:2px;height:2px;background:#5a5a5a;"></div>
<div style="left:108px;top:598px;width:2px;height:2px;background:#5a5a5a;"></div>
<div style="left:128px;top:598px;width:2px;height:2px;background:#5a5a5a;"></div>
<div style="left:149px;top:598px;width:2px;height:2px;background:#5a5a5a;"></div>
<div style="left:170px;top:598px;width:2px;height:2px;background:#5a5a5a;"></div>
<div style="left:191px;top:598px;width:2px;height:2px;background:#5a5a5a;"></div>
<div style="left:212px;top:598px;width:2px;height:2px;background:#5a5a5a;"></div>
<div style="left:233px;top:598px;width:2px;height:2px;background:#5a5a5a;"></div>
<div style="left:254px;top:598px;width:2px;height:2px;background:#5a5a5a;"></div>
<div style="left:274px;top:598px;width:2px;height:2px;background:#5a5a5a;"></div>
<div style="left:295px;top:598px;width:2px;height:2px;background:#5a5a5a;"></div>
<div style="left:316px;top:598px;width:2px;height:2px;background:#5a5a5a;"></div>
<div style="left:337px;top:598px;width:2px;height:2px;background:#5a5a5a;"></div>
<div style="left:358px;top:598px;width:2px;height:2px;background:#5a5a5a;"></div>
<div style="left:379px;top:598px;width:2px;height:2px;background:#5a5a5a;"></div>
<div style="left:400px;top:598px;width:2px;height:2px;background:#5a5a5a;"></div>
<div style="left:420px;top:598px;width:2px;height:2px;background:#5a5a5a;"></div>
<div style="left:441px;top:598px;width:2px;height:2px;background:#5a5a5a;"></div>
<div style="left:462px;top:598px;width:2px;height:2px;background:#5a5a5a;"></div>
<div style="left:483px;top:598px;width:2px;height:2px;background:#5a5a5a;"></div>
<div style="left:504px;top:598px;width:2px;height:2px;background:#5a5a5a;"></div>
<div style="left:525px;top:598px;width:2px;height:2px;background:#5a5a5a;"></div>
<div style="left:546px;top:598px;width:2px;height:2px;background:#5a5a5a;"></div>
<div style="left:566px;top:598px;width:2px;height:2px;background:#5a5a5a;"></div>
<div style="left:587px;top:598px;width:2px;height:2px;background:#5a5a5a;"></div>
<div style="left:608px;top:598px;width:2px;height:2px;background:#5a5a5a;"></div>
<div style="left:629px;top:598px;width:2px;height:2px;background:#5a5a5a;"></div>
<div style="left:650px;top:598px;width:2px;height:2px;background:#5a5a5a;"></div>
<div style="left:671px;top:598px;width:2px;height:2px;background:#5a5a5a;"></div>
<div style="left:692px;top:598px;width:2px;height:2px;background:#5a5a5a;"></div>
<div style="left:45px;top:598px;width:1px;height:9px;background:#8a8a8a;"></div>
<div style="left:47px;top:599px;font-size:12px;color:#a4a4a4;font-weight:normal;-webkit-text-stroke:0.3px #a4a4a4;line-height:14px;">0:40</div>
<div style="left:149px;top:598px;width:1px;height:9px;background:#8a8a8a;"></div>
<div style="left:151px;top:599px;font-size:12px;color:#a4a4a4;font-weight:normal;-webkit-text-stroke:0.3px #a4a4a4;line-height:14px;">0:45</div>
<div style="left:254px;top:598px;width:1px;height:9px;background:#8a8a8a;"></div>
<div style="left:256px;top:599px;font-size:12px;color:#a4a4a4;font-weight:normal;-webkit-text-stroke:0.3px #a4a4a4;line-height:14px;">0:50</div>
<div style="left:358px;top:598px;width:1px;height:9px;background:#8a8a8a;"></div>
<div style="left:360px;top:599px;font-size:12px;color:#a4a4a4;font-weight:normal;-webkit-text-stroke:0.3px #a4a4a4;line-height:14px;">0:55</div>
<div style="left:462px;top:598px;width:1px;height:9px;background:#8a8a8a;"></div>
<div style="left:464px;top:599px;font-size:12px;color:#a4a4a4;font-weight:normal;-webkit-text-stroke:0.3px #a4a4a4;line-height:14px;">1:00</div>
<div style="left:566px;top:598px;width:1px;height:9px;background:#8a8a8a;"></div>
<div style="left:568px;top:599px;font-size:12px;color:#a4a4a4;font-weight:normal;-webkit-text-stroke:0.3px #a4a4a4;line-height:14px;">1:05</div>
<div style="left:671px;top:598px;width:1px;height:9px;background:#8a8a8a;"></div>
<div style="left:673px;top:599px;font-size:12px;color:#a4a4a4;font-weight:normal;-webkit-text-stroke:0.3px #a4a4a4;line-height:14px;">1:10</div>
<div style="left:705px;top:600px;width:18px;height:17px;background:#262626;"></div>
<svg style="left:707px;top:602px" width="14" height="13"><path d="M1 5v3 M3.5 3v7 M6 1v11 M8.5 3v7 M11 5v3" stroke="#cfcfcf" stroke-width="1.3"/></svg>
<div style="left:726px;top:600px;width:38px;height:17px;background:#222222;"></div>
<div style="left:726px;top:602px;font-size:12px;color:#cfcfcf;font-weight:normal;-webkit-text-stroke:0.3px #cfcfcf;width:38px;text-align:center;line-height:14px;">1.00x</div>
<div style="left:781px;top:601px;width:16px;height:16px;background:#1f1f1f;"></div>
<div style="left:781px;top:602px;font-size:11px;color:#cfcfcf;font-weight:bold;width:16px;text-align:center;line-height:14px;">H</div>
<div style="left:799px;top:601px;width:16px;height:16px;background:#1f1f1f;"></div>
<div style="left:799px;top:602px;font-size:11px;color:#cfcfcf;font-weight:bold;width:16px;text-align:center;line-height:14px;">W</div>
<div style="left:0px;top:620px;width:950px;height:337px;background:#262626;"></div>
<div style="left:0px;top:642px;width:25px;height:265px;background:#353535;"></div>
<div style="left:0px;top:623px;width:25px;height:19px;background:#eafaa9;"></div>
<div style="left:0px;top:911px;width:25px;height:7px;background:#eafaa9;"></div>
<div style="left:5px;top:648px;font-size:11px;color:#a6a6a6;font-weight:normal;-webkit-text-stroke:0.3px #a6a6a6;line-height:14px;">6</div>
<div style="left:5px;top:668.5px;font-size:11px;color:#a6a6a6;font-weight:normal;-webkit-text-stroke:0.3px #a6a6a6;line-height:14px;">0</div>
<div style="left:5px;top:693px;font-size:11px;color:#a6a6a6;font-weight:normal;-webkit-text-stroke:0.3px #a6a6a6;line-height:14px;">6</div>
<div style="left:5px;top:718px;font-size:11px;color:#a6a6a6;font-weight:normal;-webkit-text-stroke:0.3px #a6a6a6;line-height:14px;">12</div>
<div style="left:5px;top:743px;font-size:11px;color:#a6a6a6;font-weight:normal;-webkit-text-stroke:0.3px #a6a6a6;line-height:14px;">18</div>
<div style="left:5px;top:768px;font-size:11px;color:#a6a6a6;font-weight:normal;-webkit-text-stroke:0.3px #a6a6a6;line-height:14px;">24</div>
<div style="left:5px;top:793.5px;font-size:11px;color:#a6a6a6;font-weight:normal;-webkit-text-stroke:0.3px #a6a6a6;line-height:14px;">30</div>
<div style="left:5px;top:815px;font-size:11px;color:#a6a6a6;font-weight:normal;-webkit-text-stroke:0.3px #a6a6a6;line-height:14px;">36</div>
<div style="left:5px;top:835px;font-size:11px;color:#a6a6a6;font-weight:normal;-webkit-text-stroke:0.3px #a6a6a6;line-height:14px;">42</div>
<div style="left:5px;top:851px;font-size:11px;color:#a6a6a6;font-weight:normal;-webkit-text-stroke:0.3px #a6a6a6;line-height:14px;">48</div>
<div style="left:5px;top:866px;font-size:11px;color:#a6a6a6;font-weight:normal;-webkit-text-stroke:0.3px #a6a6a6;line-height:14px;">54</div>
<div style="left:5px;top:880px;font-size:11px;color:#a6a6a6;font-weight:normal;-webkit-text-stroke:0.3px #a6a6a6;line-height:14px;">60</div>
<div style="left:27px;top:642px;width:101px;height:265px;background:#353535;"></div>
<div style="left:27px;top:623px;width:101px;height:19px;background:#f5f379;"></div>
<div style="left:31px;top:626px;font-size:11px;color:#4d4a15;font-weight:bold;line-height:15px;">Keys</div>
<div style="left:27px;top:911px;width:101px;height:7px;background:#f5f379;"></div>
<div style="left:107px;top:648px;font-size:11px;color:#a6a6a6;font-weight:normal;-webkit-text-stroke:0.3px #a6a6a6;line-height:14px;">6</div>
<div style="left:107px;top:668.5px;font-size:11px;color:#a6a6a6;font-weight:normal;-webkit-text-stroke:0.3px #a6a6a6;line-height:14px;">0</div>
<div style="left:107px;top:693px;font-size:11px;color:#a6a6a6;font-weight:normal;-webkit-text-stroke:0.3px #a6a6a6;line-height:14px;">6</div>
<div style="left:107px;top:718px;font-size:11px;color:#a6a6a6;font-weight:normal;-webkit-text-stroke:0.3px #a6a6a6;line-height:14px;">12</div>
<div style="left:107px;top:743px;font-size:11px;color:#a6a6a6;font-weight:normal;-webkit-text-stroke:0.3px #a6a6a6;line-height:14px;">18</div>
<div style="left:107px;top:768px;font-size:11px;color:#a6a6a6;font-weight:normal;-webkit-text-stroke:0.3px #a6a6a6;line-height:14px;">24</div>
<div style="left:107px;top:793.5px;font-size:11px;color:#a6a6a6;font-weight:normal;-webkit-text-stroke:0.3px #a6a6a6;line-height:14px;">30</div>
<div style="left:107px;top:815px;font-size:11px;color:#a6a6a6;font-weight:normal;-webkit-text-stroke:0.3px #a6a6a6;line-height:14px;">36</div>
<div style="left:107px;top:835px;font-size:11px;color:#a6a6a6;font-weight:normal;-webkit-text-stroke:0.3px #a6a6a6;line-height:14px;">42</div>
<div style="left:107px;top:851px;font-size:11px;color:#a6a6a6;font-weight:normal;-webkit-text-stroke:0.3px #a6a6a6;line-height:14px;">48</div>
<div style="left:107px;top:866px;font-size:11px;color:#a6a6a6;font-weight:normal;-webkit-text-stroke:0.3px #a6a6a6;line-height:14px;">54</div>
<div style="left:107px;top:880px;font-size:11px;color:#a6a6a6;font-weight:normal;-webkit-text-stroke:0.3px #a6a6a6;line-height:14px;">60</div>
<div style="left:84px;top:655px;width:3px;height:1px;background:#5c5c5c;"></div>
<div style="left:84px;top:676px;width:3px;height:1px;background:#5c5c5c;"></div>
<div style="left:84px;top:700px;width:3px;height:1px;background:#5c5c5c;"></div>
<div style="left:84px;top:725px;width:3px;height:1px;background:#5c5c5c;"></div>
<div style="left:84px;top:750px;width:3px;height:1px;background:#5c5c5c;"></div>
<div style="left:84px;top:775px;width:3px;height:1px;background:#5c5c5c;"></div>
<div style="left:84px;top:800px;width:3px;height:1px;background:#5c5c5c;"></div>
<div style="left:84px;top:822px;width:3px;height:1px;background:#5c5c5c;"></div>
<div style="left:84px;top:842px;width:3px;height:1px;background:#5c5c5c;"></div>
<div style="left:84px;top:858px;width:3px;height:1px;background:#5c5c5c;"></div>
<div style="left:84px;top:873px;width:3px;height:1px;background:#5c5c5c;"></div>
<div style="left:84px;top:887px;width:3px;height:1px;background:#5c5c5c;"></div>
<div style="left:35px;top:649px;width:37px;height:14.5px;background:#1f1f1f;border-radius:7px"></div>
<div style="left:35px;top:650px;font-size:12px;color:#d2d2d2;font-weight:normal;-webkit-text-stroke:0.3px #d2d2d2;width:37px;text-align:center;line-height:15px;">-16.0</div>
<div style="left:35px;top:669px;width:37px;height:13.5px;background:#1f1f1f;"></div>
<div style="left:35px;top:669.5px;font-size:12px;color:#d2d2d2;font-weight:normal;-webkit-text-stroke:0.3px #d2d2d2;width:37px;text-align:center;line-height:15px;">-6.6</div>
<div style="left:90px;top:649.5px;width:14px;height:252.5px;background:#1b1b1b;"></div>
<div style="left:96.5px;top:649.5px;width:1px;height:252.5px;background:#3a3a3a;"></div>
<div style="left:90.5px;top:899px;width:6px;height:3px;background:#22e65c;"></div>
<div style="left:90.5px;top:765px;width:6px;height:1.5px;background:#22e65c;"></div>
<div style="left:97.5px;top:899px;width:6px;height:3px;background:#22e65c;"></div>
<div style="left:97.5px;top:742px;width:6px;height:1.5px;background:#22e65c;"></div>
<div style="left:87px;top:675px;width:17px;height:1.5px;background:#8a8a8a;"></div>
<svg style="left:76px;top:697px" width="13" height="14"><polygon points="0,0 13,7 0,14" fill="#c2c2c2"/></svg>
<svg style="left:37.5px;top:802.8px" width="32" height="36"><path d="M8.6 33.1 A13.6 13.6 0 0 1 12.9 8.4" fill="none" stroke="#141414" stroke-width="2.5"/><path d="M23.4 33.1 A13.6 13.6 0 0 0 19.1 8.4" fill="none" stroke="#141414" stroke-width="2.5"/><line x1="16" y1="7" x2="16" y2="22" stroke="#141414" stroke-width="2"/><polygon points="12,2.5 20,2.5 16,6.5" fill="#141414"/></svg>
<div style="left:42px;top:842px;width:24px;height:23px;background:#fba94e;"></div>
<div style="left:42px;top:845px;font-size:14px;color:#1a1a1a;font-weight:bold;width:24px;text-align:center;line-height:17px;">11</div>
<div style="left:41px;top:870px;width:25px;height:14px;background:#1f1f1f;"></div>
<div style="left:41px;top:870px;font-size:11px;color:#d0d0d0;font-weight:bold;width:25px;text-align:center;line-height:14px;">S</div>
<div style="left:41px;top:888px;width:25px;height:14px;background:#1f1f1f;"></div>
<svg style="left:47.5px;top:889px" width="12" height="12"><circle cx="6" cy="6" r="4.4" fill="#cfcfcf"/><path d="M6.8 2.6 V7 L4.6 8.2" fill="none" stroke="#1e1e1e" stroke-width="1.3"/></svg>
<div style="left:130px;top:642px;width:101px;height:265px;background:#353535;"></div>
<div style="left:130px;top:623px;width:101px;height:19px;background:#f9a473;"></div>
<div style="left:134px;top:626px;font-size:11px;color:#5a3419;font-weight:bold;line-height:15px;">Pads</div>
<div style="left:130px;top:911px;width:101px;height:7px;background:#f9a473;"></div>
<div style="left:210px;top:648px;font-size:11px;color:#a6a6a6;font-weight:normal;-webkit-text-stroke:0.3px #a6a6a6;line-height:14px;">6</div>
<div style="left:210px;top:668.5px;font-size:11px;color:#a6a6a6;font-weight:normal;-webkit-text-stroke:0.3px #a6a6a6;line-height:14px;">0</div>
<div style="left:210px;top:693px;font-size:11px;color:#a6a6a6;font-weight:normal;-webkit-text-stroke:0.3px #a6a6a6;line-height:14px;">6</div>
<div style="left:210px;top:718px;font-size:11px;color:#a6a6a6;font-weight:normal;-webkit-text-stroke:0.3px #a6a6a6;line-height:14px;">12</div>
<div style="left:210px;top:743px;font-size:11px;color:#a6a6a6;font-weight:normal;-webkit-text-stroke:0.3px #a6a6a6;line-height:14px;">18</div>
<div style="left:210px;top:768px;font-size:11px;color:#a6a6a6;font-weight:normal;-webkit-text-stroke:0.3px #a6a6a6;line-height:14px;">24</div>
<div style="left:210px;top:793.5px;font-size:11px;color:#a6a6a6;font-weight:normal;-webkit-text-stroke:0.3px #a6a6a6;line-height:14px;">30</div>
<div style="left:210px;top:815px;font-size:11px;color:#a6a6a6;font-weight:normal;-webkit-text-stroke:0.3px #a6a6a6;line-height:14px;">36</div>
<div style="left:210px;top:835px;font-size:11px;color:#a6a6a6;font-weight:normal;-webkit-text-stroke:0.3px #a6a6a6;line-height:14px;">42</div>
<div style="left:210px;top:851px;font-size:11px;color:#a6a6a6;font-weight:normal;-webkit-text-stroke:0.3px #a6a6a6;line-height:14px;">48</div>
<div style="left:210px;top:866px;font-size:11px;color:#a6a6a6;font-weight:normal;-webkit-text-stroke:0.3px #a6a6a6;line-height:14px;">54</div>
<div style="left:210px;top:880px;font-size:11px;color:#a6a6a6;font-weight:normal;-webkit-text-stroke:0.3px #a6a6a6;line-height:14px;">60</div>
<div style="left:187px;top:655px;width:3px;height:1px;background:#5c5c5c;"></div>
<div style="left:187px;top:676px;width:3px;height:1px;background:#5c5c5c;"></div>
<div style="left:187px;top:700px;width:3px;height:1px;background:#5c5c5c;"></div>
<div style="left:187px;top:725px;width:3px;height:1px;background:#5c5c5c;"></div>
<div style="left:187px;top:750px;width:3px;height:1px;background:#5c5c5c;"></div>
<div style="left:187px;top:775px;width:3px;height:1px;background:#5c5c5c;"></div>
<div style="left:187px;top:800px;width:3px;height:1px;background:#5c5c5c;"></div>
<div style="left:187px;top:822px;width:3px;height:1px;background:#5c5c5c;"></div>
<div style="left:187px;top:842px;width:3px;height:1px;background:#5c5c5c;"></div>
<div style="left:187px;top:858px;width:3px;height:1px;background:#5c5c5c;"></div>
<div style="left:187px;top:873px;width:3px;height:1px;background:#5c5c5c;"></div>
<div style="left:187px;top:887px;width:3px;height:1px;background:#5c5c5c;"></div>
<div style="left:138px;top:649px;width:37px;height:14.5px;background:#1f1f1f;border-radius:7px"></div>
<div style="left:138px;top:650px;font-size:12px;color:#d2d2d2;font-weight:normal;-webkit-text-stroke:0.3px #d2d2d2;width:37px;text-align:center;line-height:15px;">-14.4</div>
<div style="left:138px;top:669px;width:37px;height:13.5px;background:#1f1f1f;"></div>
<div style="left:138px;top:669.5px;font-size:12px;color:#d2d2d2;font-weight:normal;-webkit-text-stroke:0.3px #d2d2d2;width:37px;text-align:center;line-height:15px;">0</div>
<div style="left:193px;top:649.5px;width:14px;height:252.5px;background:#1b1b1b;"></div>
<div style="left:199.5px;top:649.5px;width:1px;height:252.5px;background:#3a3a3a;"></div>
<div style="left:193.5px;top:822px;width:6px;height:80px;background:#22e65c;"></div>
<div style="left:193.5px;top:735px;width:6px;height:1.5px;background:#22e65c;"></div>
<div style="left:200.5px;top:818px;width:6px;height:84px;background:#22e65c;"></div>
<div style="left:200.5px;top:744px;width:6px;height:1.5px;background:#22e65c;"></div>
<div style="left:190px;top:675px;width:17px;height:1.5px;background:#8a8a8a;"></div>
<svg style="left:179px;top:668.5px" width="13" height="14"><polygon points="0,0 13,7 0,14" fill="#c2c2c2"/></svg>
<svg style="left:140.5px;top:802.8px" width="32" height="36"><path d="M8.6 33.1 A13.6 13.6 0 0 1 12.9 8.4" fill="none" stroke="#141414" stroke-width="2.5"/><path d="M23.4 33.1 A13.6 13.6 0 0 0 19.1 8.4" fill="none" stroke="#141414" stroke-width="2.5"/><line x1="16" y1="7" x2="16" y2="22" stroke="#141414" stroke-width="2"/><polygon points="12,2.5 20,2.5 16,6.5" fill="#141414"/></svg>
<div style="left:145px;top:842px;width:24px;height:23px;background:#fba94e;"></div>
<div style="left:145px;top:845px;font-size:14px;color:#1a1a1a;font-weight:bold;width:24px;text-align:center;line-height:17px;">12</div>
<div style="left:144px;top:870px;width:25px;height:14px;background:#1f1f1f;"></div>
<div style="left:144px;top:870px;font-size:11px;color:#d0d0d0;font-weight:bold;width:25px;text-align:center;line-height:14px;">S</div>
<div style="left:233px;top:642px;width:101px;height:265px;background:#353535;"></div>
<div style="left:233px;top:623px;width:101px;height:19px;background:#fb919f;"></div>
<div style="left:237px;top:626px;font-size:11px;color:#5e2730;font-weight:bold;line-height:15px;">Ambience</div>
<div style="left:233px;top:911px;width:101px;height:7px;background:#fb919f;"></div>
<div style="left:313px;top:648px;font-size:11px;color:#a6a6a6;font-weight:normal;-webkit-text-stroke:0.3px #a6a6a6;line-height:14px;">6</div>
<div style="left:313px;top:668.5px;font-size:11px;color:#a6a6a6;font-weight:normal;-webkit-text-stroke:0.3px #a6a6a6;line-height:14px;">0</div>
<div style="left:313px;top:693px;font-size:11px;color:#a6a6a6;font-weight:normal;-webkit-text-stroke:0.3px #a6a6a6;line-height:14px;">6</div>
<div style="left:313px;top:718px;font-size:11px;color:#a6a6a6;font-weight:normal;-webkit-text-stroke:0.3px #a6a6a6;line-height:14px;">12</div>
<div style="left:313px;top:743px;font-size:11px;color:#a6a6a6;font-weight:normal;-webkit-text-stroke:0.3px #a6a6a6;line-height:14px;">18</div>
<div style="left:313px;top:768px;font-size:11px;color:#a6a6a6;font-weight:normal;-webkit-text-stroke:0.3px #a6a6a6;line-height:14px;">24</div>
<div style="left:313px;top:793.5px;font-size:11px;color:#a6a6a6;font-weight:normal;-webkit-text-stroke:0.3px #a6a6a6;line-height:14px;">30</div>
<div style="left:313px;top:815px;font-size:11px;color:#a6a6a6;font-weight:normal;-webkit-text-stroke:0.3px #a6a6a6;line-height:14px;">36</div>
<div style="left:313px;top:835px;font-size:11px;color:#a6a6a6;font-weight:normal;-webkit-text-stroke:0.3px #a6a6a6;line-height:14px;">42</div>
<div style="left:313px;top:851px;font-size:11px;color:#a6a6a6;font-weight:normal;-webkit-text-stroke:0.3px #a6a6a6;line-height:14px;">48</div>
<div style="left:313px;top:866px;font-size:11px;color:#a6a6a6;font-weight:normal;-webkit-text-stroke:0.3px #a6a6a6;line-height:14px;">54</div>
<div style="left:313px;top:880px;font-size:11px;color:#a6a6a6;font-weight:normal;-webkit-text-stroke:0.3px #a6a6a6;line-height:14px;">60</div>
<div style="left:290px;top:655px;width:3px;height:1px;background:#5c5c5c;"></div>
<div style="left:290px;top:676px;width:3px;height:1px;background:#5c5c5c;"></div>
<div style="left:290px;top:700px;width:3px;height:1px;background:#5c5c5c;"></div>
<div style="left:290px;top:725px;width:3px;height:1px;background:#5c5c5c;"></div>
<div style="left:290px;top:750px;width:3px;height:1px;background:#5c5c5c;"></div>
<div style="left:290px;top:775px;width:3px;height:1px;background:#5c5c5c;"></div>
<div style="left:290px;top:800px;width:3px;height:1px;background:#5c5c5c;"></div>
<div style="left:290px;top:822px;width:3px;height:1px;background:#5c5c5c;"></div>
<div style="left:290px;top:842px;width:3px;height:1px;background:#5c5c5c;"></div>
<div style="left:290px;top:858px;width:3px;height:1px;background:#5c5c5c;"></div>
<div style="left:290px;top:873px;width:3px;height:1px;background:#5c5c5c;"></div>
<div style="left:290px;top:887px;width:3px;height:1px;background:#5c5c5c;"></div>
<div style="left:241px;top:649px;width:37px;height:14.5px;background:#1f1f1f;border-radius:7px"></div>
<div style="left:241px;top:650px;font-size:12px;color:#d2d2d2;font-weight:normal;-webkit-text-stroke:0.3px #d2d2d2;width:37px;text-align:center;line-height:15px;">-29.7</div>
<div style="left:241px;top:669px;width:37px;height:13.5px;background:#1f1f1f;"></div>
<div style="left:241px;top:669.5px;font-size:12px;color:#d2d2d2;font-weight:normal;-webkit-text-stroke:0.3px #d2d2d2;width:37px;text-align:center;line-height:15px;">-8.3</div>
<div style="left:296px;top:649.5px;width:14px;height:252.5px;background:#1b1b1b;"></div>
<div style="left:302.5px;top:649.5px;width:1px;height:252.5px;background:#3a3a3a;"></div>
<div style="left:296.5px;top:814px;width:6px;height:29px;background:#1f9a45;"></div>
<div style="left:296.5px;top:843px;width:6px;height:59px;background:#22e65c;"></div>
<div style="left:296.5px;top:803.5px;width:6px;height:1.5px;background:#22e65c;"></div>
<div style="left:303.5px;top:821px;width:6px;height:22px;background:#1f9a45;"></div>
<div style="left:303.5px;top:843px;width:6px;height:59px;background:#22e65c;"></div>
<div style="left:303.5px;top:799.5px;width:6px;height:1.5px;background:#22e65c;"></div>
<div style="left:293px;top:675px;width:17px;height:1.5px;background:#8a8a8a;"></div>
<svg style="left:282px;top:703px" width="13" height="14"><polygon points="0,0 13,7 0,14" fill="#c2c2c2"/></svg>
<svg style="left:243.5px;top:802.8px" width="32" height="36"><path d="M8.6 33.1 A13.6 13.6 0 0 1 12.9 8.4" fill="none" stroke="#141414" stroke-width="2.5"/><path d="M23.4 33.1 A13.6 13.6 0 0 0 19.1 8.4" fill="none" stroke="#141414" stroke-width="2.5"/><line x1="16" y1="7" x2="16" y2="22" stroke="#141414" stroke-width="2"/><polygon points="12,2.5 20,2.5 16,6.5" fill="#141414"/></svg>
<div style="left:248px;top:842px;width:24px;height:23px;background:#fba94e;"></div>
<div style="left:248px;top:845px;font-size:14px;color:#1a1a1a;font-weight:bold;width:24px;text-align:center;line-height:17px;">16</div>
<div style="left:247px;top:870px;width:25px;height:14px;background:#1f1f1f;"></div>
<div style="left:247px;top:870px;font-size:11px;color:#d0d0d0;font-weight:bold;width:25px;text-align:center;line-height:14px;">S</div>
<div style="left:247px;top:888px;width:25px;height:14px;background:#1f1f1f;"></div>
<svg style="left:255.5px;top:891px" width="8" height="8"><circle cx="4" cy="4" r="4" fill="#6e6e6e"/></svg>
<div style="left:336px;top:642px;width:101px;height:265px;background:#353535;"></div>
<div style="left:336px;top:623px;width:101px;height:19px;background:#fb919f;"></div>
<div style="left:340px;top:626px;font-size:11px;color:#5e2730;font-weight:bold;line-height:15px;">Drone</div>
<div style="left:336px;top:911px;width:101px;height:7px;background:#fb919f;"></div>
<div style="left:416px;top:648px;font-size:11px;color:#a6a6a6;font-weight:normal;-webkit-text-stroke:0.3px #a6a6a6;line-height:14px;">6</div>
<div style="left:416px;top:668.5px;font-size:11px;color:#a6a6a6;font-weight:normal;-webkit-text-stroke:0.3px #a6a6a6;line-height:14px;">0</div>
<div style="left:416px;top:693px;font-size:11px;color:#a6a6a6;font-weight:normal;-webkit-text-stroke:0.3px #a6a6a6;line-height:14px;">6</div>
<div style="left:416px;top:718px;font-size:11px;color:#a6a6a6;font-weight:normal;-webkit-text-stroke:0.3px #a6a6a6;line-height:14px;">12</div>
<div style="left:416px;top:743px;font-size:11px;color:#a6a6a6;font-weight:normal;-webkit-text-stroke:0.3px #a6a6a6;line-height:14px;">18</div>
<div style="left:416px;top:768px;font-size:11px;color:#a6a6a6;font-weight:normal;-webkit-text-stroke:0.3px #a6a6a6;line-height:14px;">24</div>
<div style="left:416px;top:793.5px;font-size:11px;color:#a6a6a6;font-weight:normal;-webkit-text-stroke:0.3px #a6a6a6;line-height:14px;">30</div>
<div style="left:416px;top:815px;font-size:11px;color:#a6a6a6;font-weight:normal;-webkit-text-stroke:0.3px #a6a6a6;line-height:14px;">36</div>
<div style="left:416px;top:835px;font-size:11px;color:#a6a6a6;font-weight:normal;-webkit-text-stroke:0.3px #a6a6a6;line-height:14px;">42</div>
<div style="left:416px;top:851px;font-size:11px;color:#a6a6a6;font-weight:normal;-webkit-text-stroke:0.3px #a6a6a6;line-height:14px;">48</div>
<div style="left:416px;top:866px;font-size:11px;color:#a6a6a6;font-weight:normal;-webkit-text-stroke:0.3px #a6a6a6;line-height:14px;">54</div>
<div style="left:416px;top:880px;font-size:11px;color:#a6a6a6;font-weight:normal;-webkit-text-stroke:0.3px #a6a6a6;line-height:14px;">60</div>
<div style="left:393px;top:655px;width:3px;height:1px;background:#5c5c5c;"></div>
<div style="left:393px;top:676px;width:3px;height:1px;background:#5c5c5c;"></div>
<div style="left:393px;top:700px;width:3px;height:1px;background:#5c5c5c;"></div>
<div style="left:393px;top:725px;width:3px;height:1px;background:#5c5c5c;"></div>
<div style="left:393px;top:750px;width:3px;height:1px;background:#5c5c5c;"></div>
<div style="left:393px;top:775px;width:3px;height:1px;background:#5c5c5c;"></div>
<div style="left:393px;top:800px;width:3px;height:1px;background:#5c5c5c;"></div>
<div style="left:393px;top:822px;width:3px;height:1px;background:#5c5c5c;"></div>
<div style="left:393px;top:842px;width:3px;height:1px;background:#5c5c5c;"></div>
<div style="left:393px;top:858px;width:3px;height:1px;background:#5c5c5c;"></div>
<div style="left:393px;top:873px;width:3px;height:1px;background:#5c5c5c;"></div>
<div style="left:393px;top:887px;width:3px;height:1px;background:#5c5c5c;"></div>
<div style="left:344px;top:649px;width:37px;height:14.5px;background:#1f1f1f;border-radius:7px"></div>
<div style="left:344px;top:650px;font-size:12px;color:#d2d2d2;font-weight:normal;-webkit-text-stroke:0.3px #d2d2d2;width:37px;text-align:center;line-height:15px;">-25.0</div>
<div style="left:344px;top:669px;width:37px;height:13.5px;background:#1f1f1f;"></div>
<div style="left:344px;top:669.5px;font-size:12px;color:#d2d2d2;font-weight:normal;-webkit-text-stroke:0.3px #d2d2d2;width:37px;text-align:center;line-height:15px;">-15.6</div>
<div style="left:399px;top:649.5px;width:14px;height:252.5px;background:#1b1b1b;"></div>
<div style="left:405.5px;top:649.5px;width:1px;height:252.5px;background:#3a3a3a;"></div>
<div style="left:399.5px;top:790px;width:6px;height:35.5px;background:#1f9a45;"></div>
<div style="left:399.5px;top:825.5px;width:6px;height:76.5px;background:#22e65c;"></div>
<div style="left:406.5px;top:797.5px;width:6px;height:20.0px;background:#1f9a45;"></div>
<div style="left:406.5px;top:817.5px;width:6px;height:84.5px;background:#22e65c;"></div>
<div style="left:406.5px;top:779.5px;width:6px;height:1.5px;background:#22e65c;"></div>
<div style="left:396px;top:675px;width:17px;height:1.5px;background:#8a8a8a;"></div>
<svg style="left:385px;top:733.5px" width="13" height="14"><polygon points="0,0 13,7 0,14" fill="#c2c2c2"/></svg>
<svg style="left:346.5px;top:802.8px" width="32" height="36"><path d="M8.6 33.1 A13.6 13.6 0 0 1 12.9 8.4" fill="none" stroke="#141414" stroke-width="2.5"/><path d="M23.4 33.1 A13.6 13.6 0 0 0 19.1 8.4" fill="none" stroke="#141414" stroke-width="2.5"/><line x1="16" y1="7" x2="16" y2="22" stroke="#141414" stroke-width="2"/><polygon points="12,2.5 20,2.5 16,6.5" fill="#141414"/></svg>
<div style="left:351px;top:842px;width:24px;height:23px;background:#fba94e;"></div>
<div style="left:351px;top:845px;font-size:14px;color:#1a1a1a;font-weight:bold;width:24px;text-align:center;line-height:17px;">17</div>
<div style="left:350px;top:870px;width:25px;height:14px;background:#1f1f1f;"></div>
<div style="left:350px;top:870px;font-size:11px;color:#d0d0d0;font-weight:bold;width:25px;text-align:center;line-height:14px;">S</div>
<div style="left:350px;top:888px;width:25px;height:14px;background:#1f1f1f;"></div>
<svg style="left:358.5px;top:891px" width="8" height="8"><circle cx="4" cy="4" r="4" fill="#6e6e6e"/></svg>
<div style="left:439px;top:642px;width:101px;height:265px;background:#353535;"></div>
<div style="left:439px;top:623px;width:101px;height:19px;background:#d46de3;"></div>
<div style="left:443px;top:626px;font-size:11px;color:#4a1752;font-weight:bold;line-height:15px;">FX</div>
<div style="left:439px;top:911px;width:101px;height:7px;background:#d46de3;"></div>
<div style="left:519px;top:648px;font-size:11px;color:#a6a6a6;font-weight:normal;-webkit-text-stroke:0.3px #a6a6a6;line-height:14px;">6</div>
<div style="left:519px;top:668.5px;font-size:11px;color:#a6a6a6;font-weight:normal;-webkit-text-stroke:0.3px #a6a6a6;line-height:14px;">0</div>
<div style="left:519px;top:693px;font-size:11px;color:#a6a6a6;font-weight:normal;-webkit-text-stroke:0.3px #a6a6a6;line-height:14px;">6</div>
<div style="left:519px;top:718px;font-size:11px;color:#a6a6a6;font-weight:normal;-webkit-text-stroke:0.3px #a6a6a6;line-height:14px;">12</div>
<div style="left:519px;top:743px;font-size:11px;color:#a6a6a6;font-weight:normal;-webkit-text-stroke:0.3px #a6a6a6;line-height:14px;">18</div>
<div style="left:519px;top:768px;font-size:11px;color:#a6a6a6;font-weight:normal;-webkit-text-stroke:0.3px #a6a6a6;line-height:14px;">24</div>
<div style="left:519px;top:793.5px;font-size:11px;color:#a6a6a6;font-weight:normal;-webkit-text-stroke:0.3px #a6a6a6;line-height:14px;">30</div>
<div style="left:519px;top:815px;font-size:11px;color:#a6a6a6;font-weight:normal;-webkit-text-stroke:0.3px #a6a6a6;line-height:14px;">36</div>
<div style="left:519px;top:835px;font-size:11px;color:#a6a6a6;font-weight:normal;-webkit-text-stroke:0.3px #a6a6a6;line-height:14px;">42</div>
<div style="left:519px;top:851px;font-size:11px;color:#a6a6a6;font-weight:normal;-webkit-text-stroke:0.3px #a6a6a6;line-height:14px;">48</div>
<div style="left:519px;top:866px;font-size:11px;color:#a6a6a6;font-weight:normal;-webkit-text-stroke:0.3px #a6a6a6;line-height:14px;">54</div>
<div style="left:519px;top:880px;font-size:11px;color:#a6a6a6;font-weight:normal;-webkit-text-stroke:0.3px #a6a6a6;line-height:14px;">60</div>
<div style="left:496px;top:655px;width:3px;height:1px;background:#5c5c5c;"></div>
<div style="left:496px;top:676px;width:3px;height:1px;background:#5c5c5c;"></div>
<div style="left:496px;top:700px;width:3px;height:1px;background:#5c5c5c;"></div>
<div style="left:496px;top:725px;width:3px;height:1px;background:#5c5c5c;"></div>
<div style="left:496px;top:750px;width:3px;height:1px;background:#5c5c5c;"></div>
<div style="left:496px;top:775px;width:3px;height:1px;background:#5c5c5c;"></div>
<div style="left:496px;top:800px;width:3px;height:1px;background:#5c5c5c;"></div>
<div style="left:496px;top:822px;width:3px;height:1px;background:#5c5c5c;"></div>
<div style="left:496px;top:842px;width:3px;height:1px;background:#5c5c5c;"></div>
<div style="left:496px;top:858px;width:3px;height:1px;background:#5c5c5c;"></div>
<div style="left:496px;top:873px;width:3px;height:1px;background:#5c5c5c;"></div>
<div style="left:496px;top:887px;width:3px;height:1px;background:#5c5c5c;"></div>
<div style="left:447px;top:649px;width:37px;height:14.5px;background:#1f1f1f;border-radius:7px"></div>
<div style="left:447px;top:650px;font-size:12px;color:#d2d2d2;font-weight:normal;-webkit-text-stroke:0.3px #d2d2d2;width:37px;text-align:center;line-height:15px;">-19.6</div>
<div style="left:447px;top:669px;width:37px;height:13.5px;background:#1f1f1f;"></div>
<div style="left:447px;top:669.5px;font-size:12px;color:#d2d2d2;font-weight:normal;-webkit-text-stroke:0.3px #d2d2d2;width:37px;text-align:center;line-height:15px;">-4.1</div>
<div style="left:502px;top:649.5px;width:14px;height:252.5px;background:#1b1b1b;"></div>
<div style="left:508.5px;top:649.5px;width:1px;height:252.5px;background:#3a3a3a;"></div>
<div style="left:502.5px;top:769px;width:6px;height:29px;background:#1f9a45;"></div>
<div style="left:502.5px;top:798px;width:6px;height:104px;background:#22e65c;"></div>
<div style="left:502.5px;top:762.5px;width:6px;height:1.5px;background:#22e65c;"></div>
<div style="left:509.5px;top:762.5px;width:6px;height:27.5px;background:#1f9a45;"></div>
<div style="left:509.5px;top:790px;width:6px;height:112px;background:#22e65c;"></div>
<div style="left:509.5px;top:757px;width:6px;height:1.5px;background:#22e65c;"></div>
<div style="left:499px;top:675px;width:17px;height:1.5px;background:#8a8a8a;"></div>
<svg style="left:488px;top:686px" width="13" height="14"><polygon points="0,0 13,7 0,14" fill="#c2c2c2"/></svg>
<svg style="left:449.5px;top:802.8px" width="32" height="36"><path d="M8.6 33.1 A13.6 13.6 0 0 1 12.9 8.4" fill="none" stroke="#141414" stroke-width="2.5"/><path d="M23.4 33.1 A13.6 13.6 0 0 0 19.1 8.4" fill="none" stroke="#141414" stroke-width="2.5"/><line x1="16" y1="7" x2="16" y2="22" stroke="#141414" stroke-width="2"/><polygon points="12,2.5 20,2.5 16,6.5" fill="#141414"/></svg>
<div style="left:454px;top:842px;width:24px;height:23px;background:#fba94e;"></div>
<div style="left:454px;top:845px;font-size:14px;color:#1a1a1a;font-weight:bold;width:24px;text-align:center;line-height:17px;">18</div>
<div style="left:453px;top:870px;width:25px;height:14px;background:#1f1f1f;"></div>
<div style="left:453px;top:870px;font-size:11px;color:#d0d0d0;font-weight:bold;width:25px;text-align:center;line-height:14px;">S</div>
<div style="left:453px;top:888px;width:25px;height:14px;background:#1f1f1f;"></div>
<svg style="left:461.5px;top:891px" width="8" height="8"><circle cx="4" cy="4" r="4" fill="#6e6e6e"/></svg>
<div style="left:541px;top:642px;width:92px;height:265px;background:#353535;"></div>
<div style="left:541px;top:623px;width:92px;height:19px;background:#d46de3;"></div>
<div style="left:545px;top:626px;font-size:11px;color:#4a1752;font-weight:bold;line-height:15px;">Zap</div>
<div style="left:541px;top:911px;width:92px;height:7px;background:#d46de3;"></div>
<div style="left:608px;top:655px;width:3px;height:1px;background:#5c5c5c;"></div>
<div style="left:608px;top:676px;width:3px;height:1px;background:#5c5c5c;"></div>
<div style="left:608px;top:700px;width:3px;height:1px;background:#5c5c5c;"></div>
<div style="left:608px;top:725px;width:3px;height:1px;background:#5c5c5c;"></div>
<div style="left:608px;top:750px;width:3px;height:1px;background:#5c5c5c;"></div>
<div style="left:608px;top:775px;width:3px;height:1px;background:#5c5c5c;"></div>
<div style="left:608px;top:800px;width:3px;height:1px;background:#5c5c5c;"></div>
<div style="left:608px;top:822px;width:3px;height:1px;background:#5c5c5c;"></div>
<div style="left:608px;top:842px;width:3px;height:1px;background:#5c5c5c;"></div>
<div style="left:608px;top:858px;width:3px;height:1px;background:#5c5c5c;"></div>
<div style="left:608px;top:873px;width:3px;height:1px;background:#5c5c5c;"></div>
<div style="left:608px;top:887px;width:3px;height:1px;background:#5c5c5c;"></div>
<div style="left:559px;top:649px;width:37px;height:14.5px;background:#1f1f1f;border-radius:7px"></div>
<div style="left:559px;top:650px;font-size:12px;color:#d2d2d2;font-weight:normal;-webkit-text-stroke:0.3px #d2d2d2;width:37px;text-align:center;line-height:15px;">-24.6</div>
<div style="left:559px;top:669px;width:37px;height:13.5px;background:#1f1f1f;"></div>
<div style="left:559px;top:669.5px;font-size:12px;color:#d2d2d2;font-weight:normal;-webkit-text-stroke:0.3px #d2d2d2;width:37px;text-align:center;line-height:15px;">-19.4</div>
<div style="left:614px;top:649.5px;width:14px;height:252.5px;background:#1b1b1b;"></div>
<div style="left:620.5px;top:649.5px;width:1px;height:252.5px;background:#3a3a3a;"></div>
<div style="left:614.5px;top:795px;width:6px;height:30.5px;background:#1f9a45;"></div>
<div style="left:614.5px;top:825.5px;width:6px;height:76.5px;background:#22e65c;"></div>
<div style="left:614.5px;top:778px;width:6px;height:1.5px;background:#22e65c;"></div>
<div style="left:621.5px;top:790px;width:6px;height:34.5px;background:#1f9a45;"></div>
<div style="left:621.5px;top:824.5px;width:6px;height:77.5px;background:#22e65c;"></div>
<div style="left:621.5px;top:780px;width:6px;height:1.5px;background:#22e65c;"></div>
<div style="left:611px;top:675px;width:17px;height:1.5px;background:#8a8a8a;"></div>
<svg style="left:600px;top:749.5px" width="13" height="14"><polygon points="0,0 13,7 0,14" fill="#c2c2c2"/></svg>
<svg style="left:561.5px;top:802.8px" width="32" height="36"><path d="M8.6 33.1 A13.6 13.6 0 0 1 12.9 8.4" fill="none" stroke="#141414" stroke-width="2.5"/><path d="M23.4 33.1 A13.6 13.6 0 0 0 19.1 8.4" fill="none" stroke="#141414" stroke-width="2.5"/><line x1="16" y1="7" x2="16" y2="22" stroke="#141414" stroke-width="2"/><polygon points="12,2.5 20,2.5 16,6.5" fill="#141414"/></svg>
<div style="left:566px;top:842px;width:24px;height:23px;background:#fba94e;"></div>
<div style="left:566px;top:845px;font-size:14px;color:#1a1a1a;font-weight:bold;width:24px;text-align:center;line-height:17px;">19</div>
<div style="left:565px;top:870px;width:25px;height:14px;background:#1f1f1f;"></div>
<div style="left:565px;top:870px;font-size:11px;color:#d0d0d0;font-weight:bold;width:25px;text-align:center;line-height:14px;">S</div>
<div style="left:565px;top:888px;width:25px;height:14px;background:#1f1f1f;"></div>
<svg style="left:571.5px;top:889px" width="12" height="12"><circle cx="6" cy="6" r="4.4" fill="#cfcfcf"/><path d="M6.8 2.6 V7 L4.6 8.2" fill="none" stroke="#1e1e1e" stroke-width="1.3"/></svg>
<div style="left:636px;top:642px;width:101px;height:265px;background:#353535;"></div>
<div style="left:636px;top:623px;width:101px;height:19px;background:#d2d2d2;"></div>
<div style="left:640px;top:626px;font-size:11px;color:#2a2a2a;font-weight:bold;line-height:15px;">A Reverb</div>
<div style="left:636px;top:911px;width:101px;height:7px;background:#d2d2d2;"></div>
<div style="left:716px;top:648px;font-size:11px;color:#a6a6a6;font-weight:normal;-webkit-text-stroke:0.3px #a6a6a6;line-height:14px;">6</div>
<div style="left:716px;top:668.5px;font-size:11px;color:#a6a6a6;font-weight:normal;-webkit-text-stroke:0.3px #a6a6a6;line-height:14px;">0</div>
<div style="left:716px;top:693px;font-size:11px;color:#a6a6a6;font-weight:normal;-webkit-text-stroke:0.3px #a6a6a6;line-height:14px;">6</div>
<div style="left:716px;top:718px;font-size:11px;color:#a6a6a6;font-weight:normal;-webkit-text-stroke:0.3px #a6a6a6;line-height:14px;">12</div>
<div style="left:716px;top:743px;font-size:11px;color:#a6a6a6;font-weight:normal;-webkit-text-stroke:0.3px #a6a6a6;line-height:14px;">18</div>
<div style="left:716px;top:768px;font-size:11px;color:#a6a6a6;font-weight:normal;-webkit-text-stroke:0.3px #a6a6a6;line-height:14px;">24</div>
<div style="left:716px;top:793.5px;font-size:11px;color:#a6a6a6;font-weight:normal;-webkit-text-stroke:0.3px #a6a6a6;line-height:14px;">30</div>
<div style="left:716px;top:815px;font-size:11px;color:#a6a6a6;font-weight:normal;-webkit-text-stroke:0.3px #a6a6a6;line-height:14px;">36</div>
<div style="left:716px;top:835px;font-size:11px;color:#a6a6a6;font-weight:normal;-webkit-text-stroke:0.3px #a6a6a6;line-height:14px;">42</div>
<div style="left:716px;top:851px;font-size:11px;color:#a6a6a6;font-weight:normal;-webkit-text-stroke:0.3px #a6a6a6;line-height:14px;">48</div>
<div style="left:716px;top:866px;font-size:11px;color:#a6a6a6;font-weight:normal;-webkit-text-stroke:0.3px #a6a6a6;line-height:14px;">54</div>
<div style="left:716px;top:880px;font-size:11px;color:#a6a6a6;font-weight:normal;-webkit-text-stroke:0.3px #a6a6a6;line-height:14px;">60</div>
<div style="left:693px;top:655px;width:3px;height:1px;background:#5c5c5c;"></div>
<div style="left:693px;top:676px;width:3px;height:1px;background:#5c5c5c;"></div>
<div style="left:693px;top:700px;width:3px;height:1px;background:#5c5c5c;"></div>
<div style="left:693px;top:725px;width:3px;height:1px;background:#5c5c5c;"></div>
<div style="left:693px;top:750px;width:3px;height:1px;background:#5c5c5c;"></div>
<div style="left:693px;top:775px;width:3px;height:1px;background:#5c5c5c;"></div>
<div style="left:693px;top:800px;width:3px;height:1px;background:#5c5c5c;"></div>
<div style="left:693px;top:822px;width:3px;height:1px;background:#5c5c5c;"></div>
<div style="left:693px;top:842px;width:3px;height:1px;background:#5c5c5c;"></div>
<div style="left:693px;top:858px;width:3px;height:1px;background:#5c5c5c;"></div>
<div style="left:693px;top:873px;width:3px;height:1px;background:#5c5c5c;"></div>
<div style="left:693px;top:887px;width:3px;height:1px;background:#5c5c5c;"></div>
<div style="left:644px;top:649px;width:37px;height:14.5px;background:#1f1f1f;border-radius:7px"></div>
<div style="left:644px;top:650px;font-size:12px;color:#d2d2d2;font-weight:normal;-webkit-text-stroke:0.3px #d2d2d2;width:37px;text-align:center;line-height:15px;">-50.9</div>
<div style="left:644px;top:669px;width:37px;height:13.5px;background:#1f1f1f;"></div>
<div style="left:644px;top:669.5px;font-size:12px;color:#d2d2d2;font-weight:normal;-webkit-text-stroke:0.3px #d2d2d2;width:37px;text-align:center;line-height:15px;">0</div>
<div style="left:699px;top:649.5px;width:14px;height:252.5px;background:#1b1b1b;"></div>
<div style="left:705.5px;top:649.5px;width:1px;height:252.5px;background:#3a3a3a;"></div>
<div style="left:699.5px;top:873px;width:6px;height:10px;background:#1f9a45;"></div>
<div style="left:699.5px;top:883px;width:6px;height:19px;background:#22e65c;"></div>
<div style="left:699.5px;top:864.5px;width:6px;height:1.5px;background:#22e65c;"></div>
<div style="left:706.5px;top:873px;width:6px;height:10px;background:#1f9a45;"></div>
<div style="left:706.5px;top:883px;width:6px;height:19px;background:#22e65c;"></div>
<div style="left:706.5px;top:870px;width:6px;height:1.5px;background:#22e65c;"></div>
<div style="left:696px;top:675px;width:17px;height:1.5px;background:#8a8a8a;"></div>
<svg style="left:685px;top:668.5px" width="13" height="14"><polygon points="0,0 13,7 0,14" fill="#c2c2c2"/></svg>
<svg style="left:646.5px;top:802.8px" width="32" height="36"><path d="M8.6 33.1 A13.6 13.6 0 0 1 12.9 8.4" fill="none" stroke="#141414" stroke-width="2.5"/><path d="M23.4 33.1 A13.6 13.6 0 0 0 19.1 8.4" fill="none" stroke="#141414" stroke-width="2.5"/><line x1="16" y1="7" x2="16" y2="22" stroke="#141414" stroke-width="2"/><polygon points="12,2.5 20,2.5 16,6.5" fill="#141414"/></svg>
<div style="left:651px;top:842px;width:24px;height:23px;background:#fba94e;"></div>
<div style="left:651px;top:845px;font-size:14px;color:#1a1a1a;font-weight:bold;width:24px;text-align:center;line-height:17px;">A</div>
<div style="left:650px;top:870px;width:25px;height:14px;background:#1f1f1f;"></div>
<div style="left:650px;top:870px;font-size:11px;color:#d0d0d0;font-weight:bold;width:25px;text-align:center;line-height:14px;">S</div>
<div style="left:739px;top:642px;width:101px;height:265px;background:#353535;"></div>
<div style="left:739px;top:623px;width:101px;height:19px;background:#d2d2d2;"></div>
<div style="left:743px;top:626px;font-size:11px;color:#2a2a2a;font-weight:bold;line-height:15px;">B Delay</div>
<div style="left:739px;top:911px;width:101px;height:7px;background:#d2d2d2;"></div>
<div style="left:819px;top:648px;font-size:11px;color:#a6a6a6;font-weight:normal;-webkit-text-stroke:0.3px #a6a6a6;line-height:14px;">6</div>
<div style="left:819px;top:668.5px;font-size:11px;color:#a6a6a6;font-weight:normal;-webkit-text-stroke:0.3px #a6a6a6;line-height:14px;">0</div>
<div style="left:819px;top:693px;font-size:11px;color:#a6a6a6;font-weight:normal;-webkit-text-stroke:0.3px #a6a6a6;line-height:14px;">6</div>
<div style="left:819px;top:718px;font-size:11px;color:#a6a6a6;font-weight:normal;-webkit-text-stroke:0.3px #a6a6a6;line-height:14px;">12</div>
<div style="left:819px;top:743px;font-size:11px;color:#a6a6a6;font-weight:normal;-webkit-text-stroke:0.3px #a6a6a6;line-height:14px;">18</div>
<div style="left:819px;top:768px;font-size:11px;color:#a6a6a6;font-weight:normal;-webkit-text-stroke:0.3px #a6a6a6;line-height:14px;">24</div>
<div style="left:819px;top:793.5px;font-size:11px;color:#a6a6a6;font-weight:normal;-webkit-text-stroke:0.3px #a6a6a6;line-height:14px;">30</div>
<div style="left:819px;top:815px;font-size:11px;color:#a6a6a6;font-weight:normal;-webkit-text-stroke:0.3px #a6a6a6;line-height:14px;">36</div>
<div style="left:819px;top:835px;font-size:11px;color:#a6a6a6;font-weight:normal;-webkit-text-stroke:0.3px #a6a6a6;line-height:14px;">42</div>
<div style="left:819px;top:851px;font-size:11px;color:#a6a6a6;font-weight:normal;-webkit-text-stroke:0.3px #a6a6a6;line-height:14px;">48</div>
<div style="left:819px;top:866px;font-size:11px;color:#a6a6a6;font-weight:normal;-webkit-text-stroke:0.3px #a6a6a6;line-height:14px;">54</div>
<div style="left:819px;top:880px;font-size:11px;color:#a6a6a6;font-weight:normal;-webkit-text-stroke:0.3px #a6a6a6;line-height:14px;">60</div>
<div style="left:796px;top:655px;width:3px;height:1px;background:#5c5c5c;"></div>
<div style="left:796px;top:676px;width:3px;height:1px;background:#5c5c5c;"></div>
<div style="left:796px;top:700px;width:3px;height:1px;background:#5c5c5c;"></div>
<div style="left:796px;top:725px;width:3px;height:1px;background:#5c5c5c;"></div>
<div style="left:796px;top:750px;width:3px;height:1px;background:#5c5c5c;"></div>
<div style="left:796px;top:775px;width:3px;height:1px;background:#5c5c5c;"></div>
<div style="left:796px;top:800px;width:3px;height:1px;background:#5c5c5c;"></div>
<div style="left:796px;top:822px;width:3px;height:1px;background:#5c5c5c;"></div>
<div style="left:796px;top:842px;width:3px;height:1px;background:#5c5c5c;"></div>
<div style="left:796px;top:858px;width:3px;height:1px;background:#5c5c5c;"></div>
<div style="left:796px;top:873px;width:3px;height:1px;background:#5c5c5c;"></div>
<div style="left:796px;top:887px;width:3px;height:1px;background:#5c5c5c;"></div>
<div style="left:747px;top:649px;width:37px;height:14.5px;background:#1f1f1f;border-radius:7px"></div>
<div style="left:747px;top:650px;font-size:12px;color:#d2d2d2;font-weight:normal;-webkit-text-stroke:0.3px #d2d2d2;width:37px;text-align:center;line-height:15px;">-55.2</div>
<div style="left:747px;top:669px;width:37px;height:13.5px;background:#1f1f1f;"></div>
<div style="left:747px;top:669.5px;font-size:12px;color:#d2d2d2;font-weight:normal;-webkit-text-stroke:0.3px #d2d2d2;width:37px;text-align:center;line-height:15px;">0</div>
<div style="left:802px;top:649.5px;width:14px;height:252.5px;background:#1b1b1b;"></div>
<div style="left:808.5px;top:649.5px;width:1px;height:252.5px;background:#3a3a3a;"></div>
<div style="left:802.5px;top:895.5px;width:6px;height:6.5px;background:#22e65c;"></div>
<div style="left:802.5px;top:878.5px;width:6px;height:1.5px;background:#22e65c;"></div>
<div style="left:809.5px;top:885.5px;width:6px;height:16.5px;background:#22e65c;"></div>
<div style="left:809.5px;top:876px;width:6px;height:1.5px;background:#22e65c;"></div>
<div style="left:799px;top:675px;width:17px;height:1.5px;background:#8a8a8a;"></div>
<svg style="left:788px;top:668.5px" width="13" height="14"><polygon points="0,0 13,7 0,14" fill="#c2c2c2"/></svg>
<svg style="left:749.5px;top:802.8px" width="32" height="36"><path d="M8.6 33.1 A13.6 13.6 0 0 1 12.9 8.4" fill="none" stroke="#141414" stroke-width="2.5"/><path d="M23.4 33.1 A13.6 13.6 0 0 0 19.1 8.4" fill="none" stroke="#141414" stroke-width="2.5"/><line x1="16" y1="7" x2="16" y2="22" stroke="#141414" stroke-width="2"/><polygon points="12,2.5 20,2.5 16,6.5" fill="#141414"/></svg>
<div style="left:754px;top:842px;width:24px;height:23px;background:#fba94e;"></div>
<div style="left:754px;top:845px;font-size:14px;color:#1a1a1a;font-weight:bold;width:24px;text-align:center;line-height:17px;">B</div>
<div style="left:753px;top:870px;width:25px;height:14px;background:#1f1f1f;"></div>
<div style="left:753px;top:870px;font-size:11px;color:#d0d0d0;font-weight:bold;width:25px;text-align:center;line-height:14px;">S</div>
<div style="left:842px;top:642px;width:107px;height:265px;background:#353535;"></div>
<div style="left:842px;top:623px;width:107px;height:19px;background:#ffffff;"></div>
<div style="left:846px;top:626px;font-size:11px;color:#2a2a2a;font-weight:bold;line-height:15px;">Main</div>
<div style="left:842px;top:911px;width:107px;height:7px;background:#ffffff;border-bottom-right-radius:5px"></div>
<div style="left:925px;top:648px;font-size:11px;color:#a6a6a6;font-weight:normal;-webkit-text-stroke:0.3px #a6a6a6;line-height:14px;">6</div>
<div style="left:925px;top:668.5px;font-size:11px;color:#a6a6a6;font-weight:normal;-webkit-text-stroke:0.3px #a6a6a6;line-height:14px;">0</div>
<div style="left:925px;top:693px;font-size:11px;color:#a6a6a6;font-weight:normal;-webkit-text-stroke:0.3px #a6a6a6;line-height:14px;">6</div>
<div style="left:925px;top:718px;font-size:11px;color:#a6a6a6;font-weight:normal;-webkit-text-stroke:0.3px #a6a6a6;line-height:14px;">12</div>
<div style="left:925px;top:743px;font-size:11px;color:#a6a6a6;font-weight:normal;-webkit-text-stroke:0.3px #a6a6a6;line-height:14px;">18</div>
<div style="left:925px;top:768px;font-size:11px;color:#a6a6a6;font-weight:normal;-webkit-text-stroke:0.3px #a6a6a6;line-height:14px;">24</div>
<div style="left:925px;top:793.5px;font-size:11px;color:#a6a6a6;font-weight:normal;-webkit-text-stroke:0.3px #a6a6a6;line-height:14px;">30</div>
<div style="left:925px;top:815px;font-size:11px;color:#a6a6a6;font-weight:normal;-webkit-text-stroke:0.3px #a6a6a6;line-height:14px;">36</div>
<div style="left:925px;top:835px;font-size:11px;color:#a6a6a6;font-weight:normal;-webkit-text-stroke:0.3px #a6a6a6;line-height:14px;">42</div>
<div style="left:925px;top:851px;font-size:11px;color:#a6a6a6;font-weight:normal;-webkit-text-stroke:0.3px #a6a6a6;line-height:14px;">48</div>
<div style="left:925px;top:866px;font-size:11px;color:#a6a6a6;font-weight:normal;-webkit-text-stroke:0.3px #a6a6a6;line-height:14px;">54</div>
<div style="left:925px;top:880px;font-size:11px;color:#a6a6a6;font-weight:normal;-webkit-text-stroke:0.3px #a6a6a6;line-height:14px;">60</div>
<div style="left:902px;top:655px;width:3px;height:1px;background:#5c5c5c;"></div>
<div style="left:902px;top:676px;width:3px;height:1px;background:#5c5c5c;"></div>
<div style="left:902px;top:700px;width:3px;height:1px;background:#5c5c5c;"></div>
<div style="left:902px;top:725px;width:3px;height:1px;background:#5c5c5c;"></div>
<div style="left:902px;top:750px;width:3px;height:1px;background:#5c5c5c;"></div>
<div style="left:902px;top:775px;width:3px;height:1px;background:#5c5c5c;"></div>
<div style="left:902px;top:800px;width:3px;height:1px;background:#5c5c5c;"></div>
<div style="left:902px;top:822px;width:3px;height:1px;background:#5c5c5c;"></div>
<div style="left:902px;top:842px;width:3px;height:1px;background:#5c5c5c;"></div>
<div style="left:902px;top:858px;width:3px;height:1px;background:#5c5c5c;"></div>
<div style="left:902px;top:873px;width:3px;height:1px;background:#5c5c5c;"></div>
<div style="left:902px;top:887px;width:3px;height:1px;background:#5c5c5c;"></div>
<div style="left:853px;top:649px;width:37px;height:14.5px;background:#1f1f1f;border-radius:7px"></div>
<div style="left:853px;top:650px;font-size:12px;color:#d2d2d2;font-weight:normal;-webkit-text-stroke:0.3px #d2d2d2;width:37px;text-align:center;line-height:15px;">-0.30</div>
<div style="left:853px;top:669px;width:37px;height:13.5px;background:#1f1f1f;"></div>
<div style="left:853px;top:669.5px;font-size:12px;color:#d2d2d2;font-weight:normal;-webkit-text-stroke:0.3px #d2d2d2;width:37px;text-align:center;line-height:15px;">0</div>
<div style="left:908px;top:649.5px;width:14px;height:252.5px;background:#1b1b1b;"></div>
<div style="left:914.5px;top:649.5px;width:1px;height:252.5px;background:#3a3a3a;"></div>
<div style="left:908.5px;top:737px;width:6px;height:165px;background:#22e65c;"></div>
<div style="left:915.5px;top:737px;width:6px;height:165px;background:#22e65c;"></div>
<div style="left:905px;top:675px;width:17px;height:1.5px;background:#c84a3a;"></div>
<svg style="left:894px;top:668.5px" width="13" height="14"><polygon points="0,0 13,7 0,14" fill="#c2c2c2"/></svg>
<svg style="left:855.5px;top:802.8px" width="32" height="36"><path d="M8.6 33.1 A13.6 13.6 0 0 1 12.9 8.4" fill="none" stroke="#141414" stroke-width="2.5"/><path d="M23.4 33.1 A13.6 13.6 0 0 0 19.1 8.4" fill="none" stroke="#141414" stroke-width="2.5"/><line x1="16" y1="7" x2="16" y2="22" stroke="#141414" stroke-width="2"/><polygon points="12,2.5 20,2.5 16,6.5" fill="#141414"/></svg>
<div style="left:908.5px;top:737px;width:6px;height:8px;background:#9be03a;"></div>
<div style="left:915.5px;top:737px;width:6px;height:8px;background:#9be03a;"></div>
<div style="left:0px;top:649px;width:2px;height:253px;background:#1b1b1b;"></div>
<svg style="left:8px;top:625px" width="16" height="16"><circle cx="8" cy="8" r="6.8" fill="none" stroke="#4a4d20" stroke-width="1.4"/><polygon points="4.6,6.2 11.4,6.2 8,10.6" fill="#4a4d20"/></svg>
<svg style="left:213px;top:625px" width="16" height="16"><circle cx="8" cy="8" r="6.8" fill="none" stroke="#5a3419" stroke-width="1.4"/><rect x="5.2" y="4.9" width="5.6" height="1" fill="#5a3419"/><rect x="5.2" y="7.5" width="5.6" height="1" fill="#5a3419"/><rect x="5.2" y="10.1" width="5.6" height="1" fill="#5a3419"/></svg>
<div style="left:858px;top:852px;width:27px;height:14px;background:#1c1c1c;"></div>
<div style="left:859.5px;top:853.5px;width:24px;height:11px;background:#7c7c7c;"></div>
<div style="left:858px;top:852px;font-size:11px;color:#202020;font-weight:normal;-webkit-text-stroke:0.3px #202020;width:27px;text-align:center;line-height:14px;">Solo</div>
<svg style="left:856px;top:869px" width="32" height="32"><path d="M9.5 27 A12.6 12.6 0 1 1 25.5 25.5" fill="none" stroke="#3f7ad6" stroke-width="2.8"/><line x1="16" y1="16" x2="24" y2="19.5" stroke="#111" stroke-width="2.4"/><line x1="22" y1="26" x2="25" y2="23" stroke="#111" stroke-width="2"/><path d="M12.6 27 A3.6 3.6 0 0 1 19.4 27" fill="none" stroke="#d0d0d0" stroke-width="2"/><rect x="12" y="26.5" width="2" height="3" fill="#d0d0d0"/><rect x="18" y="26.5" width="2" height="3" fill="#d0d0d0"/></svg>
<div style="left:632px;top:655px;width:1px;height:1px;background:#5c5c5c;"></div>
<div style="left:632px;top:676px;width:1px;height:1px;background:#5c5c5c;"></div>
<div style="left:632px;top:700px;width:1px;height:1px;background:#5c5c5c;"></div>
<div style="left:632px;top:725px;width:1px;height:1px;background:#5c5c5c;"></div>
<div style="left:632px;top:750px;width:1px;height:1px;background:#5c5c5c;"></div>
<div style="left:632px;top:775px;width:1px;height:1px;background:#5c5c5c;"></div>
<div style="left:632px;top:800px;width:1px;height:1px;background:#5c5c5c;"></div>
<div style="left:632px;top:822px;width:1px;height:1px;background:#5c5c5c;"></div>
<div style="left:632px;top:842px;width:1px;height:1px;background:#5c5c5c;"></div>
<div style="left:632px;top:858px;width:1px;height:1px;background:#5c5c5c;"></div>
<div style="left:632px;top:873px;width:1px;height:1px;background:#5c5c5c;"></div>
<div style="left:632px;top:887px;width:1px;height:1px;background:#5c5c5c;"></div>
<div style="left:0px;top:918px;width:950px;height:39px;background:#262626;"></div>
<div style="left:0px;top:927px;width:420px;height:20px;background:#2e2e2e;"></div>
<div style="left:431px;top:927px;width:20px;height:20px;background:#2e2e2e;"></div>
<svg style="left:436px;top:932px" width="10" height="10"><polygon points="1,0 9,5 1,10" fill="#c8c8c8"/></svg>
<div style="left:452px;top:927px;width:216px;height:20px;background:#333333;"></div>
<div style="left:586px;top:941px;width:7px;height:1.5px;background:#1f1f1f"></div><div style="left:653px;top:931px;width:5px;height:1.5px;background:#1f1f1f"></div><div style="left:618px;top:937px;width:7px;height:1.5px;background:#1f1f1f"></div><div style="left:466px;top:937px;width:3px;height:1.5px;background:#1f1f1f"></div><div style="left:533px;top:937px;width:5px;height:1.5px;background:#1f1f1f"></div><div style="left:569px;top:937px;width:3px;height:1.5px;background:#1f1f1f"></div><div style="left:609px;top:943px;width:5px;height:1.5px;background:#1f1f1f"></div><div style="left:493px;top:943px;width:3px;height:1.5px;background:#1f1f1f"></div><div style="left:615px;top:931px;width:3px;height:1.5px;background:#1f1f1f"></div><div style="left:585px;top:943px;width:3px;height:1.5px;background:#1f1f1f"></div><div style="left:483px;top:931px;width:3px;height:1.5px;background:#1f1f1f"></div><div style="left:617px;top:937px;width:3px;height:1.5px;background:#1f1f1f"></div><div style="left:516px;top:937px;width:7px;height:1.5px;background:#1f1f1f"></div><div style="left:639px;top:937px;width:3px;height:1.5px;background:#1f1f1f"></div><div style="left:653px;top:937px;width:5px;height:1.5px;background:#1f1f1f"></div><div style="left:518px;top:941px;width:5px;height:1.5px;background:#1f1f1f"></div><div style="left:490px;top:937px;width:5px;height:1.5px;background:#1f1f1f"></div><div style="left:469px;top:941px;width:7px;height:1.5px;background:#1f1f1f"></div><div style="left:578px;top:941px;width:3px;height:1.5px;background:#1f1f1f"></div><div style="left:520px;top:941px;width:5px;height:1.5px;background:#1f1f1f"></div><div style="left:601px;top:937px;width:5px;height:1.5px;background:#1f1f1f"></div><div style="left:554px;top:937px;width:3px;height:1.5px;background:#1f1f1f"></div><div style="left:509px;top:931px;width:7px;height:1.5px;background:#1f1f1f"></div><div style="left:530px;top:943px;width:3px;height:1.5px;background:#1f1f1f"></div><div style="left:570px;top:943px;width:5px;height:1.5px;background:#1f1f1f"></div><div style="left:534px;top:931px;width:5px;height:1.5px;background:#1f1f1f"></div><div style="left:465px;top:937px;width:7px;height:1.5px;background:#1f1f1f"></div><div style="left:656px;top:937px;width:3px;height:1.5px;background:#1f1f1f"></div><div style="left:614px;top:943px;width:5px;height:1.5px;background:#1f1f1f"></div><div style="left:563px;top:941px;width:5px;height:1.5px;background:#1f1f1f"></div><div style="left:478px;top:941px;width:5px;height:1.5px;background:#1f1f1f"></div><div style="left:463px;top:931px;width:3px;height:1.5px;background:#1f1f1f"></div><div style="left:527px;top:941px;width:3px;height:1.5px;background:#1f1f1f"></div><div style="left:526px;top:931px;width:5px;height:1.5px;background:#1f1f1f"></div><div style="left:599px;top:941px;width:3px;height:1.5px;background:#1f1f1f"></div><div style="left:623px;top:937px;width:7px;height:1.5px;background:#1f1f1f"></div><div style="left:600px;top:943px;width:3px;height:1.5px;background:#1f1f1f"></div><div style="left:606px;top:931px;width:7px;height:1.5px;background:#1f1f1f"></div><div style="left:567px;top:943px;width:3px;height:1.5px;background:#1f1f1f"></div><div style="left:505px;top:941px;width:5px;height:1.5px;background:#1f1f1f"></div><div style="left:551px;top:943px;width:3px;height:1.5px;background:#1f1f1f"></div><div style="left:467px;top:931px;width:5px;height:1.5px;background:#1f1f1f"></div><div style="left:525px;top:937px;width:3px;height:1.5px;background:#1f1f1f"></div><div style="left:661px;top:937px;width:7px;height:1.5px;background:#1f1f1f"></div><div style="left:643px;top:943px;width:3px;height:1.5px;background:#1f1f1f"></div><div style="left:490px;top:941px;width:3px;height:1.5px;background:#1f1f1f"></div><div style="left:467px;top:943px;width:5px;height:1.5px;background:#1f1f1f"></div><div style="left:485px;top:937px;width:7px;height:1.5px;background:#1f1f1f"></div><div style="left:550px;top:943px;width:7px;height:1.5px;background:#1f1f1f"></div><div style="left:608px;top:943px;width:5px;height:1.5px;background:#1f1f1f"></div><div style="left:516px;top:943px;width:3px;height:1.5px;background:#1f1f1f"></div><div style="left:479px;top:937px;width:7px;height:1.5px;background:#1f1f1f"></div><div style="left:652px;top:941px;width:3px;height:1.5px;background:#1f1f1f"></div><div style="left:474px;top:941px;width:7px;height:1.5px;background:#1f1f1f"></div><div style="left:619px;top:941px;width:3px;height:1.5px;background:#1f1f1f"></div><div style="left:620px;top:941px;width:7px;height:1.5px;background:#1f1f1f"></div><div style="left:578px;top:931px;width:5px;height:1.5px;background:#1f1f1f"></div><div style="left:531px;top:941px;width:5px;height:1.5px;background:#1f1f1f"></div><div style="left:511px;top:941px;width:5px;height:1.5px;background:#1f1f1f"></div><div style="left:591px;top:931px;width:5px;height:1.5px;background:#1f1f1f"></div>
<div style="left:621px;top:929px;width:2px;height:17px;background:#e8e8e8;"></div>
<div style="left:679px;top:927px;width:21px;height:20px;background:#2e2e2e;"></div>
<svg style="left:685px;top:932px" width="10" height="10"><polygon points="1,0 9,5 1,10" fill="#c8c8c8"/></svg>
<div style="left:700px;top:927px;width:38px;height:20px;background:#2e2e2e;"></div>
<div style="left:700px;top:930px;font-size:12px;color:#cfcfcf;font-weight:bold;width:38px;text-align:center;line-height:14px;">Bass</div>
<div style="left:738px;top:928px;width:13px;height:19px;background:#1e2a30;"></div>
<div style="left:752px;top:928px;width:14px;height:19px;background:#2a3030;"></div>
<div style="left:767px;top:928px;width:42px;height:19px;background:#14262c;"></div>
<div style="left:810px;top:928px;width:12px;height:19px;background:#2e3434;"></div>
<div style="left:823px;top:928px;width:20px;height:19px;background:#282e30;"></div>
<div style="left:844px;top:928px;width:30px;height:19px;background:#1e2426;"></div>
<div style="left:875px;top:928px;width:23px;height:19px;background:#1c1e22;"></div>
<div style="left:811px;top:935px;width:2px;height:1px;background:#5a6a70"></div><div style="left:875px;top:929px;width:5px;height:1px;background:#7a8a90"></div><div style="left:880px;top:930px;width:1px;height:1px;background:#7a8a90"></div><div style="left:853px;top:932px;width:5px;height:1px;background:#406070"></div><div style="left:763px;top:933px;width:2px;height:1px;background:#2a8a9a"></div><div style="left:818px;top:945px;width:1px;height:1px;background:#7a8a90"></div><div style="left:860px;top:936px;width:3px;height:1px;background:#2a8a9a"></div><div style="left:770px;top:933px;width:1px;height:1px;background:#406070"></div><div style="left:860px;top:944px;width:3px;height:1px;background:#406070"></div><div style="left:792px;top:930px;width:5px;height:1px;background:#2a8a9a"></div><div style="left:747px;top:935px;width:2px;height:1px;background:#406070"></div><div style="left:742px;top:936px;width:1px;height:1px;background:#2a8a9a"></div><div style="left:757px;top:939px;width:3px;height:1px;background:#5a6a70"></div><div style="left:739px;top:930px;width:1px;height:1px;background:#7a8a90"></div><div style="left:817px;top:939px;width:2px;height:1px;background:#7a8a90"></div><div style="left:804px;top:936px;width:2px;height:1px;background:#2a8a9a"></div><div style="left:765px;top:939px;width:1px;height:1px;background:#2a8a9a"></div><div style="left:781px;top:941px;width:3px;height:1px;background:#5a6a70"></div><div style="left:854px;top:939px;width:1px;height:1px;background:#2a8a9a"></div><div style="left:875px;top:936px;width:2px;height:1px;background:#5a6a70"></div><div style="left:835px;top:930px;width:1px;height:1px;background:#c88a3a"></div><div style="left:875px;top:931px;width:3px;height:1px;background:#7a8a90"></div><div style="left:809px;top:936px;width:1px;height:1px;background:#7a8a90"></div><div style="left:798px;top:939px;width:5px;height:1px;background:#2a8a9a"></div><div style="left:756px;top:933px;width:3px;height:1px;background:#c88a3a"></div><div style="left:867px;top:934px;width:1px;height:1px;background:#c88a3a"></div><div style="left:820px;top:930px;width:5px;height:1px;background:#406070"></div><div style="left:817px;top:941px;width:1px;height:1px;background:#5a6a70"></div><div style="left:805px;top:933px;width:3px;height:1px;background:#406070"></div><div style="left:889px;top:939px;width:3px;height:1px;background:#5a6a70"></div><div style="left:765px;top:943px;width:1px;height:1px;background:#c88a3a"></div><div style="left:746px;top:946px;width:3px;height:1px;background:#5a6a70"></div><div style="left:888px;top:946px;width:2px;height:1px;background:#7a8a90"></div><div style="left:740px;top:930px;width:5px;height:1px;background:#5a6a70"></div><div style="left:784px;top:929px;width:3px;height:1px;background:#c88a3a"></div><div style="left:760px;top:939px;width:1px;height:1px;background:#5a6a70"></div><div style="left:856px;top:934px;width:1px;height:1px;background:#2a8a9a"></div><div style="left:804px;top:931px;width:5px;height:1px;background:#7a8a90"></div><div style="left:831px;top:943px;width:5px;height:1px;background:#c88a3a"></div><div style="left:793px;top:945px;width:2px;height:1px;background:#c88a3a"></div><div style="left:765px;top:940px;width:2px;height:1px;background:#2a8a9a"></div><div style="left:861px;top:933px;width:2px;height:1px;background:#2a8a9a"></div><div style="left:766px;top:937px;width:5px;height:1px;background:#7a8a90"></div><div style="left:751px;top:938px;width:3px;height:1px;background:#7a8a90"></div><div style="left:823px;top:945px;width:5px;height:1px;background:#2a8a9a"></div><div style="left:824px;top:938px;width:1px;height:1px;background:#7a8a90"></div><div style="left:877px;top:939px;width:1px;height:1px;background:#c88a3a"></div><div style="left:853px;top:941px;width:1px;height:1px;background:#2a8a9a"></div><div style="left:849px;top:937px;width:1px;height:1px;background:#406070"></div><div style="left:845px;top:929px;width:5px;height:1px;background:#5a6a70"></div><div style="left:775px;top:943px;width:5px;height:1px;background:#7a8a90"></div><div style="left:876px;top:930px;width:1px;height:1px;background:#7a8a90"></div><div style="left:835px;top:941px;width:1px;height:1px;background:#406070"></div><div style="left:751px;top:930px;width:1px;height:1px;background:#5a6a70"></div><div style="left:748px;top:935px;width:5px;height:1px;background:#406070"></div><div style="left:742px;top:942px;width:1px;height:1px;background:#c88a3a"></div><div style="left:862px;top:929px;width:2px;height:1px;background:#406070"></div><div style="left:892px;top:946px;width:1px;height:1px;background:#5a6a70"></div><div style="left:879px;top:940px;width:2px;height:1px;background:#406070"></div><div style="left:768px;top:933px;width:1px;height:1px;background:#2a8a9a"></div><div style="left:757px;top:945px;width:3px;height:1px;background:#2a8a9a"></div><div style="left:754px;top:929px;width:2px;height:1px;background:#7a8a90"></div><div style="left:796px;top:940px;width:1px;height:1px;background:#5a6a70"></div><div style="left:779px;top:938px;width:1px;height:1px;background:#5a6a70"></div><div style="left:807px;top:945px;width:1px;height:1px;background:#2a8a9a"></div><div style="left:820px;top:936px;width:5px;height:1px;background:#c88a3a"></div><div style="left:873px;top:939px;width:1px;height:1px;background:#5a6a70"></div><div style="left:846px;top:931px;width:2px;height:1px;background:#2a8a9a"></div><div style="left:892px;top:942px;width:1px;height:1px;background:#406070"></div><div style="left:876px;top:945px;width:1px;height:1px;background:#2a8a9a"></div><div style="left:788px;top:933px;width:3px;height:1px;background:#7a8a90"></div><div style="left:816px;top:935px;width:5px;height:1px;background:#406070"></div><div style="left:771px;top:934px;width:5px;height:1px;background:#406070"></div><div style="left:834px;top:939px;width:5px;height:1px;background:#406070"></div><div style="left:767px;top:936px;width:1px;height:1px;background:#c88a3a"></div><div style="left:765px;top:938px;width:2px;height:1px;background:#5a6a70"></div><div style="left:850px;top:940px;width:1px;height:1px;background:#5a6a70"></div><div style="left:791px;top:937px;width:5px;height:1px;background:#7a8a90"></div><div style="left:771px;top:938px;width:1px;height:1px;background:#c88a3a"></div><div style="left:741px;top:938px;width:2px;height:1px;background:#406070"></div><div style="left:875px;top:935px;width:1px;height:1px;background:#7a8a90"></div><div style="left:811px;top:929px;width:2px;height:1px;background:#7a8a90"></div><div style="left:749px;top:929px;width:1px;height:1px;background:#c88a3a"></div><div style="left:752px;top:935px;width:5px;height:1px;background:#2a8a9a"></div><div style="left:841px;top:936px;width:2px;height:1px;background:#7a8a90"></div><div style="left:818px;top:935px;width:2px;height:1px;background:#c88a3a"></div><div style="left:789px;top:936px;width:2px;height:1px;background:#5a6a70"></div><div style="left:828px;top:929px;width:3px;height:1px;background:#2a8a9a"></div><div style="left:814px;top:944px;width:1px;height:1px;background:#406070"></div><div style="left:781px;top:931px;width:5px;height:1px;background:#406070"></div>
<div style="left:916.0px;top:937px;width:2.5px;height:8px;background:#f0a24a;"></div>
<div style="left:920.5px;top:932px;width:2.5px;height:13px;background:#f0a24a;"></div>
<div style="left:925.0px;top:936px;width:2.5px;height:9px;background:#f0a24a;"></div>
<div style="left:929.5px;top:933px;width:2.5px;height:12px;background:#f0a24a;"></div>
<svg style="left:937px;top:935px" width="8" height="6"><polygon points="0,0 8,0 4,5" fill="#5a5a5a"/></svg>
</body></html>
